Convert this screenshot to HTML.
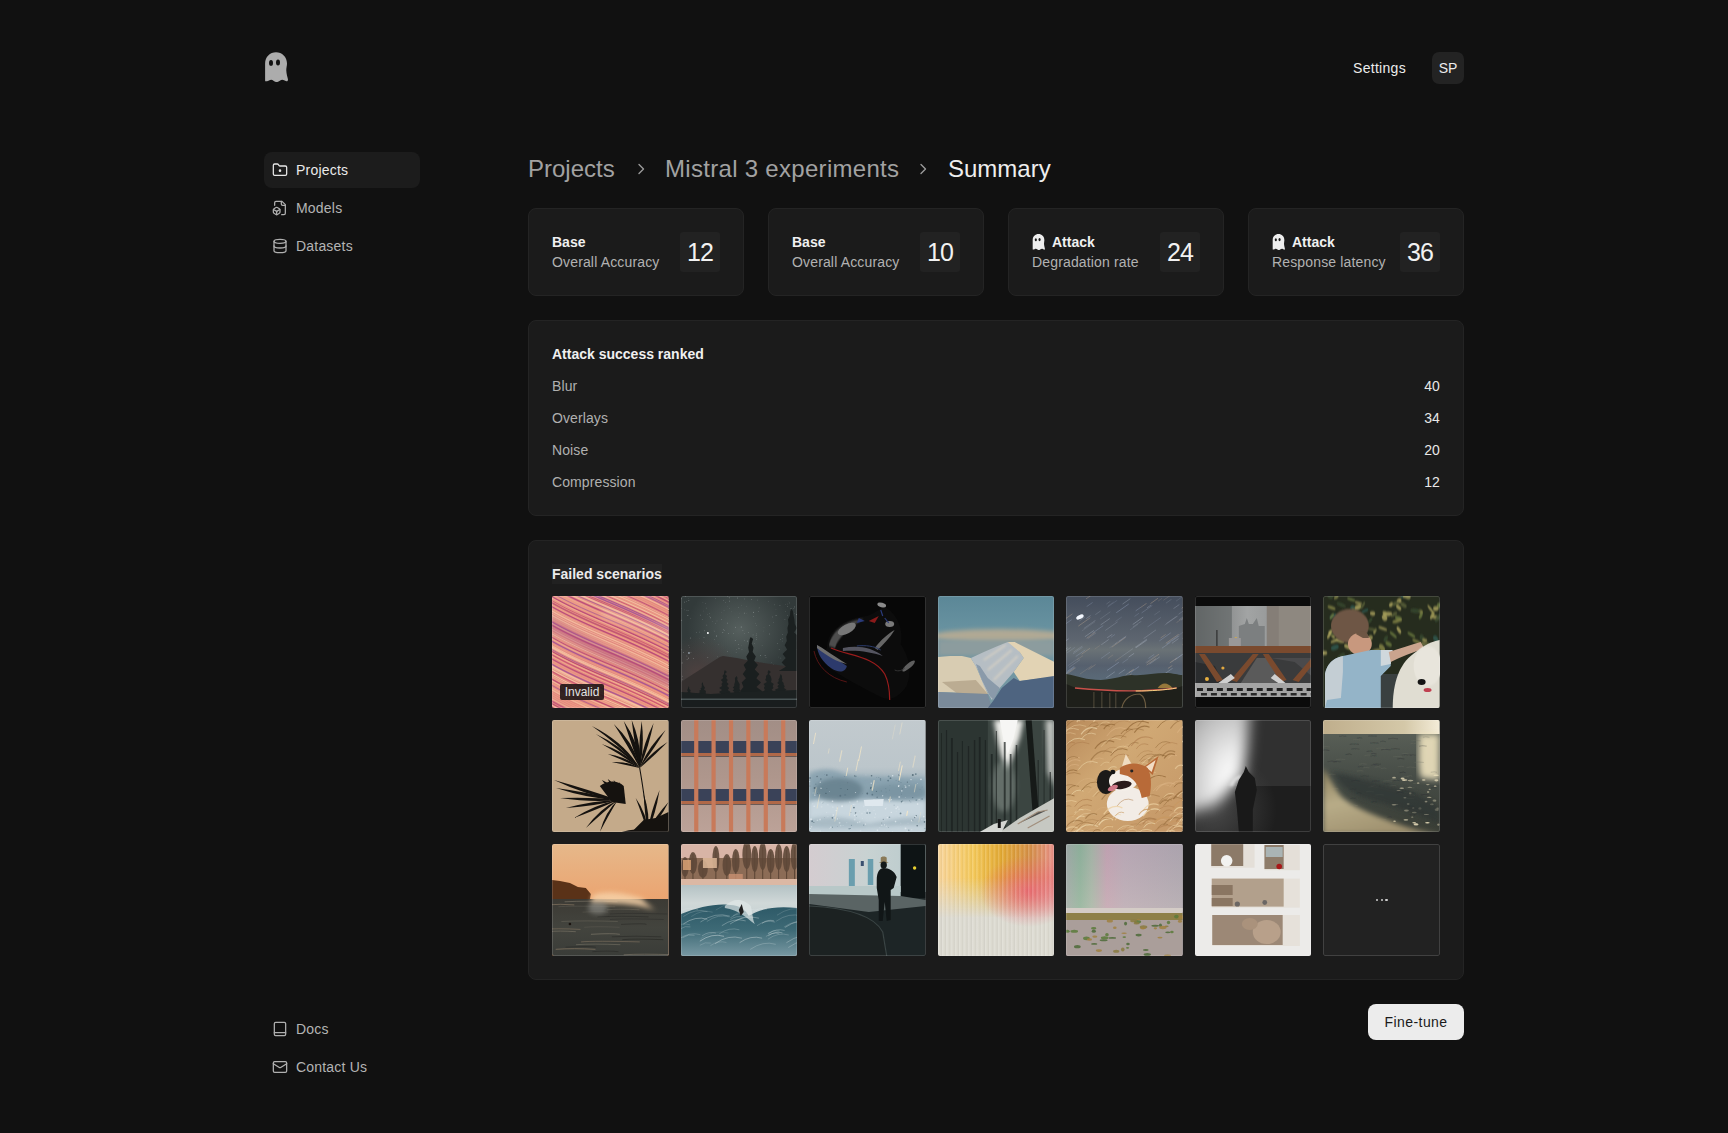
<!DOCTYPE html>
<html><head><meta charset="utf-8">
<style>
*{box-sizing:border-box;margin:0;padding:0}
html,body{width:1728px;height:1133px;background:#111111;overflow:hidden}
body{font-family:"Liberation Sans",sans-serif;font-size:14px;line-height:20px;color:#e6e6e6;position:relative}
.abs{position:absolute}
.logo{left:264px;top:52px;width:24px;height:30px}
.settings{left:1353px;top:58px;color:#ececec;letter-spacing:0.3px}
.avatar{left:1432px;top:52px;width:32px;height:32px;border-radius:7px;background:#232323;color:#ececec;text-align:center;line-height:32px;font-size:14px}
.nav{left:264px;width:156px;height:36px;border-radius:8px;padding:8px 0 0 32px;color:#b4b4b4;letter-spacing:0.2px}
.nav.active{background:#1c1c1c;color:#eaeaea}
.nav svg{position:absolute;left:8px;top:10px;width:16px;height:16px}
.crumb{top:153px;font-size:24px;line-height:32px;color:#a2a2a2}
.chev{top:163px;width:8px;height:12px}
.card{background:#1b1b1b;border:1px solid #242424;border-radius:8px}
.stat{top:208px;width:216px;height:88px}
.stat .t1{position:absolute;left:23px;top:23px;font-weight:bold;color:#f0f0f0}
.stat .t2{position:absolute;left:23px;top:43px;color:#b2b2b2;letter-spacing:0.15px}
.stat .num{position:absolute;left:151px;top:23px;width:40px;height:40px;background:#222222;border-radius:3px;color:#f2f2f2;font-size:25px;line-height:40px;text-align:center;letter-spacing:-1px}
.stat .gh{position:absolute;left:23px;top:25px;width:13px;height:16px}
.rank{left:528px;top:320px;width:936px;height:196px}
.rank .title{position:absolute;left:23px;top:23px;font-weight:bold;color:#f0f0f0}
.rank .row{position:absolute;left:23px;right:23px;height:20px;color:#b0b0b0;letter-spacing:0.1px}
.rank .row span{position:absolute;right:0;top:0;color:#e8e8e8}
.failed{left:528px;top:540px;width:936px;height:440px}
.failed .title{position:absolute;left:23px;top:23px;width:110px;height:20px;font-weight:bold;color:#ebebeb;background:#212121}
.grid{position:absolute;left:23px;top:55px;width:888px;display:grid;grid-template-columns:repeat(7,1fr);grid-template-rows:repeat(3,112px);column-gap:12px;row-gap:12px}
.tile{position:relative;overflow:hidden;border-radius:2px;height:112px}
.tile::after{content:"";position:absolute;inset:0;border:1px solid rgba(255,255,255,0.14);border-radius:2px}
.tile svg{position:absolute;left:0;top:0;width:100%;height:100%}
.btn{left:1368px;top:1004px;width:96px;height:36px;border-radius:8px;background:#ececec;color:#1a1a1a;text-align:center;line-height:36px;letter-spacing:0.45px}
</style></head><body>

<svg class="abs logo" viewBox="0 0 24 30"><path fill="#acacac" d="M1.1,29 L1.1,11.5 C1.1,5 6,0.2 12,0.2 C18,0.2 23,5 23,11.5 C23,14 22.2,16 22.3,18.5 C22.4,22 23.5,25 24,27.5 C24,29 23,29.5 22.5,29.3 C20.5,28.8 19.5,27.8 18.3,27.8 C16.5,27.8 14.5,30.1 12.7,30.1 C10.5,30.1 9,27.8 7.2,27.8 C5.5,27.8 4.5,29.2 2.9,29.2 C2,29.2 1.1,29.5 1.1,29 Z"/><ellipse cx="7" cy="10.9" rx="2" ry="2.9" fill="#111"/><ellipse cx="14" cy="10.5" rx="2" ry="2.9" fill="#111"/></svg>

<div class="abs settings">Settings</div>
<div class="abs avatar">SP</div>

<div class="abs nav active" style="top:152px">
<svg viewBox="0 0 24 24" fill="none" stroke="#e6e6e6" stroke-width="1.9" stroke-linecap="round" stroke-linejoin="round"><path d="M4 20h16a2 2 0 0 0 2-2V8a2 2 0 0 0-2-2h-7.9a2 2 0 0 1-1.69-.9L9.6 3.9A2 2 0 0 0 7.93 3H4a2 2 0 0 0-2 2v13c0 1.1.9 2 2 2Z"/><circle cx="12" cy="13" r="1" fill="#e6e6e6"/></svg>Projects</div>
<div class="abs nav" style="top:190px">
<svg viewBox="0 0 24 24" fill="none" stroke="#b0b0b0" stroke-width="1.9" stroke-linecap="round" stroke-linejoin="round"><path d="M14.5 22H18a2 2 0 0 0 2-2V7l-5-5H6a2 2 0 0 0-2 2v4"/><path d="M14 2v4a2 2 0 0 0 2 2h4"/><path d="M3 13.1a2 2 0 0 0-1 1.76v3.24a2 2 0 0 0 .97 1.78L6 21.7a2 2 0 0 0 2.03.01L11 19.9a2 2 0 0 0 1-1.76V14.9a2 2 0 0 0-.97-1.78L8 11.3a2 2 0 0 0-2.030-.01Z"/><path d="M7 17v5"/><path d="M11.700 14.2 7 17l-4.7-2.8"/></svg>Models</div>
<div class="abs nav" style="top:228px">
<svg viewBox="0 0 24 24" fill="none" stroke="#b0b0b0" stroke-width="1.9" stroke-linecap="round" stroke-linejoin="round"><ellipse cx="12" cy="5" rx="9" ry="3"/><path d="M3 5V19A9 3 0 0 0 21 19V5"/><path d="M3 12A9 3 0 0 0 21 12"/></svg>Datasets</div>

<div class="abs nav" style="top:1011px">
<svg viewBox="0 0 24 24" fill="none" stroke="#b0b0b0" stroke-width="1.9" stroke-linecap="round" stroke-linejoin="round"><rect x="3.5" y="2" width="17" height="20" rx="2"/><path d="M3.5 17.5h17"/></svg>Docs</div>
<div class="abs nav" style="top:1049px">
<svg viewBox="0 0 24 24" fill="none" stroke="#b0b0b0" stroke-width="1.9" stroke-linecap="round" stroke-linejoin="round"><rect width="20" height="16" x="2" y="4" rx="2"/><path d="m22 7-8.97 5.7a1.94 1.94 0 0 1-2.06 0L2 7"/></svg>Contact Us</div>

<div class="abs crumb" style="left:528px">Projects</div>
<svg class="abs chev" style="left:637px" viewBox="0 0 8 12" fill="none" stroke="#9a9a9a" stroke-width="1.4" stroke-linecap="round" stroke-linejoin="round"><path d="M2 1.5 6.5 6 2 10.5"/></svg>
<div class="abs crumb" style="left:665px;letter-spacing:0.3px">Mistral 3 experiments</div>
<svg class="abs chev" style="left:919px" viewBox="0 0 8 12" fill="none" stroke="#9a9a9a" stroke-width="1.4" stroke-linecap="round" stroke-linejoin="round"><path d="M2 1.5 6.5 6 2 10.5"/></svg>
<div class="abs crumb" style="left:948px;color:#eeeeee">Summary</div>

<div class="abs card stat" style="left:528px"><div class="t1">Base</div><div class="t2">Overall Accuracy</div><div class="num">12</div></div>
<div class="abs card stat" style="left:768px"><div class="t1">Base</div><div class="t2">Overall Accuracy</div><div class="num">10</div></div>
<div class="abs card stat" style="left:1008px"><svg class="gh" viewBox="0 0 24 30"><path fill="#eeeeee" d="M1.1,29 L1.1,11.5 C1.1,5 6,0.2 12,0.2 C18,0.2 23,5 23,11.5 C23,14 22.2,16 22.3,18.5 C22.4,22 23.5,25 24,27.5 C24,29 23,29.5 22.5,29.3 C20.5,28.8 19.5,27.8 18.3,27.8 C16.5,27.8 14.5,30.1 12.7,30.1 C10.5,30.1 9,27.8 7.2,27.8 C5.5,27.8 4.5,29.2 2.9,29.2 C2,29.2 1.1,29.5 1.1,29 Z"/><ellipse cx="7" cy="10.9" rx="2" ry="2.9" fill="#1b1b1b"/><ellipse cx="14" cy="10.5" rx="2" ry="2.9" fill="#1b1b1b"/></svg><div class="t1" style="left:43px">Attack</div><div class="t2">Degradation rate</div><div class="num">24</div></div>
<div class="abs card stat" style="left:1248px"><svg class="gh" viewBox="0 0 24 30"><path fill="#eeeeee" d="M1.1,29 L1.1,11.5 C1.1,5 6,0.2 12,0.2 C18,0.2 23,5 23,11.5 C23,14 22.2,16 22.3,18.5 C22.4,22 23.5,25 24,27.5 C24,29 23,29.5 22.5,29.3 C20.5,28.8 19.5,27.8 18.3,27.8 C16.5,27.8 14.5,30.1 12.7,30.1 C10.5,30.1 9,27.8 7.2,27.8 C5.5,27.8 4.5,29.2 2.9,29.2 C2,29.2 1.1,29.5 1.1,29 Z"/><ellipse cx="7" cy="10.9" rx="2" ry="2.9" fill="#1b1b1b"/><ellipse cx="14" cy="10.5" rx="2" ry="2.9" fill="#1b1b1b"/></svg><div class="t1" style="left:43px">Attack</div><div class="t2">Response latency</div><div class="num">36</div></div>

<div class="abs card rank">
<div class="title">Attack success ranked</div>
<div class="row" style="top:55px">Blur<span>40</span></div>
<div class="row" style="top:87px">Overlays<span>34</span></div>
<div class="row" style="top:119px">Noise<span>20</span></div>
<div class="row" style="top:151px">Compression<span>12</span></div>
</div>

<div class="abs card failed">
<div class="title">Failed scenarios</div>
<div class="grid">
<div class="tile"><svg viewBox="0 0 117 112" preserveAspectRatio="none"><defs><linearGradient id="g1a" x1="0" y1="0" x2="1" y2="1"><stop offset="0" stop-color="#e89a88"/><stop offset="0.5" stop-color="#e2887e"/><stop offset="1" stop-color="#ea927a"/></linearGradient><filter id="f1" x="-0.2" y="-0.5" width="1.4" height="2"><feGaussianBlur stdDeviation="3"/></filter></defs><rect width="117" height="112" fill="url(#g1a)"/><path d="M-5,-90.0 C30,-68.0 70,-58.0 122,-30.0" stroke="#9a4a9a" stroke-width="1.1" fill="none" opacity="0.56"/><path d="M-5,-87.6 C30,-65.6 70,-55.6 122,-27.6" stroke="#b03a78" stroke-width="1.4" fill="none" opacity="0.61"/><path d="M-5,-86.1 C30,-64.1 70,-54.1 122,-26.1" stroke="#f4b090" stroke-width="0.9" fill="none" opacity="0.63"/><path d="M-5,-83.7 C30,-61.7 70,-51.7 122,-23.7" stroke="#9a4a9a" stroke-width="1.2" fill="none" opacity="0.72"/><path d="M-5,-82.2 C30,-60.2 70,-50.2 122,-22.2" stroke="#f8c8a4" stroke-width="1.6" fill="none" opacity="0.51"/><path d="M-5,-79.8 C30,-57.8 70,-47.8 122,-19.8" stroke="#9a4a9a" stroke-width="1.2" fill="none" opacity="0.72"/><path d="M-5,-77.7 C30,-55.7 70,-45.7 122,-17.7" stroke="#f8c8a4" stroke-width="1.3" fill="none" opacity="0.69"/><path d="M-5,-75.9 C30,-53.9 70,-43.9 122,-15.9" stroke="#f8c8a4" stroke-width="1.3" fill="none" opacity="0.69"/><path d="M-5,-73.9 C30,-51.9 70,-41.9 122,-13.9" stroke="#fad2ac" stroke-width="1.2" fill="none" opacity="0.78"/><path d="M-5,-72.1 C30,-50.1 70,-40.1 122,-12.1" stroke="#9a4a9a" stroke-width="1.3" fill="none" opacity="0.62"/><path d="M-5,-70.0 C30,-48.0 70,-38.0 122,-10.0" stroke="#fad2ac" stroke-width="1.4" fill="none" opacity="0.59"/><path d="M-5,-67.4 C30,-45.4 70,-35.4 122,-7.4" stroke="#a8306a" stroke-width="0.9" fill="none" opacity="0.65"/><path d="M-5,-64.9 C30,-42.9 70,-32.9 122,-4.9" stroke="#f8c8a4" stroke-width="1.4" fill="none" opacity="0.67"/><path d="M-5,-62.4 C30,-40.4 70,-30.4 122,-2.4" stroke="#c24470" stroke-width="1.2" fill="none" opacity="0.72"/><path d="M-5,-60.5 C30,-38.5 70,-28.5 122,-0.5" stroke="#fad2ac" stroke-width="1.2" fill="none" opacity="0.70"/><path d="M-5,-59.0 C30,-37.0 70,-27.0 122,1.0" stroke="#f0a088" stroke-width="1.0" fill="none" opacity="0.62"/><path d="M-5,-56.8 C30,-34.8 70,-24.8 122,3.2" stroke="#a8306a" stroke-width="1.0" fill="none" opacity="0.73"/><path d="M-5,-54.8 C30,-32.8 70,-22.8 122,5.2" stroke="#c24470" stroke-width="0.9" fill="none" opacity="0.62"/><path d="M-5,-52.9 C30,-30.9 70,-20.9 122,7.1" stroke="#f8c8a4" stroke-width="0.9" fill="none" opacity="0.62"/><path d="M-5,-51.2 C30,-29.2 70,-19.2 122,8.8" stroke="#a8306a" stroke-width="1.4" fill="none" opacity="0.63"/><path d="M-5,-49.3 C30,-27.3 70,-17.3 122,10.7" stroke="#f0a088" stroke-width="1.6" fill="none" opacity="0.55"/><path d="M-5,-47.7 C30,-25.7 70,-15.7 122,12.3" stroke="#9a4a9a" stroke-width="0.8" fill="none" opacity="0.80"/><path d="M-5,-46.1 C30,-24.1 70,-14.1 122,13.9" stroke="#9a4a9a" stroke-width="1.1" fill="none" opacity="0.66"/><path d="M-5,-44.0 C30,-22.0 70,-12.0 122,16.0" stroke="#f8c8a4" stroke-width="1.2" fill="none" opacity="0.76"/><path d="M-5,-41.5 C30,-19.5 70,-9.5 122,18.5" stroke="#f0a088" stroke-width="1.1" fill="none" opacity="0.62"/><path d="M-5,-39.5 C30,-17.5 70,-7.5 122,20.5" stroke="#f4b090" stroke-width="0.9" fill="none" opacity="0.56"/><path d="M-5,-37.9 C30,-15.9 70,-5.9 122,22.1" stroke="#b03a78" stroke-width="0.9" fill="none" opacity="0.72"/><path d="M-5,-35.8 C30,-13.8 70,-3.8 122,24.2" stroke="#f8c8a4" stroke-width="0.9" fill="none" opacity="0.56"/><path d="M-5,-34.0 C30,-12.0 70,-2.0 122,26.0" stroke="#fad2ac" stroke-width="1.3" fill="none" opacity="0.64"/><path d="M-5,-32.5 C30,-10.5 70,-0.5 122,27.5" stroke="#f0a088" stroke-width="1.2" fill="none" opacity="0.59"/><path d="M-5,-30.9 C30,-8.9 70,1.1 122,29.1" stroke="#fad2ac" stroke-width="1.2" fill="none" opacity="0.71"/><path d="M-5,-28.9 C30,-6.9 70,3.1 122,31.1" stroke="#c24470" stroke-width="0.9" fill="none" opacity="0.71"/><path d="M-5,-27.4 C30,-5.4 70,4.6 122,32.6" stroke="#f8c8a4" stroke-width="1.4" fill="none" opacity="0.58"/><path d="M-5,-25.6 C30,-3.6 70,6.4 122,34.4" stroke="#9a4a9a" stroke-width="1.2" fill="none" opacity="0.78"/><path d="M-5,-23.8 C30,-1.8 70,8.2 122,36.2" stroke="#9a4a9a" stroke-width="1.4" fill="none" opacity="0.80"/><path d="M-5,-21.5 C30,0.5 70,10.5 122,38.5" stroke="#a8306a" stroke-width="1.0" fill="none" opacity="0.56"/><path d="M-5,-20.1 C30,1.9 70,11.9 122,39.9" stroke="#c24470" stroke-width="0.9" fill="none" opacity="0.73"/><path d="M-5,-18.3 C30,3.7 70,13.7 122,41.7" stroke="#fad2ac" stroke-width="1.6" fill="none" opacity="0.61"/><path d="M-5,-16.6 C30,5.4 70,15.4 122,43.4" stroke="#9a4a9a" stroke-width="1.0" fill="none" opacity="0.69"/><path d="M-5,-14.0 C30,8.0 70,18.0 122,46.0" stroke="#f8c8a4" stroke-width="1.2" fill="none" opacity="0.70"/><path d="M-5,-11.7 C30,10.3 70,20.3 122,48.3" stroke="#b03a78" stroke-width="1.4" fill="none" opacity="0.78"/><path d="M-5,-9.4 C30,12.6 70,22.6 122,50.6" stroke="#f4b090" stroke-width="1.1" fill="none" opacity="0.69"/><path d="M-5,-7.8 C30,14.2 70,24.2 122,52.2" stroke="#f0a088" stroke-width="1.2" fill="none" opacity="0.72"/><path d="M-5,-6.3 C30,15.7 70,25.7 122,53.7" stroke="#9a4a9a" stroke-width="0.8" fill="none" opacity="0.73"/><path d="M-5,-4.4 C30,17.6 70,27.6 122,55.6" stroke="#f0a088" stroke-width="1.3" fill="none" opacity="0.61"/><path d="M-5,-2.3 C30,19.7 70,29.7 122,57.7" stroke="#b03a78" stroke-width="1.4" fill="none" opacity="0.77"/><path d="M-5,-0.8 C30,21.2 70,31.2 122,59.2" stroke="#f4b090" stroke-width="1.1" fill="none" opacity="0.76"/><path d="M-5,1.6 C30,23.6 70,33.6 122,61.6" stroke="#c24470" stroke-width="0.9" fill="none" opacity="0.70"/><path d="M-5,3.9 C30,25.9 70,35.9 122,63.9" stroke="#a8306a" stroke-width="1.4" fill="none" opacity="0.57"/><path d="M-5,6.2 C30,28.2 70,38.2 122,66.2" stroke="#f0a088" stroke-width="1.5" fill="none" opacity="0.76"/><path d="M-5,7.7 C30,29.7 70,39.7 122,67.7" stroke="#b03a78" stroke-width="1.4" fill="none" opacity="0.78"/><path d="M-5,9.9 C30,31.9 70,41.9 122,69.9" stroke="#f4b090" stroke-width="0.9" fill="none" opacity="0.64"/><path d="M-5,12.1 C30,34.1 70,44.1 122,72.1" stroke="#fad2ac" stroke-width="1.3" fill="none" opacity="0.66"/><path d="M-5,14.1 C30,36.1 70,46.1 122,74.1" stroke="#f8c8a4" stroke-width="1.0" fill="none" opacity="0.58"/><path d="M-5,16.5 C30,38.5 70,48.5 122,76.5" stroke="#f8c8a4" stroke-width="1.4" fill="none" opacity="0.77"/><path d="M-5,18.4 C30,40.4 70,50.4 122,78.4" stroke="#f4b090" stroke-width="1.4" fill="none" opacity="0.64"/><path d="M-5,20.4 C30,42.4 70,52.4 122,80.4" stroke="#f4b090" stroke-width="1.4" fill="none" opacity="0.76"/><path d="M-5,23.0 C30,45.0 70,55.0 122,83.0" stroke="#9a4a9a" stroke-width="1.4" fill="none" opacity="0.59"/><path d="M-5,24.5 C30,46.5 70,56.5 122,84.5" stroke="#f8c8a4" stroke-width="1.3" fill="none" opacity="0.63"/><path d="M-5,26.2 C30,48.2 70,58.2 122,86.2" stroke="#b03a78" stroke-width="1.4" fill="none" opacity="0.60"/><path d="M-5,28.4 C30,50.4 70,60.4 122,88.4" stroke="#f4b090" stroke-width="1.0" fill="none" opacity="0.54"/><path d="M-5,30.4 C30,52.4 70,62.4 122,90.4" stroke="#f8c8a4" stroke-width="1.1" fill="none" opacity="0.65"/><path d="M-5,33.0 C30,55.0 70,65.0 122,93.0" stroke="#f4b090" stroke-width="1.4" fill="none" opacity="0.80"/><path d="M-5,34.8 C30,56.8 70,66.8 122,94.8" stroke="#fad2ac" stroke-width="1.1" fill="none" opacity="0.72"/><path d="M-5,36.3 C30,58.3 70,68.3 122,96.3" stroke="#f0a088" stroke-width="1.4" fill="none" opacity="0.62"/><path d="M-5,38.3 C30,60.3 70,70.3 122,98.3" stroke="#b03a78" stroke-width="0.9" fill="none" opacity="0.83"/><path d="M-5,40.0 C30,62.0 70,72.0 122,100.0" stroke="#f8c8a4" stroke-width="1.0" fill="none" opacity="0.51"/><path d="M-5,42.3 C30,64.3 70,74.3 122,102.3" stroke="#9a4a9a" stroke-width="1.4" fill="none" opacity="0.80"/><path d="M-5,44.5 C30,66.5 70,76.5 122,104.5" stroke="#f0a088" stroke-width="0.9" fill="none" opacity="0.78"/><path d="M-5,46.6 C30,68.6 70,78.6 122,106.6" stroke="#f8c8a4" stroke-width="1.0" fill="none" opacity="0.74"/><path d="M-5,48.2 C30,70.2 70,80.2 122,108.2" stroke="#fad2ac" stroke-width="1.6" fill="none" opacity="0.69"/><path d="M-5,50.6 C30,72.6 70,82.6 122,110.6" stroke="#9a4a9a" stroke-width="0.8" fill="none" opacity="0.81"/><path d="M-5,52.5 C30,74.5 70,84.5 122,112.5" stroke="#a8306a" stroke-width="1.4" fill="none" opacity="0.63"/><path d="M-5,54.1 C30,76.1 70,86.1 122,114.1" stroke="#f4b090" stroke-width="1.6" fill="none" opacity="0.79"/><path d="M-5,55.8 C30,77.8 70,87.8 122,115.8" stroke="#c24470" stroke-width="1.2" fill="none" opacity="0.71"/><path d="M-5,57.4 C30,79.4 70,89.4 122,117.4" stroke="#f4b090" stroke-width="1.0" fill="none" opacity="0.74"/><path d="M-5,60.0 C30,82.0 70,92.0 122,120.0" stroke="#b03a78" stroke-width="1.3" fill="none" opacity="0.72"/><path d="M-5,61.7 C30,83.7 70,93.7 122,121.7" stroke="#f0a088" stroke-width="0.9" fill="none" opacity="0.75"/><path d="M-5,63.6 C30,85.6 70,95.6 122,123.6" stroke="#f0a088" stroke-width="1.6" fill="none" opacity="0.59"/><path d="M-5,65.2 C30,87.2 70,97.2 122,125.2" stroke="#9a4a9a" stroke-width="1.4" fill="none" opacity="0.76"/><path d="M-5,67.4 C30,89.4 70,99.4 122,127.4" stroke="#fad2ac" stroke-width="1.6" fill="none" opacity="0.75"/><path d="M-5,68.8 C30,90.8 70,100.8 122,128.8" stroke="#fad2ac" stroke-width="1.1" fill="none" opacity="0.52"/><path d="M-5,71.0 C30,93.0 70,103.0 122,131.0" stroke="#fad2ac" stroke-width="1.3" fill="none" opacity="0.71"/><path d="M-5,72.5 C30,94.5 70,104.5 122,132.5" stroke="#c24470" stroke-width="1.1" fill="none" opacity="0.63"/><path d="M-5,75.0 C30,97.0 70,107.0 122,135.0" stroke="#fad2ac" stroke-width="1.0" fill="none" opacity="0.79"/><path d="M-5,76.8 C30,98.8 70,108.8 122,136.8" stroke="#f8c8a4" stroke-width="1.1" fill="none" opacity="0.53"/><path d="M-5,78.5 C30,100.5 70,110.5 122,138.5" stroke="#f4b090" stroke-width="1.2" fill="none" opacity="0.50"/><path d="M-5,80.2 C30,102.2 70,112.2 122,140.2" stroke="#a8306a" stroke-width="1.2" fill="none" opacity="0.67"/><path d="M-5,82.0 C30,104.0 70,114.0 122,142.0" stroke="#f8c8a4" stroke-width="1.3" fill="none" opacity="0.66"/><path d="M-5,84.3 C30,106.3 70,116.3 122,144.3" stroke="#f0a088" stroke-width="1.4" fill="none" opacity="0.72"/><path d="M-5,86.3 C30,108.3 70,118.3 122,146.3" stroke="#9a4a9a" stroke-width="0.8" fill="none" opacity="0.80"/><path d="M-5,88.8 C30,110.8 70,120.8 122,148.8" stroke="#f4b090" stroke-width="1.5" fill="none" opacity="0.73"/><path d="M-5,90.9 C30,112.9 70,122.9 122,150.9" stroke="#f8c8a4" stroke-width="1.5" fill="none" opacity="0.68"/><path d="M-5,93.3 C30,115.3 70,125.3 122,153.3" stroke="#f4b090" stroke-width="0.9" fill="none" opacity="0.51"/><path d="M-5,95.5 C30,117.5 70,127.5 122,155.5" stroke="#f0a088" stroke-width="1.5" fill="none" opacity="0.67"/><path d="M-5,97.6 C30,119.6 70,129.6 122,157.6" stroke="#f4b090" stroke-width="1.2" fill="none" opacity="0.50"/><path d="M-5,100.0 C30,122.0 70,132.0 122,160.0" stroke="#f8c8a4" stroke-width="1.3" fill="none" opacity="0.52"/><path d="M-5,102.3 C30,124.3 70,134.3 122,162.3" stroke="#b03a78" stroke-width="1.4" fill="none" opacity="0.62"/><path d="M-5,104.6 C30,126.6 70,136.6 122,164.6" stroke="#a8306a" stroke-width="1.1" fill="none" opacity="0.66"/><path d="M-5,106.6 C30,128.6 70,138.6 122,166.6" stroke="#f8c8a4" stroke-width="1.3" fill="none" opacity="0.69"/><path d="M-5,108.1 C30,130.1 70,140.1 122,168.1" stroke="#c24470" stroke-width="1.3" fill="none" opacity="0.76"/><path d="M-5,110.2 C30,132.2 70,142.2 122,170.2" stroke="#a8306a" stroke-width="0.8" fill="none" opacity="0.63"/><path d="M-5,112.4 C30,134.4 70,144.4 122,172.4" stroke="#f0a088" stroke-width="1.0" fill="none" opacity="0.65"/><path d="M-5,114.4 C30,136.4 70,146.4 122,174.4" stroke="#f8c8a4" stroke-width="1.6" fill="none" opacity="0.66"/><path d="M-5,116.1 C30,138.1 70,148.1 122,176.1" stroke="#a8306a" stroke-width="0.8" fill="none" opacity="0.69"/><path d="M-5,118.5 C30,140.5 70,150.5 122,178.5" stroke="#f0a088" stroke-width="1.6" fill="none" opacity="0.62"/><path d="M-5,121.0 C30,143.0 70,153.0 122,181.0" stroke="#f8c8a4" stroke-width="1.3" fill="none" opacity="0.54"/><path d="M-5,123.1 C30,145.1 70,155.1 122,183.1" stroke="#f4b090" stroke-width="1.3" fill="none" opacity="0.69"/><path d="M-5,124.8 C30,146.8 70,156.8 122,184.8" stroke="#c24470" stroke-width="1.0" fill="none" opacity="0.82"/><path d="M-5,126.8 C30,148.8 70,158.8 122,186.8" stroke="#b03a78" stroke-width="1.5" fill="none" opacity="0.75"/><path d="M-5,128.7 C30,150.7 70,160.7 122,188.7" stroke="#f0a088" stroke-width="1.1" fill="none" opacity="0.59"/><path d="M-5,131.1 C30,153.1 70,163.1 122,191.1" stroke="#c24470" stroke-width="1.4" fill="none" opacity="0.59"/><path d="M-5,133.6 C30,155.6 70,165.6 122,193.6" stroke="#fad2ac" stroke-width="1.0" fill="none" opacity="0.52"/><path d="M-5,135.4 C30,157.4 70,167.4 122,195.4" stroke="#f8c8a4" stroke-width="1.1" fill="none" opacity="0.63"/><path d="M-5,137.2 C30,159.2 70,169.2 122,197.2" stroke="#b03a78" stroke-width="0.8" fill="none" opacity="0.75"/><path d="M-5,139.3 C30,161.3 70,171.3 122,199.3" stroke="#c24470" stroke-width="1.1" fill="none" opacity="0.64"/><path d="M-5,141.7 C30,163.7 70,173.7 122,201.7" stroke="#f0a088" stroke-width="1.5" fill="none" opacity="0.74"/><path d="M-5,143.8 C30,165.8 70,175.8 122,203.8" stroke="#f4b090" stroke-width="1.4" fill="none" opacity="0.51"/><path d="M-5,146.1 C30,168.1 70,178.1 122,206.1" stroke="#f4b090" stroke-width="1.3" fill="none" opacity="0.59"/><path d="M-5,147.6 C30,169.6 70,179.6 122,207.6" stroke="#f4b090" stroke-width="0.9" fill="none" opacity="0.62"/><path d="M-5,149.3 C30,171.3 70,181.3 122,209.3" stroke="#c24470" stroke-width="1.1" fill="none" opacity="0.62"/><path d="M-5,18 C25,36 60,54 122,80 L122,94 C60,68 25,50 -5,34 Z" fill="#8a2a80" opacity="0.3" filter="url(#f1)"/><path d="M50,10 C70,18 90,24 122,30 L122,44 C90,36 70,28 50,22 Z" fill="#fff0d0" opacity="0.22" filter="url(#f1)"/></svg><div style="position:absolute;left:8px;top:88px;width:44px;height:16px;background:rgba(32,22,22,0.9);border-radius:2px;color:#e2e2e2;font-size:12px;line-height:16px;text-align:center;z-index:2">Invalid</div></div>
<div class="tile"><svg viewBox="0 0 117 112" preserveAspectRatio="none"><defs><radialGradient id="g2a" cx="0.5" cy="0.3" r="0.45"><stop offset="0" stop-color="#5e6866" stop-opacity="0.8"/><stop offset="1" stop-color="#5e6866" stop-opacity="0"/></radialGradient><radialGradient id="g2b" cx="0.15" cy="0.7" r="0.35"><stop offset="0" stop-color="#5a4442" stop-opacity="0.7"/><stop offset="1" stop-color="#5a4442" stop-opacity="0"/></radialGradient></defs><rect width="117" height="112" fill="#323a3a"/><rect width="117" height="112" fill="url(#g2a)"/><rect width="117" height="112" fill="url(#g2b)"/><circle cx="78.3" cy="12.0" r="0.36" fill="#d8e0e0" opacity="0.34"/><circle cx="58.6" cy="81.2" r="0.34" fill="#d8e0e0" opacity="0.53"/><circle cx="38.9" cy="75.9" r="0.31" fill="#d8e0e0" opacity="0.57"/><circle cx="28.6" cy="17.5" r="0.34" fill="#d8e0e0" opacity="0.46"/><circle cx="43.1" cy="80.9" r="0.25" fill="#d8e0e0" opacity="0.31"/><circle cx="101.9" cy="38.3" r="0.39" fill="#d8e0e0" opacity="0.41"/><circle cx="31.6" cy="75.2" r="0.32" fill="#d8e0e0" opacity="0.59"/><circle cx="42.1" cy="68.7" r="0.33" fill="#d8e0e0" opacity="0.70"/><circle cx="99.3" cy="9.3" r="0.42" fill="#d8e0e0" opacity="0.49"/><circle cx="75.6" cy="43.2" r="0.28" fill="#d8e0e0" opacity="0.71"/><circle cx="113.3" cy="12.7" r="0.31" fill="#d8e0e0" opacity="0.68"/><circle cx="94.1" cy="96.8" r="0.32" fill="#d8e0e0" opacity="0.34"/><circle cx="108.8" cy="92.8" r="0.33" fill="#d8e0e0" opacity="0.53"/><circle cx="52.5" cy="78.3" r="0.26" fill="#d8e0e0" opacity="0.38"/><circle cx="113.7" cy="10.9" r="0.41" fill="#d8e0e0" opacity="0.65"/><circle cx="99.0" cy="89.5" r="0.22" fill="#d8e0e0" opacity="0.69"/><circle cx="0.2" cy="12.6" r="0.34" fill="#d8e0e0" opacity="0.32"/><circle cx="83.7" cy="96.2" r="0.36" fill="#d8e0e0" opacity="0.56"/><circle cx="51.2" cy="76.4" r="0.22" fill="#d8e0e0" opacity="0.45"/><circle cx="110.4" cy="19.2" r="0.27" fill="#d8e0e0" opacity="0.70"/><circle cx="0.1" cy="53.7" r="0.45" fill="#d8e0e0" opacity="0.44"/><circle cx="37.0" cy="83.9" r="0.26" fill="#d8e0e0" opacity="0.56"/><circle cx="64.0" cy="2.9" r="0.30" fill="#d8e0e0" opacity="0.62"/><circle cx="6.5" cy="19.4" r="0.42" fill="#d8e0e0" opacity="0.62"/><circle cx="9.5" cy="22.8" r="0.31" fill="#d8e0e0" opacity="0.49"/><circle cx="57.7" cy="69.6" r="0.38" fill="#d8e0e0" opacity="0.48"/><circle cx="46.4" cy="0.7" r="0.27" fill="#d8e0e0" opacity="0.72"/><circle cx="7.9" cy="49.6" r="0.25" fill="#d8e0e0" opacity="0.68"/><circle cx="22.7" cy="46.5" r="0.27" fill="#d8e0e0" opacity="0.74"/><circle cx="12.8" cy="62.4" r="0.35" fill="#d8e0e0" opacity="0.75"/><circle cx="56.8" cy="91.0" r="0.21" fill="#d8e0e0" opacity="0.60"/><circle cx="107.9" cy="5.4" r="0.21" fill="#d8e0e0" opacity="0.60"/><circle cx="48.6" cy="71.0" r="0.25" fill="#d8e0e0" opacity="0.52"/><circle cx="83.3" cy="31.4" r="0.23" fill="#d8e0e0" opacity="0.34"/><circle cx="19.4" cy="19.1" r="0.36" fill="#d8e0e0" opacity="0.56"/><circle cx="54.7" cy="31.2" r="0.38" fill="#d8e0e0" opacity="0.72"/><circle cx="115.2" cy="44.2" r="0.23" fill="#d8e0e0" opacity="0.34"/><circle cx="9.4" cy="42.0" r="0.42" fill="#d8e0e0" opacity="0.58"/><circle cx="88.8" cy="38.0" r="0.39" fill="#d8e0e0" opacity="0.45"/><circle cx="94.1" cy="8.8" r="0.38" fill="#d8e0e0" opacity="0.40"/><circle cx="63.4" cy="44.6" r="0.28" fill="#d8e0e0" opacity="0.67"/><circle cx="55.5" cy="63.2" r="0.26" fill="#d8e0e0" opacity="0.61"/><circle cx="47.4" cy="37.6" r="0.32" fill="#d8e0e0" opacity="0.70"/><circle cx="7.3" cy="19.5" r="0.22" fill="#d8e0e0" opacity="0.60"/><circle cx="42.5" cy="33.5" r="0.44" fill="#d8e0e0" opacity="0.32"/><circle cx="87.3" cy="69.0" r="0.43" fill="#d8e0e0" opacity="0.45"/><circle cx="84.4" cy="59.6" r="0.40" fill="#d8e0e0" opacity="0.77"/><circle cx="7.6" cy="82.6" r="0.23" fill="#d8e0e0" opacity="0.66"/><circle cx="54.5" cy="77.6" r="0.40" fill="#d8e0e0" opacity="0.76"/><circle cx="95.3" cy="13.3" r="0.32" fill="#d8e0e0" opacity="0.30"/><circle cx="108.9" cy="30.3" r="0.37" fill="#d8e0e0" opacity="0.38"/><circle cx="27.6" cy="86.1" r="0.32" fill="#d8e0e0" opacity="0.69"/><circle cx="69.7" cy="51.2" r="0.30" fill="#d8e0e0" opacity="0.38"/><circle cx="47.7" cy="65.0" r="0.32" fill="#d8e0e0" opacity="0.57"/><circle cx="18.8" cy="42.7" r="0.23" fill="#d8e0e0" opacity="0.34"/><circle cx="73.1" cy="20.8" r="0.31" fill="#d8e0e0" opacity="0.79"/><circle cx="113.7" cy="17.3" r="0.23" fill="#d8e0e0" opacity="0.53"/><circle cx="104.3" cy="23.5" r="0.33" fill="#d8e0e0" opacity="0.69"/><circle cx="88.9" cy="78.0" r="0.27" fill="#d8e0e0" opacity="0.44"/><circle cx="31.3" cy="25.4" r="0.27" fill="#d8e0e0" opacity="0.52"/><circle cx="21.7" cy="23.6" r="0.27" fill="#d8e0e0" opacity="0.75"/><circle cx="22.0" cy="6.5" r="0.26" fill="#d8e0e0" opacity="0.42"/><circle cx="61.6" cy="65.0" r="0.23" fill="#d8e0e0" opacity="0.53"/><circle cx="4.3" cy="0.4" r="0.42" fill="#d8e0e0" opacity="0.42"/><circle cx="52.5" cy="37.4" r="0.42" fill="#d8e0e0" opacity="0.42"/><circle cx="5.9" cy="60.0" r="0.41" fill="#d8e0e0" opacity="0.40"/><circle cx="8.8" cy="51.3" r="0.24" fill="#d8e0e0" opacity="0.60"/><circle cx="90.7" cy="66.5" r="0.20" fill="#d8e0e0" opacity="0.62"/><circle cx="83.0" cy="35.0" r="0.21" fill="#d8e0e0" opacity="0.47"/><circle cx="5.2" cy="100.0" r="0.21" fill="#d8e0e0" opacity="0.67"/><circle cx="106.9" cy="81.5" r="0.40" fill="#d8e0e0" opacity="0.50"/><circle cx="43.5" cy="62.1" r="0.22" fill="#d8e0e0" opacity="0.32"/><circle cx="58.0" cy="48.4" r="0.30" fill="#d8e0e0" opacity="0.70"/><circle cx="77.7" cy="15.5" r="0.33" fill="#d8e0e0" opacity="0.63"/><circle cx="46.5" cy="27.1" r="0.45" fill="#d8e0e0" opacity="0.63"/><circle cx="48.9" cy="5.1" r="0.39" fill="#d8e0e0" opacity="0.74"/><circle cx="48.4" cy="1.8" r="0.39" fill="#d8e0e0" opacity="0.70"/><circle cx="75.4" cy="39.1" r="0.30" fill="#d8e0e0" opacity="0.77"/><circle cx="50.8" cy="15.7" r="0.23" fill="#d8e0e0" opacity="0.35"/><circle cx="67.6" cy="36.5" r="0.39" fill="#d8e0e0" opacity="0.36"/><circle cx="6.0" cy="14.2" r="0.40" fill="#d8e0e0" opacity="0.50"/><circle cx="67.0" cy="92.7" r="0.38" fill="#d8e0e0" opacity="0.39"/><circle cx="40.7" cy="16.2" r="0.24" fill="#d8e0e0" opacity="0.33"/><circle cx="44.9" cy="75.4" r="0.40" fill="#d8e0e0" opacity="0.70"/><circle cx="35.3" cy="83.7" r="0.21" fill="#d8e0e0" opacity="0.76"/><circle cx="36.8" cy="60.8" r="0.36" fill="#d8e0e0" opacity="0.34"/><circle cx="83.3" cy="68.8" r="0.42" fill="#d8e0e0" opacity="0.62"/><circle cx="100.2" cy="62.1" r="0.35" fill="#d8e0e0" opacity="0.40"/><circle cx="55.3" cy="56.5" r="0.21" fill="#d8e0e0" opacity="0.77"/><circle cx="18.3" cy="35.9" r="0.24" fill="#d8e0e0" opacity="0.79"/><circle cx="95.4" cy="19.3" r="0.42" fill="#d8e0e0" opacity="0.72"/><circle cx="78.7" cy="66.8" r="0.28" fill="#d8e0e0" opacity="0.49"/><circle cx="53.3" cy="84.9" r="0.39" fill="#d8e0e0" opacity="0.62"/><circle cx="36.1" cy="24.9" r="0.30" fill="#d8e0e0" opacity="0.48"/><circle cx="58.9" cy="17.9" r="0.20" fill="#d8e0e0" opacity="0.79"/><circle cx="54.4" cy="44.7" r="0.35" fill="#d8e0e0" opacity="0.71"/><circle cx="97.9" cy="81.1" r="0.30" fill="#d8e0e0" opacity="0.33"/><circle cx="42.0" cy="36.5" r="0.40" fill="#d8e0e0" opacity="0.55"/><circle cx="76.9" cy="4.1" r="0.23" fill="#d8e0e0" opacity="0.76"/><circle cx="36.7" cy="72.0" r="0.22" fill="#d8e0e0" opacity="0.68"/><circle cx="104.7" cy="65.3" r="0.40" fill="#d8e0e0" opacity="0.31"/><circle cx="7.8" cy="61.4" r="0.37" fill="#d8e0e0" opacity="0.35"/><circle cx="15.4" cy="88.6" r="0.27" fill="#d8e0e0" opacity="0.71"/><circle cx="93.0" cy="68.6" r="0.38" fill="#d8e0e0" opacity="0.41"/><circle cx="97.5" cy="61.0" r="0.26" fill="#d8e0e0" opacity="0.46"/><circle cx="71.8" cy="90.5" r="0.31" fill="#d8e0e0" opacity="0.43"/><circle cx="112.8" cy="48.0" r="0.35" fill="#d8e0e0" opacity="0.61"/><circle cx="27.8" cy="37.2" r="0.25" fill="#d8e0e0" opacity="0.50"/><circle cx="74.5" cy="27.8" r="0.28" fill="#d8e0e0" opacity="0.49"/><circle cx="92.7" cy="26.4" r="0.39" fill="#d8e0e0" opacity="0.32"/><circle cx="100.4" cy="96.6" r="0.31" fill="#d8e0e0" opacity="0.56"/><circle cx="80.6" cy="89.6" r="0.26" fill="#d8e0e0" opacity="0.57"/><circle cx="100.2" cy="73.8" r="0.29" fill="#d8e0e0" opacity="0.49"/><circle cx="43.2" cy="14.6" r="0.28" fill="#d8e0e0" opacity="0.34"/><circle cx="26.9" cy="61.5" r="0.44" fill="#d8e0e0" opacity="0.45"/><circle cx="60.4" cy="31.0" r="0.44" fill="#d8e0e0" opacity="0.74"/><circle cx="108.6" cy="89.6" r="0.38" fill="#d8e0e0" opacity="0.67"/><circle cx="25.9" cy="29.1" r="0.36" fill="#d8e0e0" opacity="0.51"/><circle cx="42.6" cy="4.8" r="0.32" fill="#d8e0e0" opacity="0.61"/><circle cx="5.3" cy="5.4" r="0.34" fill="#d8e0e0" opacity="0.45"/><circle cx="61.2" cy="53.4" r="0.30" fill="#d8e0e0" opacity="0.45"/><circle cx="15.6" cy="36.6" r="0.41" fill="#d8e0e0" opacity="0.38"/><circle cx="1.7" cy="80.2" r="0.38" fill="#d8e0e0" opacity="0.53"/><circle cx="7.4" cy="14.5" r="0.37" fill="#d8e0e0" opacity="0.43"/><circle cx="95.0" cy="96.7" r="0.21" fill="#d8e0e0" opacity="0.71"/><circle cx="104.4" cy="59.5" r="0.34" fill="#d8e0e0" opacity="0.60"/><circle cx="60.6" cy="49.3" r="0.24" fill="#d8e0e0" opacity="0.30"/><circle cx="7.2" cy="2.5" r="0.25" fill="#d8e0e0" opacity="0.38"/><circle cx="106.7" cy="10.5" r="0.35" fill="#d8e0e0" opacity="0.63"/><circle cx="23.1" cy="41.3" r="0.33" fill="#d8e0e0" opacity="0.62"/><circle cx="75.8" cy="41.5" r="0.35" fill="#d8e0e0" opacity="0.55"/><circle cx="7.5" cy="62.6" r="0.45" fill="#d8e0e0" opacity="0.66"/><circle cx="55.9" cy="53.8" r="0.29" fill="#d8e0e0" opacity="0.52"/><circle cx="106.7" cy="8.0" r="0.36" fill="#d8e0e0" opacity="0.39"/><circle cx="116.6" cy="26.1" r="0.36" fill="#d8e0e0" opacity="0.36"/><circle cx="104.3" cy="92.5" r="0.44" fill="#d8e0e0" opacity="0.43"/><circle cx="6.1" cy="63.6" r="0.37" fill="#d8e0e0" opacity="0.64"/><circle cx="107.3" cy="97.2" r="0.27" fill="#d8e0e0" opacity="0.76"/><circle cx="104.6" cy="8.5" r="0.33" fill="#d8e0e0" opacity="0.38"/><circle cx="105.9" cy="84.2" r="0.25" fill="#d8e0e0" opacity="0.38"/><circle cx="107.1" cy="19.2" r="0.30" fill="#d8e0e0" opacity="0.60"/><circle cx="44.4" cy="85.2" r="0.43" fill="#d8e0e0" opacity="0.79"/><circle cx="98.5" cy="53.6" r="0.32" fill="#d8e0e0" opacity="0.57"/><circle cx="0.7" cy="2.7" r="0.44" fill="#d8e0e0" opacity="0.42"/><circle cx="103.5" cy="78.9" r="0.30" fill="#d8e0e0" opacity="0.59"/><circle cx="66.1" cy="17.2" r="0.21" fill="#d8e0e0" opacity="0.36"/><circle cx="72.8" cy="16.2" r="0.44" fill="#d8e0e0" opacity="0.65"/><circle cx="3.6" cy="13.8" r="0.36" fill="#d8e0e0" opacity="0.32"/><circle cx="7.9" cy="4.7" r="0.41" fill="#d8e0e0" opacity="0.68"/><circle cx="23.3" cy="95.5" r="0.33" fill="#d8e0e0" opacity="0.63"/><circle cx="102.9" cy="75.6" r="0.38" fill="#d8e0e0" opacity="0.49"/><circle cx="28.8" cy="20.3" r="0.21" fill="#d8e0e0" opacity="0.77"/><circle cx="106.6" cy="75.4" r="0.22" fill="#d8e0e0" opacity="0.68"/><circle cx="74.0" cy="47.7" r="0.23" fill="#d8e0e0" opacity="0.70"/><circle cx="75.6" cy="29.4" r="0.28" fill="#d8e0e0" opacity="0.43"/><circle cx="41.1" cy="93.0" r="0.21" fill="#d8e0e0" opacity="0.68"/><circle cx="106.5" cy="76.9" r="0.35" fill="#d8e0e0" opacity="0.54"/><circle cx="33.7" cy="74.6" r="0.40" fill="#d8e0e0" opacity="0.32"/><circle cx="60.7" cy="9.8" r="0.32" fill="#d8e0e0" opacity="0.32"/><circle cx="66.2" cy="71.4" r="0.41" fill="#d8e0e0" opacity="0.59"/><circle cx="33.6" cy="43.6" r="0.33" fill="#d8e0e0" opacity="0.44"/><circle cx="87.8" cy="5.4" r="0.29" fill="#d8e0e0" opacity="0.35"/><circle cx="81.3" cy="82.5" r="0.44" fill="#d8e0e0" opacity="0.60"/><circle cx="112.0" cy="51.5" r="0.34" fill="#d8e0e0" opacity="0.38"/><circle cx="95.4" cy="93.8" r="0.26" fill="#d8e0e0" opacity="0.38"/><circle cx="109.8" cy="76.7" r="0.32" fill="#d8e0e0" opacity="0.80"/><circle cx="65.7" cy="10.5" r="0.28" fill="#d8e0e0" opacity="0.35"/><circle cx="108.6" cy="89.2" r="0.39" fill="#d8e0e0" opacity="0.51"/><circle cx="75.6" cy="37.2" r="0.28" fill="#d8e0e0" opacity="0.51"/><circle cx="63.8" cy="17.1" r="0.45" fill="#d8e0e0" opacity="0.62"/><circle cx="110.4" cy="12.7" r="0.35" fill="#d8e0e0" opacity="0.64"/><circle cx="70.8" cy="3.4" r="0.35" fill="#d8e0e0" opacity="0.56"/><circle cx="101.6" cy="45.0" r="0.34" fill="#d8e0e0" opacity="0.46"/><circle cx="54.2" cy="68.9" r="0.26" fill="#d8e0e0" opacity="0.42"/><circle cx="39.1" cy="64.3" r="0.37" fill="#d8e0e0" opacity="0.55"/><circle cx="31.3" cy="75.5" r="0.41" fill="#d8e0e0" opacity="0.61"/><circle cx="84.6" cy="97.5" r="0.38" fill="#d8e0e0" opacity="0.60"/><circle cx="40.8" cy="23.6" r="0.44" fill="#d8e0e0" opacity="0.43"/><circle cx="111.7" cy="99.5" r="0.24" fill="#d8e0e0" opacity="0.63"/><circle cx="22.9" cy="15.1" r="0.24" fill="#d8e0e0" opacity="0.45"/><circle cx="34.8" cy="27.4" r="0.23" fill="#d8e0e0" opacity="0.76"/><circle cx="32.9" cy="88.5" r="0.32" fill="#d8e0e0" opacity="0.31"/><circle cx="100.0" cy="43.7" r="0.26" fill="#d8e0e0" opacity="0.79"/><circle cx="34.7" cy="2.2" r="0.26" fill="#d8e0e0" opacity="0.67"/><circle cx="0.6" cy="24.2" r="0.41" fill="#d8e0e0" opacity="0.65"/><circle cx="68.7" cy="64.7" r="0.41" fill="#d8e0e0" opacity="0.63"/><circle cx="76.3" cy="87.8" r="0.36" fill="#d8e0e0" opacity="0.59"/><circle cx="26.7" cy="18.2" r="0.23" fill="#d8e0e0" opacity="0.52"/><circle cx="30.4" cy="70.1" r="0.42" fill="#d8e0e0" opacity="0.42"/><circle cx="46.8" cy="71.3" r="0.24" fill="#d8e0e0" opacity="0.72"/><circle cx="56.5" cy="2.0" r="0.41" fill="#d8e0e0" opacity="0.56"/><circle cx="77.3" cy="87.3" r="0.42" fill="#d8e0e0" opacity="0.46"/><circle cx="1.2" cy="83.2" r="0.43" fill="#d8e0e0" opacity="0.35"/><circle cx="29.4" cy="21.8" r="0.38" fill="#d8e0e0" opacity="0.78"/><circle cx="23.4" cy="34.8" r="0.41" fill="#d8e0e0" opacity="0.53"/><circle cx="24.0" cy="47.6" r="0.20" fill="#d8e0e0" opacity="0.70"/><circle cx="43.3" cy="34.3" r="0.39" fill="#d8e0e0" opacity="0.53"/><circle cx="115.9" cy="18.4" r="0.33" fill="#d8e0e0" opacity="0.77"/><circle cx="85.3" cy="61.4" r="0.36" fill="#d8e0e0" opacity="0.43"/><circle cx="44.7" cy="6.2" r="0.22" fill="#d8e0e0" opacity="0.76"/><circle cx="73.5" cy="67.5" r="0.35" fill="#d8e0e0" opacity="0.35"/><circle cx="35.5" cy="40.0" r="0.44" fill="#d8e0e0" opacity="0.79"/><circle cx="116.3" cy="96.1" r="0.32" fill="#d8e0e0" opacity="0.38"/><circle cx="108.7" cy="6.9" r="0.40" fill="#d8e0e0" opacity="0.40"/><circle cx="75.1" cy="72.1" r="0.40" fill="#d8e0e0" opacity="0.37"/><circle cx="77.9" cy="83.1" r="0.40" fill="#d8e0e0" opacity="0.51"/><circle cx="116.5" cy="76.0" r="0.36" fill="#d8e0e0" opacity="0.69"/><circle cx="54.9" cy="78.4" r="0.26" fill="#d8e0e0" opacity="0.65"/><circle cx="80.4" cy="98.3" r="0.37" fill="#d8e0e0" opacity="0.54"/><circle cx="94.2" cy="79.9" r="0.29" fill="#d8e0e0" opacity="0.63"/><circle cx="37.5" cy="48.5" r="0.36" fill="#d8e0e0" opacity="0.34"/><circle cx="105.0" cy="15.3" r="0.28" fill="#d8e0e0" opacity="0.49"/><circle cx="10.0" cy="56.5" r="0.28" fill="#d8e0e0" opacity="0.77"/><circle cx="62.1" cy="34.5" r="0.35" fill="#d8e0e0" opacity="0.63"/><circle cx="24.5" cy="7.2" r="0.27" fill="#d8e0e0" opacity="0.60"/><circle cx="67.7" cy="85.4" r="0.25" fill="#d8e0e0" opacity="0.53"/><circle cx="91.8" cy="20.9" r="0.30" fill="#d8e0e0" opacity="0.57"/><circle cx="71.3" cy="68.8" r="0.44" fill="#d8e0e0" opacity="0.35"/><circle cx="105.5" cy="54.9" r="0.36" fill="#d8e0e0" opacity="0.45"/><circle cx="57.9" cy="21.3" r="0.22" fill="#d8e0e0" opacity="0.72"/><circle cx="78.5" cy="11.7" r="0.23" fill="#d8e0e0" opacity="0.51"/><circle cx="96.8" cy="47.3" r="0.34" fill="#d8e0e0" opacity="0.54"/><circle cx="105.9" cy="70.0" r="0.26" fill="#d8e0e0" opacity="0.38"/><circle cx="70.2" cy="73.5" r="0.24" fill="#d8e0e0" opacity="0.46"/><circle cx="81.4" cy="49.8" r="0.27" fill="#d8e0e0" opacity="0.53"/><circle cx="49.8" cy="100.0" r="0.37" fill="#d8e0e0" opacity="0.39"/><circle cx="42.2" cy="64.7" r="0.21" fill="#d8e0e0" opacity="0.32"/><circle cx="86.2" cy="99.9" r="0.40" fill="#d8e0e0" opacity="0.35"/><circle cx="56.6" cy="75.7" r="0.24" fill="#d8e0e0" opacity="0.41"/><circle cx="48.6" cy="12.7" r="0.22" fill="#d8e0e0" opacity="0.63"/><circle cx="39.9" cy="77.9" r="0.34" fill="#d8e0e0" opacity="0.76"/><circle cx="33.2" cy="34.2" r="0.26" fill="#d8e0e0" opacity="0.33"/><circle cx="33.8" cy="35.5" r="0.32" fill="#d8e0e0" opacity="0.47"/><circle cx="115.2" cy="87.3" r="0.29" fill="#d8e0e0" opacity="0.40"/><circle cx="57.6" cy="11.8" r="0.25" fill="#d8e0e0" opacity="0.66"/><circle cx="14.9" cy="97.3" r="0.22" fill="#d8e0e0" opacity="0.80"/><circle cx="46.7" cy="55.4" r="0.30" fill="#d8e0e0" opacity="0.59"/><circle cx="46.6" cy="10.9" r="0.21" fill="#d8e0e0" opacity="0.71"/><circle cx="55.6" cy="76.6" r="0.22" fill="#d8e0e0" opacity="0.55"/><circle cx="63.6" cy="37.6" r="0.24" fill="#d8e0e0" opacity="0.64"/><circle cx="80.6" cy="87.6" r="0.22" fill="#d8e0e0" opacity="0.32"/><circle cx="74.1" cy="62.5" r="0.24" fill="#d8e0e0" opacity="0.63"/><circle cx="101.7" cy="42.2" r="0.23" fill="#d8e0e0" opacity="0.77"/><circle cx="1.6" cy="87.2" r="0.23" fill="#d8e0e0" opacity="0.45"/><circle cx="83.1" cy="86.2" r="0.25" fill="#d8e0e0" opacity="0.32"/><circle cx="2.4" cy="56.6" r="0.34" fill="#d8e0e0" opacity="0.76"/><circle cx="58.2" cy="52.2" r="0.41" fill="#d8e0e0" opacity="0.69"/><circle cx="49.3" cy="69.6" r="0.30" fill="#d8e0e0" opacity="0.33"/><circle cx="79.6" cy="59.4" r="0.45" fill="#d8e0e0" opacity="0.63"/><circle cx="18.2" cy="77.0" r="0.34" fill="#d8e0e0" opacity="0.34"/><circle cx="55.2" cy="89.6" r="0.36" fill="#d8e0e0" opacity="0.51"/><circle cx="1.1" cy="66.9" r="0.45" fill="#d8e0e0" opacity="0.73"/><circle cx="25.5" cy="12.1" r="0.32" fill="#d8e0e0" opacity="0.44"/><circle cx="66.6" cy="45.1" r="0.39" fill="#d8e0e0" opacity="0.76"/><circle cx="42.8" cy="74.7" r="0.37" fill="#d8e0e0" opacity="0.37"/><circle cx="88.8" cy="29.3" r="0.34" fill="#d8e0e0" opacity="0.55"/><circle cx="78.3" cy="89.0" r="0.43" fill="#d8e0e0" opacity="0.33"/><circle cx="3.7" cy="6.1" r="0.42" fill="#d8e0e0" opacity="0.64"/><circle cx="72.3" cy="38.9" r="0.28" fill="#d8e0e0" opacity="0.60"/><circle cx="112.1" cy="83.5" r="0.35" fill="#d8e0e0" opacity="0.46"/><circle cx="27" cy="37" r="1" fill="#fff"/><circle cx="8" cy="57" r="0.8" fill="#cde"/><path d="M0,86 C12,78 28,68 39,61 L42,60 L56,62 C75,66 95,69 117,71 L117,112 L0,112 Z" fill="#35302f"/><path d="M70.0,41.0 L72.4,43.0 L71.0,47.4 L72.8,51.7 L71.9,56.1 L75.1,60.4 L73.4,64.8 L77.2,69.1 L74.0,73.5 L78.6,77.9 L75.6,82.2 L80.3,86.6 L75.7,90.9 L81.6,95.3 L76.8,99.6 L82.8,104.0 L56.8,104.0 L63.6,99.6 L59.2,95.3 L62.7,90.9 L60.9,86.6 L65.2,82.2 L62.0,77.9 L65.2,73.5 L62.9,69.1 L67.0,64.8 L65.5,60.4 L68.3,56.1 L67.4,51.7 L68.3,47.4 L68.9,43.0 Z" fill="#1a1f1f"/><path d="M111.0,13.0 L112.3,15.0 L112.9,19.3 L113.8,23.6 L114.2,27.9 L116.3,32.1 L113.5,36.4 L118.2,40.7 L116.1,45.0 L118.7,49.3 L116.0,53.6 L120.2,57.9 L116.7,62.1 L122.0,66.4 L117.4,70.7 L122.8,75.0 L98.1,75.0 L105.2,70.7 L101.0,66.4 L105.1,62.1 L102.0,57.9 L106.5,53.6 L104.0,49.3 L106.2,45.0 L105.6,40.7 L107.3,36.4 L106.8,32.1 L107.9,27.9 L107.4,23.6 L109.4,19.3 L109.7,15.0 Z" fill="#1b2020"/><path d="M44.0,74.0 L46.1,76.0 L44.0,78.0 L46.3,80.0 L45.3,82.0 L46.9,84.0 L45.7,86.0 L47.8,88.0 L46.2,90.0 L48.3,92.0 L46.9,94.0 L49.8,96.0 L48.6,98.0 L51.9,100.0 L49.2,102.0 L51.9,104.0 L35.7,104.0 L39.5,102.0 L36.5,100.0 L40.6,98.0 L38.1,96.0 L41.3,94.0 L38.3,92.0 L41.3,90.0 L40.6,88.0 L41.9,86.0 L40.0,84.0 L42.5,82.0 L41.6,80.0 L43.2,78.0 L43.2,76.0 Z" fill="#1c2121"/><path d="M56.0,80.0 L56.7,82.0 L56.4,83.6 L57.1,85.1 L58.1,86.7 L58.9,88.3 L58.8,89.9 L58.8,91.4 L58.6,93.0 L59.7,94.6 L58.6,96.1 L61.1,97.7 L58.5,99.3 L62.6,100.9 L60.6,102.4 L63.7,104.0 L49.8,104.0 L52.0,102.4 L49.6,100.9 L51.6,99.3 L51.7,97.7 L53.8,96.1 L51.8,94.6 L53.5,93.0 L52.0,91.4 L53.5,89.9 L53.4,88.3 L54.0,86.7 L54.3,85.1 L54.2,83.6 L54.1,82.0 Z" fill="#1c2121"/><path d="M88.0,74.0 L90.2,76.0 L88.3,78.0 L89.9,80.0 L90.6,82.0 L90.9,84.0 L90.2,86.0 L93.1,88.0 L92.0,90.0 L92.8,92.0 L90.8,94.0 L94.3,96.0 L92.9,98.0 L95.9,100.0 L92.7,102.0 L96.4,104.0 L78.0,104.0 L82.1,102.0 L80.6,100.0 L83.6,98.0 L82.0,96.0 L84.3,94.0 L83.2,92.0 L84.2,90.0 L82.8,88.0 L86.3,86.0 L84.5,84.0 L85.4,82.0 L85.2,80.0 L87.3,78.0 L86.9,76.0 Z" fill="#1c2121"/><path d="M100.0,78.0 L101.4,80.0 L101.3,81.7 L101.9,83.4 L101.3,85.1 L103.0,86.9 L103.0,88.6 L104.1,90.3 L103.4,92.0 L105.8,93.7 L103.6,95.4 L106.6,97.1 L104.8,98.9 L106.8,100.6 L103.7,102.3 L107.6,104.0 L92.9,104.0 L94.5,102.3 L93.8,100.6 L96.6,98.9 L93.7,97.1 L95.8,95.4 L94.2,93.7 L98.1,92.0 L96.7,90.3 L98.4,88.6 L96.6,86.9 L98.2,85.1 L97.8,83.4 L98.9,81.7 L99.3,80.0 Z" fill="#1c2121"/><path d="M22.0,86.0 L22.1,88.0 L22.4,89.1 L23.0,90.3 L24.0,91.4 L23.7,92.6 L23.1,93.7 L25.2,94.9 L24.7,96.0 L25.0,97.1 L24.5,98.3 L26.6,99.4 L25.5,100.6 L27.4,101.7 L24.6,102.9 L28.9,104.0 L16.5,104.0 L19.3,102.9 L17.6,101.7 L19.3,100.6 L16.8,99.4 L19.4,98.3 L17.7,97.1 L19.5,96.0 L18.0,94.9 L20.2,93.7 L19.5,92.6 L20.7,91.4 L20.8,90.3 L21.0,89.1 L20.6,88.0 Z" fill="#1c2121"/><path d="M8.0,90.0 L8.3,92.0 L8.1,92.9 L9.2,93.7 L9.7,94.6 L9.3,95.4 L9.2,96.3 L10.6,97.1 L10.3,98.0 L10.8,98.9 L9.2,99.7 L11.3,100.6 L11.1,101.4 L11.9,102.3 L11.0,103.1 L13.8,104.0 L3.7,104.0 L4.5,103.1 L3.7,102.3 L4.9,101.4 L4.0,100.6 L5.6,99.7 L5.7,98.9 L6.2,98.0 L5.4,97.1 L6.9,96.3 L7.0,95.4 L6.3,94.6 L6.4,93.7 L6.8,92.9 L7.1,92.0 Z" fill="#1c2121"/><path d="M0,112 L0,96 L30,98 L60,96 L117,94 L117,112 Z" fill="#1c2121"/><rect x="0" y="102.5" width="117" height="1.5" fill="#8fa2a4" opacity="0.4"/><rect x="0" y="104" width="117" height="8" fill="#191d1e"/></svg></div>
<div class="tile"><svg viewBox="0 0 117 112" preserveAspectRatio="none"><defs><filter id="f3"><feGaussianBlur stdDeviation="0.8"/></filter></defs><rect width="117" height="112" fill="#070707"/><path d="M18,52 C18,35 35,22 58,20 C66,18 72,10 78,12 C90,20 95,35 92,48 C100,60 104,75 98,90 C90,102 80,106 70,100 C55,92 40,85 25,75 C15,68 10,58 18,52 Z" fill="#0c0c0c"/><path d="M20,50 C22,36 36,25 55,23 C42,30 30,40 26,52 Z" fill="#4e4e4e" filter="url(#f3)"/><ellipse cx="38" cy="33" rx="10" ry="4.5" transform="rotate(-28 38 33)" fill="#777"/><ellipse cx="73" cy="9" rx="4.5" ry="2.2" transform="rotate(15 73 9)" fill="#8a8a8a"/><ellipse cx="81" cy="28" rx="4.5" ry="3" fill="#7a7a7a"/><path d="M66,52 C72,44 80,37 86,34 C81,42 75,48 69,54 Z" fill="#666"/><path d="M34,52 C50,49 64,52 74,60 C62,56 50,54 34,55 Z" fill="#555560"/><path d="M8,49 C14,55 26,62 38,70 C36,78 28,76 22,72 C14,66 8,58 8,49 Z" fill="#2c3a6c"/><path d="M8,49 C14,52 22,58 38,68 C28,66 18,60 8,52 Z" fill="#6e6e6e"/><path d="M22,52 C40,60 65,60 76,78 C81,88 81,98 81,104" stroke="#9a1c1c" stroke-width="1.2" fill="none"/><path d="M5,55 C8,70 20,82 38,86" stroke="#6a1616" stroke-width="0.8" fill="none"/><path d="M60,25 L70,20 L66,27 Z" fill="#8a1a1a"/><path d="M72,14 L74,20 M76,22 L80,27" stroke="#2a3a7a" stroke-width="1.2"/><path d="M50,22 L56,25 L48,27 Z" fill="#2a3a7a"/><path d="M48,50 C56,49 66,50 72,54" stroke="#2a3a6a" stroke-width="1" fill="none"/><ellipse cx="100" cy="70" rx="8" ry="2.4" transform="rotate(-40 100 70)" fill="#5e5e5e"/><path d="M86,74 C90,76 94,74 96,72" stroke="#333" stroke-width="1" fill="none"/></svg></div>
<div class="tile"><svg viewBox="0 0 117 112" preserveAspectRatio="none"><defs><linearGradient id="g4a" x1="0" y1="0" x2="0" y2="1"><stop offset="0" stop-color="#5b8797"/><stop offset="0.3" stop-color="#6892a0"/><stop offset="1" stop-color="#7a9aa4"/></linearGradient><filter id="f4" x="-0.2" y="-1" width="1.4" height="3"><feGaussianBlur stdDeviation="2"/></filter><filter id="f4b" x="-0.5" y="-0.5" width="2" height="2"><feGaussianBlur stdDeviation="1.2"/></filter></defs><rect width="117" height="112" fill="url(#g4a)"/><ellipse cx="62" cy="40" rx="68" ry="7" fill="#b0a994" filter="url(#f4)"/><rect x="0" y="44" width="117" height="16" fill="#8c9c9e" filter="url(#f4)"/><path d="M0,61 L12,60 L24,60 L33,62 L38,70 L44,84 L50,98 L0,96 Z" fill="#d8ccb2"/><path d="M4,86 L38,84 L50,98 L20,98 Z" fill="#b4a48a" opacity="0.8"/><path d="M0,96 L50,98 L54,112 L0,112 Z" fill="#7a8a9a"/><path d="M33,62 L46,56 L60,50 L70,46 L76,48 L82,56 L86,62 L76,76 L62,92 L54,104 L46,90 L40,74 Z" fill="#b6bec4"/><path d="M46,64 L68,49 M50,74 L74,54 M56,84 L80,60" stroke="#dcd4c4" stroke-width="2" opacity="0.7" filter="url(#f4b)"/><path d="M70,46 L77,46 L117,66 L117,81 L82,85 L76,76 L86,62 L82,56 Z" fill="#e2d3b4"/><path d="M38,68 L44,84 L52,100 L56,104 L62,92 L50,82 L42,70 Z" fill="#8a9aaa"/><path d="M50,112 L56,104 L64,92 L76,82 L82,85 L117,80 L117,112 Z" fill="#4e6480"/></svg></div>
<div class="tile"><svg viewBox="0 0 117 112" preserveAspectRatio="none"><defs><linearGradient id="g5a" x1="0" y1="0" x2="0" y2="1"><stop offset="0" stop-color="#444d5c"/><stop offset="0.4" stop-color="#5e6670"/><stop offset="0.48" stop-color="#6a7276"/><stop offset="0.62" stop-color="#56606e"/><stop offset="0.75" stop-color="#5a6a78"/></linearGradient></defs><rect width="117" height="112" fill="url(#g5a)"/><line x1="82.8" y1="62.4" x2="88.6" y2="58.4" stroke="#b0c0e0" stroke-width="0.4" opacity="0.61"/><line x1="79.9" y1="66.5" x2="89.7" y2="59.7" stroke="#b0c0e0" stroke-width="0.4" opacity="0.31"/><line x1="77.9" y1="42.6" x2="90.3" y2="33.9" stroke="#c8d0e0" stroke-width="0.4" opacity="0.56"/><line x1="34.2" y1="23.1" x2="44.5" y2="15.8" stroke="#d0d8e8" stroke-width="0.4" opacity="0.35"/><line x1="42.0" y1="62.6" x2="47.3" y2="58.8" stroke="#e0c0a0" stroke-width="0.4" opacity="0.42"/><line x1="61.5" y1="80.8" x2="65.9" y2="77.8" stroke="#e0c0a0" stroke-width="0.4" opacity="0.59"/><line x1="99.0" y1="29.2" x2="112.3" y2="19.9" stroke="#c8d0e0" stroke-width="0.4" opacity="0.36"/><line x1="80.8" y1="67.0" x2="93.4" y2="58.1" stroke="#e0c0a0" stroke-width="0.4" opacity="0.69"/><line x1="100.2" y1="47.3" x2="113.2" y2="38.2" stroke="#e0c0a0" stroke-width="0.4" opacity="0.74"/><line x1="111.2" y1="40.6" x2="120.3" y2="34.2" stroke="#b0c0e0" stroke-width="0.4" opacity="0.31"/><line x1="112.9" y1="18.3" x2="118.7" y2="14.3" stroke="#c8d0e0" stroke-width="0.4" opacity="0.46"/><line x1="60.5" y1="78.3" x2="64.7" y2="75.4" stroke="#b0c0e0" stroke-width="0.4" opacity="0.43"/><line x1="96.3" y1="52.2" x2="105.0" y2="46.2" stroke="#b0c0e0" stroke-width="0.4" opacity="0.65"/><line x1="3.1" y1="71.3" x2="14.2" y2="63.5" stroke="#c8d0e0" stroke-width="0.4" opacity="0.44"/><line x1="49.0" y1="48.0" x2="60.7" y2="39.9" stroke="#c8d0e0" stroke-width="0.4" opacity="0.36"/><line x1="41.5" y1="11.2" x2="51.4" y2="4.3" stroke="#b0c0e0" stroke-width="0.4" opacity="0.37"/><line x1="62.8" y1="61.2" x2="68.4" y2="57.3" stroke="#c8d0e0" stroke-width="0.4" opacity="0.77"/><line x1="39.4" y1="34.5" x2="51.8" y2="25.8" stroke="#c8d0e0" stroke-width="0.4" opacity="0.50"/><line x1="109.5" y1="63.7" x2="116.9" y2="58.5" stroke="#b0c0e0" stroke-width="0.4" opacity="0.72"/><line x1="80.9" y1="69.1" x2="90.5" y2="62.4" stroke="#e0c0a0" stroke-width="0.4" opacity="0.71"/><line x1="97.6" y1="4.4" x2="106.8" y2="-2.0" stroke="#e0c0a0" stroke-width="0.4" opacity="0.42"/><line x1="43.6" y1="51.9" x2="51.3" y2="46.5" stroke="#b0c0e0" stroke-width="0.4" opacity="0.33"/><line x1="45.0" y1="41.4" x2="49.2" y2="38.4" stroke="#b0c0e0" stroke-width="0.4" opacity="0.51"/><line x1="40.4" y1="81.8" x2="49.0" y2="75.8" stroke="#c8d0e0" stroke-width="0.4" opacity="0.70"/><line x1="102.3" y1="72.5" x2="106.7" y2="69.5" stroke="#e0c0a0" stroke-width="0.4" opacity="0.76"/><line x1="69.2" y1="51.5" x2="81.2" y2="43.1" stroke="#c8d0e0" stroke-width="0.4" opacity="0.61"/><line x1="21.8" y1="42.7" x2="30.2" y2="36.8" stroke="#c8d0e0" stroke-width="0.4" opacity="0.44"/><line x1="28.8" y1="53.1" x2="34.0" y2="49.5" stroke="#e0c0a0" stroke-width="0.4" opacity="0.34"/><line x1="65.0" y1="76.4" x2="73.4" y2="70.5" stroke="#b0c0e0" stroke-width="0.4" opacity="0.74"/><line x1="106.3" y1="47.3" x2="113.0" y2="42.6" stroke="#c8d0e0" stroke-width="0.4" opacity="0.67"/><line x1="26.5" y1="37.2" x2="37.4" y2="29.6" stroke="#b0c0e0" stroke-width="0.4" opacity="0.63"/><line x1="15.6" y1="58.2" x2="24.2" y2="52.2" stroke="#e0c0a0" stroke-width="0.4" opacity="0.61"/><line x1="49.6" y1="25.5" x2="56.0" y2="21.0" stroke="#b0c0e0" stroke-width="0.4" opacity="0.39"/><line x1="59.3" y1="79.5" x2="67.3" y2="73.9" stroke="#e0c0a0" stroke-width="0.4" opacity="0.38"/><line x1="110.9" y1="26.6" x2="118.2" y2="21.5" stroke="#e0c0a0" stroke-width="0.4" opacity="0.44"/><line x1="115.4" y1="24.2" x2="127.1" y2="16.0" stroke="#b0c0e0" stroke-width="0.4" opacity="0.58"/><line x1="67.0" y1="28.5" x2="77.5" y2="21.1" stroke="#d0d8e8" stroke-width="0.4" opacity="0.72"/><line x1="35.0" y1="62.6" x2="44.2" y2="56.1" stroke="#b0c0e0" stroke-width="0.4" opacity="0.51"/><line x1="74.9" y1="11.5" x2="80.9" y2="7.3" stroke="#e0c0a0" stroke-width="0.4" opacity="0.71"/><line x1="55.8" y1="60.6" x2="67.2" y2="52.6" stroke="#d0d8e8" stroke-width="0.4" opacity="0.43"/><line x1="70.1" y1="51.8" x2="81.1" y2="44.1" stroke="#d0d8e8" stroke-width="0.4" opacity="0.74"/><line x1="-9.5" y1="62.8" x2="0.4" y2="55.9" stroke="#d0d8e8" stroke-width="0.4" opacity="0.50"/><line x1="116.1" y1="12.3" x2="128.6" y2="3.5" stroke="#e0c0a0" stroke-width="0.4" opacity="0.74"/><line x1="67.1" y1="31.1" x2="75.7" y2="25.2" stroke="#d0d8e8" stroke-width="0.4" opacity="0.44"/><line x1="34.8" y1="28.9" x2="44.0" y2="22.5" stroke="#d0d8e8" stroke-width="0.4" opacity="0.62"/><line x1="-9.1" y1="61.2" x2="4.8" y2="51.4" stroke="#d0d8e8" stroke-width="0.4" opacity="0.52"/><line x1="13.4" y1="24.9" x2="18.8" y2="21.1" stroke="#d0d8e8" stroke-width="0.4" opacity="0.59"/><line x1="1.2" y1="75.5" x2="8.4" y2="70.4" stroke="#b0c0e0" stroke-width="0.4" opacity="0.78"/><line x1="15.9" y1="35.0" x2="29.1" y2="25.8" stroke="#c8d0e0" stroke-width="0.4" opacity="0.31"/><line x1="22.6" y1="73.5" x2="29.6" y2="68.6" stroke="#e0c0a0" stroke-width="0.4" opacity="0.57"/><line x1="116.8" y1="42.4" x2="126.0" y2="36.0" stroke="#d0d8e8" stroke-width="0.4" opacity="0.49"/><line x1="35.4" y1="48.8" x2="42.9" y2="43.5" stroke="#c8d0e0" stroke-width="0.4" opacity="0.64"/><line x1="56.7" y1="8.1" x2="64.5" y2="2.7" stroke="#d0d8e8" stroke-width="0.4" opacity="0.62"/><line x1="107.9" y1="12.6" x2="113.8" y2="8.5" stroke="#d0d8e8" stroke-width="0.4" opacity="0.54"/><line x1="45.9" y1="51.2" x2="59.9" y2="41.4" stroke="#e0c0a0" stroke-width="0.4" opacity="0.65"/><line x1="84.8" y1="7.6" x2="92.4" y2="2.2" stroke="#e0c0a0" stroke-width="0.4" opacity="0.79"/><line x1="94.9" y1="42.0" x2="100.0" y2="38.5" stroke="#e0c0a0" stroke-width="0.4" opacity="0.64"/><line x1="94.2" y1="81.2" x2="107.1" y2="72.2" stroke="#d0d8e8" stroke-width="0.4" opacity="0.62"/><line x1="56.6" y1="66.9" x2="62.6" y2="62.7" stroke="#b0c0e0" stroke-width="0.4" opacity="0.51"/><line x1="-2.4" y1="46.3" x2="2.7" y2="42.8" stroke="#c8d0e0" stroke-width="0.4" opacity="0.65"/><line x1="-8.6" y1="0.2" x2="2.5" y2="-7.5" stroke="#c8d0e0" stroke-width="0.4" opacity="0.76"/><line x1="40.5" y1="8.1" x2="44.6" y2="5.2" stroke="#c8d0e0" stroke-width="0.4" opacity="0.40"/><line x1="53.2" y1="45.4" x2="59.9" y2="40.7" stroke="#b0c0e0" stroke-width="0.4" opacity="0.59"/><line x1="42.2" y1="10.0" x2="47.8" y2="6.1" stroke="#c8d0e0" stroke-width="0.4" opacity="0.31"/><line x1="-0.3" y1="77.7" x2="8.6" y2="71.5" stroke="#d0d8e8" stroke-width="0.4" opacity="0.61"/><line x1="92.4" y1="5.1" x2="96.6" y2="2.2" stroke="#e0c0a0" stroke-width="0.4" opacity="0.37"/><line x1="20.3" y1="22.6" x2="24.6" y2="19.6" stroke="#c8d0e0" stroke-width="0.4" opacity="0.73"/><line x1="110.4" y1="5.2" x2="116.3" y2="1.0" stroke="#d0d8e8" stroke-width="0.4" opacity="0.31"/><line x1="17.9" y1="32.5" x2="29.6" y2="24.3" stroke="#c8d0e0" stroke-width="0.4" opacity="0.52"/><line x1="68.8" y1="20.4" x2="73.2" y2="17.3" stroke="#b0c0e0" stroke-width="0.4" opacity="0.46"/><line x1="104.2" y1="66.9" x2="111.2" y2="62.0" stroke="#e0c0a0" stroke-width="0.4" opacity="0.78"/><line x1="52.9" y1="77.9" x2="59.4" y2="73.4" stroke="#d0d8e8" stroke-width="0.4" opacity="0.64"/><line x1="64.3" y1="33.9" x2="72.3" y2="28.3" stroke="#d0d8e8" stroke-width="0.4" opacity="0.31"/><line x1="100.3" y1="7.2" x2="106.0" y2="3.2" stroke="#d0d8e8" stroke-width="0.4" opacity="0.39"/><line x1="113.4" y1="23.8" x2="123.0" y2="17.1" stroke="#c8d0e0" stroke-width="0.4" opacity="0.47"/><line x1="100.7" y1="27.5" x2="111.2" y2="20.2" stroke="#c8d0e0" stroke-width="0.4" opacity="0.51"/><line x1="106.0" y1="45.4" x2="113.8" y2="39.9" stroke="#d0d8e8" stroke-width="0.4" opacity="0.44"/><line x1="20.1" y1="2.9" x2="30.8" y2="-4.6" stroke="#e0c0a0" stroke-width="0.4" opacity="0.70"/><line x1="20.7" y1="10.6" x2="26.7" y2="6.5" stroke="#b0c0e0" stroke-width="0.4" opacity="0.58"/><line x1="49.3" y1="65.2" x2="55.7" y2="60.7" stroke="#e0c0a0" stroke-width="0.4" opacity="0.48"/><line x1="81.8" y1="30.9" x2="95.3" y2="21.4" stroke="#b0c0e0" stroke-width="0.4" opacity="0.45"/><line x1="50.4" y1="16.8" x2="63.0" y2="8.0" stroke="#b0c0e0" stroke-width="0.4" opacity="0.77"/><line x1="116.7" y1="48.9" x2="125.1" y2="43.0" stroke="#e0c0a0" stroke-width="0.4" opacity="0.57"/><line x1="41.3" y1="41.8" x2="46.6" y2="38.2" stroke="#c8d0e0" stroke-width="0.4" opacity="0.64"/><line x1="1.6" y1="69.9" x2="13.0" y2="61.9" stroke="#d0d8e8" stroke-width="0.4" opacity="0.31"/><line x1="81.2" y1="11.9" x2="85.4" y2="9.0" stroke="#c8d0e0" stroke-width="0.4" opacity="0.65"/><line x1="88.6" y1="19.0" x2="94.5" y2="14.9" stroke="#c8d0e0" stroke-width="0.4" opacity="0.33"/><line x1="106.1" y1="66.0" x2="117.6" y2="57.9" stroke="#b0c0e0" stroke-width="0.4" opacity="0.33"/><line x1="29.5" y1="18.6" x2="34.8" y2="14.9" stroke="#d0d8e8" stroke-width="0.4" opacity="0.44"/><line x1="41.2" y1="74.5" x2="53.0" y2="66.3" stroke="#b0c0e0" stroke-width="0.4" opacity="0.77"/><line x1="12.4" y1="30.1" x2="24.4" y2="21.7" stroke="#e0c0a0" stroke-width="0.4" opacity="0.75"/><line x1="-6.8" y1="57.7" x2="1.8" y2="51.7" stroke="#d0d8e8" stroke-width="0.4" opacity="0.48"/><line x1="69.9" y1="14.9" x2="75.0" y2="11.3" stroke="#b0c0e0" stroke-width="0.4" opacity="0.66"/><line x1="-4.9" y1="3.3" x2="0.8" y2="-0.7" stroke="#b0c0e0" stroke-width="0.4" opacity="0.68"/><line x1="9.8" y1="60.5" x2="19.4" y2="53.9" stroke="#b0c0e0" stroke-width="0.4" opacity="0.58"/><line x1="18.9" y1="40.8" x2="28.1" y2="34.4" stroke="#d0d8e8" stroke-width="0.4" opacity="0.64"/><line x1="63.1" y1="76.7" x2="68.2" y2="73.1" stroke="#e0c0a0" stroke-width="0.4" opacity="0.75"/><line x1="101.1" y1="48.0" x2="112.1" y2="40.3" stroke="#b0c0e0" stroke-width="0.4" opacity="0.64"/><line x1="-5.3" y1="26.1" x2="6.5" y2="17.9" stroke="#e0c0a0" stroke-width="0.4" opacity="0.67"/><line x1="0.9" y1="57.0" x2="8.9" y2="51.4" stroke="#b0c0e0" stroke-width="0.4" opacity="0.44"/><line x1="1.4" y1="77.6" x2="9.7" y2="71.8" stroke="#e0c0a0" stroke-width="0.4" opacity="0.65"/><line x1="83.8" y1="68.1" x2="94.1" y2="60.9" stroke="#d0d8e8" stroke-width="0.4" opacity="0.55"/><line x1="75.9" y1="16.9" x2="86.7" y2="9.4" stroke="#b0c0e0" stroke-width="0.4" opacity="0.54"/><line x1="14.0" y1="78.1" x2="26.3" y2="69.5" stroke="#e0c0a0" stroke-width="0.4" opacity="0.39"/><line x1="10.8" y1="64.0" x2="17.1" y2="59.6" stroke="#e0c0a0" stroke-width="0.4" opacity="0.42"/><line x1="-2.5" y1="29.3" x2="5.7" y2="23.7" stroke="#b0c0e0" stroke-width="0.4" opacity="0.62"/><line x1="7.4" y1="56.3" x2="16.3" y2="50.1" stroke="#d0d8e8" stroke-width="0.4" opacity="0.42"/><line x1="20.7" y1="42.3" x2="29.1" y2="36.3" stroke="#e0c0a0" stroke-width="0.4" opacity="0.65"/><line x1="6.9" y1="58.0" x2="16.8" y2="51.1" stroke="#b0c0e0" stroke-width="0.4" opacity="0.47"/><line x1="93.6" y1="45.0" x2="105.2" y2="36.8" stroke="#b0c0e0" stroke-width="0.4" opacity="0.64"/><ellipse cx="14" cy="21" rx="4" ry="2" transform="rotate(-25 14 21)" fill="#f4f8ff"/><path d="M0,78 C12,80 20,84 35,84 C50,83 58,79 66,79 C78,80 88,77 100,77 C108,77 112,79 117,79 L117,112 L0,112 Z" fill="#2d3228"/><path d="M92,92 C96,86 102,86 107,92 Z" fill="#b08a40" opacity="0.8"/><path d="M0,88 C5,90 8,91 10,92 C40,96 80,96 111,92 L117,90 L117,112 L0,112 Z" fill="#1e1f1a"/><path d="M9,92 C40,95 80,96 111,92" stroke="#c8504a" stroke-width="1.3" fill="none"/><path d="M70,95 C85,95 100,94 111,92" stroke="#f0d080" stroke-width="1" fill="none"/><path d="M56,112 C58,102 66,98 74,98 C78,100 80,106 80,112" stroke="#6a5a40" stroke-width="1.2" fill="none"/><path d="M28,96 L28,112 M36,96 L36,112 M44,97 L44,112 M50,97 L50,112" stroke="#5a5040" stroke-width="0.9"/></svg></div>
<div class="tile"><svg viewBox="0 0 117 112" preserveAspectRatio="none"><defs><linearGradient id="g6a" x1="0" y1="0" x2="1" y2="0"><stop offset="0" stop-color="#6a6d6e"/><stop offset="0.45" stop-color="#a2a4a4"/><stop offset="0.6" stop-color="#9a9c9c"/><stop offset="1" stop-color="#7e7a76"/></linearGradient></defs><rect width="117" height="112" fill="#0b0b0b"/><rect x="0" y="10" width="117" height="41" fill="url(#g6a)"/><rect x="0" y="10" width="37" height="40" fill="#5c6061" opacity="0.6"/><path d="M44,50 L44,30 L50,28 L52,22 L54,28 L58,28 L62,22 L64,30 L70,30 L70,50 Z" fill="#7c7f80"/><rect x="72" y="10" width="45" height="40" fill="#857e77"/><rect x="84" y="10" width="33" height="40" fill="#8e8880"/><line x1="22" y1="34" x2="22" y2="75" stroke="#222" stroke-width="1"/><circle cx="41" cy="43" r="1.8" fill="#e8b030"/><rect x="34" y="42" width="12" height="8" fill="#9a9898"/><rect x="0" y="57" width="117" height="30" fill="#3a3b3c"/><path d="M46,87 L62,62 L74,62 L86,87 Z" fill="#5a5a5a"/><path d="M0,66 L20,70 L28,87 L0,87 Z" fill="#2a2c2e"/><path d="M76,62 L100,66 L117,80 L117,62 Z" fill="#4a4a4c"/><rect x="0" y="50" width="117" height="7" fill="#7a4a2e"/><path d="M4,58 L10,58 L28,84 L22,86 Z M58,58 L64,58 L42,86 L36,84 Z M68,58 L74,58 L92,84 L86,86 Z M117,62 L117,70 L104,86 L98,84 Z" fill="#7a4a2e"/><path d="M22,88 L36,78 L40,82 L28,90 Z M92,88 L80,78 L76,82 L88,90 Z" fill="#cfcfcf"/><circle cx="12" cy="83" r="2" fill="#e8b040"/><circle cx="28" cy="72" r="1.6" fill="#e0a840"/><rect x="0" y="87" width="117" height="14" fill="#a4a4a4"/><rect x="2.0" y="92" width="6" height="3" fill="#202020"/><rect x="6.0" y="97" width="6" height="2.5" fill="#282828"/><rect x="12.0" y="92" width="6" height="3" fill="#202020"/><rect x="16.0" y="97" width="6" height="2.5" fill="#282828"/><rect x="22.0" y="92" width="6" height="3" fill="#202020"/><rect x="26.0" y="97" width="6" height="2.5" fill="#282828"/><rect x="32.0" y="92" width="6" height="3" fill="#202020"/><rect x="36.0" y="97" width="6" height="2.5" fill="#282828"/><rect x="42.0" y="92" width="6" height="3" fill="#202020"/><rect x="46.0" y="97" width="6" height="2.5" fill="#282828"/><rect x="52.0" y="92" width="6" height="3" fill="#202020"/><rect x="56.0" y="97" width="6" height="2.5" fill="#282828"/><rect x="62.0" y="92" width="6" height="3" fill="#202020"/><rect x="66.0" y="97" width="6" height="2.5" fill="#282828"/><rect x="72.0" y="92" width="6" height="3" fill="#202020"/><rect x="76.0" y="97" width="6" height="2.5" fill="#282828"/><rect x="82.0" y="92" width="6" height="3" fill="#202020"/><rect x="86.0" y="97" width="6" height="2.5" fill="#282828"/><rect x="92.0" y="92" width="6" height="3" fill="#202020"/><rect x="96.0" y="97" width="6" height="2.5" fill="#282828"/><rect x="102.0" y="92" width="6" height="3" fill="#202020"/><rect x="106.0" y="97" width="6" height="2.5" fill="#282828"/><rect x="112.0" y="92" width="6" height="3" fill="#202020"/><rect x="116.0" y="97" width="6" height="2.5" fill="#282828"/><rect x="0" y="101" width="117" height="11" fill="#0b0b0b"/></svg></div>
<div class="tile"><svg viewBox="0 0 117 112" preserveAspectRatio="none"><defs><filter id="f7"><feGaussianBlur stdDeviation="0.8"/></filter></defs><rect width="117" height="112" fill="#262c1e"/><g filter="url(#f7)"><ellipse cx="18.1" cy="60.7" rx="4.8" ry="2.3" transform="rotate(-41 18.1 60.7)" fill="#3a4a30" opacity="0.8"/><ellipse cx="80.7" cy="0.8" rx="3.1" ry="1.3" transform="rotate(1 80.7 0.8)" fill="#2e5a52" opacity="0.8"/><ellipse cx="35.6" cy="6.9" rx="3.8" ry="1.3" transform="rotate(13 35.6 6.9)" fill="#a09a58" opacity="0.8"/><ellipse cx="52.1" cy="35.3" rx="3.0" ry="1.3" transform="rotate(-68 52.1 35.3)" fill="#a09a58" opacity="0.8"/><ellipse cx="54.8" cy="60.7" rx="2.8" ry="2.1" transform="rotate(-3 54.8 60.7)" fill="#2e5a52" opacity="0.8"/><ellipse cx="12.7" cy="30.3" rx="4.0" ry="2.2" transform="rotate(12 12.7 30.3)" fill="#2e5a52" opacity="0.8"/><ellipse cx="1.0" cy="57.0" rx="3.4" ry="2.0" transform="rotate(-6 1.0 57.0)" fill="#b0a860" opacity="0.8"/><ellipse cx="76.4" cy="4.8" rx="2.6" ry="2.2" transform="rotate(-33 76.4 4.8)" fill="#b0a860" opacity="0.8"/><ellipse cx="34.7" cy="11.5" rx="4.1" ry="2.4" transform="rotate(-27 34.7 11.5)" fill="#b0a860" opacity="0.8"/><ellipse cx="12.0" cy="44.6" rx="4.7" ry="1.6" transform="rotate(-23 12.0 44.6)" fill="#a09a58" opacity="0.8"/><ellipse cx="75.7" cy="22.1" rx="3.6" ry="1.9" transform="rotate(24 75.7 22.1)" fill="#6a7a40" opacity="0.8"/><ellipse cx="98.0" cy="15.7" rx="2.6" ry="1.9" transform="rotate(33 98.0 15.7)" fill="#8a8a48" opacity="0.8"/><ellipse cx="105.9" cy="58.6" rx="3.8" ry="2.1" transform="rotate(6 105.9 58.6)" fill="#2e5a52" opacity="0.8"/><ellipse cx="70.5" cy="38.8" rx="4.6" ry="1.4" transform="rotate(43 70.5 38.8)" fill="#6a7a40" opacity="0.8"/><ellipse cx="74.5" cy="24.9" rx="5.1" ry="1.8" transform="rotate(-15 74.5 24.9)" fill="#8a8a48" opacity="0.8"/><ellipse cx="84.6" cy="0.2" rx="4.3" ry="2.3" transform="rotate(60 84.6 0.2)" fill="#3a4a30" opacity="0.8"/><ellipse cx="49.8" cy="17.6" rx="2.7" ry="2.1" transform="rotate(16 49.8 17.6)" fill="#b0a860" opacity="0.8"/><ellipse cx="7.3" cy="0.5" rx="3.0" ry="2.1" transform="rotate(26 7.3 0.5)" fill="#3a4a30" opacity="0.8"/><ellipse cx="34.6" cy="27.5" rx="4.5" ry="1.9" transform="rotate(50 34.6 27.5)" fill="#5a6038" opacity="0.8"/><ellipse cx="9.9" cy="20.1" rx="3.8" ry="1.9" transform="rotate(-31 9.9 20.1)" fill="#2e5a52" opacity="0.8"/><ellipse cx="114.0" cy="59.6" rx="2.7" ry="2.3" transform="rotate(14 114.0 59.6)" fill="#5a6038" opacity="0.8"/><ellipse cx="71.3" cy="18.4" rx="3.8" ry="1.7" transform="rotate(-35 71.3 18.4)" fill="#5a6038" opacity="0.8"/><ellipse cx="35.0" cy="21.3" rx="2.6" ry="1.4" transform="rotate(44 35.0 21.3)" fill="#b0a860" opacity="0.8"/><ellipse cx="80.9" cy="9.1" rx="3.6" ry="2.0" transform="rotate(36 80.9 9.1)" fill="#5a6038" opacity="0.8"/><ellipse cx="42.1" cy="14.9" rx="3.7" ry="1.3" transform="rotate(-24 42.1 14.9)" fill="#2e5a52" opacity="0.8"/><ellipse cx="113.3" cy="12.6" rx="2.8" ry="2.3" transform="rotate(-6 113.3 12.6)" fill="#b0a860" opacity="0.8"/><ellipse cx="76.0" cy="11.6" rx="3.3" ry="1.8" transform="rotate(47 76.0 11.6)" fill="#b0a860" opacity="0.8"/><ellipse cx="26.5" cy="35.5" rx="4.7" ry="2.4" transform="rotate(-50 26.5 35.5)" fill="#8a8a48" opacity="0.8"/><ellipse cx="99.6" cy="42.1" rx="3.8" ry="2.3" transform="rotate(70 99.6 42.1)" fill="#3a4a30" opacity="0.8"/><ellipse cx="59.3" cy="52.0" rx="4.4" ry="2.4" transform="rotate(61 59.3 52.0)" fill="#8a8a48" opacity="0.8"/><ellipse cx="11.9" cy="51.5" rx="4.1" ry="2.5" transform="rotate(-21 11.9 51.5)" fill="#2e5a52" opacity="0.8"/><ellipse cx="65.9" cy="48.0" rx="3.6" ry="2.0" transform="rotate(33 65.9 48.0)" fill="#6a7a40" opacity="0.8"/><ellipse cx="27.7" cy="23.1" rx="4.6" ry="2.4" transform="rotate(47 27.7 23.1)" fill="#8a8a48" opacity="0.8"/><ellipse cx="35.1" cy="43.9" rx="5.2" ry="1.3" transform="rotate(-19 35.1 43.9)" fill="#2e5a52" opacity="0.8"/><ellipse cx="65.9" cy="56.9" rx="3.6" ry="1.7" transform="rotate(17 65.9 56.9)" fill="#3a4a30" opacity="0.8"/><ellipse cx="94.1" cy="45.6" rx="5.0" ry="1.4" transform="rotate(25 94.1 45.6)" fill="#8a8a48" opacity="0.8"/><ellipse cx="60.0" cy="32.5" rx="4.7" ry="1.3" transform="rotate(20 60.0 32.5)" fill="#a09a58" opacity="0.8"/><ellipse cx="11.7" cy="34.0" rx="4.3" ry="1.2" transform="rotate(-8 11.7 34.0)" fill="#3a4a30" opacity="0.8"/><ellipse cx="29.8" cy="12.0" rx="2.6" ry="2.5" transform="rotate(42 29.8 12.0)" fill="#2e5a52" opacity="0.8"/><ellipse cx="13.3" cy="1.3" rx="2.7" ry="1.5" transform="rotate(-32 13.3 1.3)" fill="#8a8a48" opacity="0.8"/><ellipse cx="64.8" cy="18.0" rx="4.5" ry="2.3" transform="rotate(-6 64.8 18.0)" fill="#b0a860" opacity="0.8"/><ellipse cx="63.0" cy="42.8" rx="3.3" ry="1.8" transform="rotate(-64 63.0 42.8)" fill="#3a4a30" opacity="0.8"/><ellipse cx="40.1" cy="9.4" rx="4.0" ry="1.2" transform="rotate(-61 40.1 9.4)" fill="#5a6038" opacity="0.8"/><ellipse cx="8.7" cy="38.5" rx="4.5" ry="1.7" transform="rotate(51 8.7 38.5)" fill="#b0a860" opacity="0.8"/><ellipse cx="113.2" cy="43.0" rx="3.7" ry="2.3" transform="rotate(62 113.2 43.0)" fill="#2e5a52" opacity="0.8"/><ellipse cx="8.9" cy="20.4" rx="3.4" ry="1.4" transform="rotate(-59 8.9 20.4)" fill="#6a7a40" opacity="0.8"/><ellipse cx="24.7" cy="50.8" rx="3.9" ry="2.0" transform="rotate(29 24.7 50.8)" fill="#b0a860" opacity="0.8"/><ellipse cx="109.7" cy="19.5" rx="4.2" ry="1.6" transform="rotate(-65 109.7 19.5)" fill="#a09a58" opacity="0.8"/><ellipse cx="29.1" cy="54.3" rx="2.6" ry="1.4" transform="rotate(-34 29.1 54.3)" fill="#5a6038" opacity="0.8"/><ellipse cx="31.9" cy="16.9" rx="5.5" ry="1.7" transform="rotate(65 31.9 16.9)" fill="#5a6038" opacity="0.8"/><ellipse cx="68.4" cy="8.6" rx="2.6" ry="1.9" transform="rotate(-46 68.4 8.6)" fill="#b0a860" opacity="0.8"/><ellipse cx="102.1" cy="48.0" rx="4.2" ry="1.3" transform="rotate(2 102.1 48.0)" fill="#b0a860" opacity="0.8"/><ellipse cx="92.8" cy="14.8" rx="5.3" ry="2.1" transform="rotate(7 92.8 14.8)" fill="#3a4a30" opacity="0.8"/><ellipse cx="112.7" cy="21.2" rx="4.0" ry="2.0" transform="rotate(19 112.7 21.2)" fill="#a09a58" opacity="0.8"/><ellipse cx="102.1" cy="44.4" rx="2.7" ry="1.6" transform="rotate(12 102.1 44.4)" fill="#a09a58" opacity="0.8"/><ellipse cx="103.4" cy="48.5" rx="3.6" ry="1.5" transform="rotate(-10 103.4 48.5)" fill="#5a6038" opacity="0.8"/><ellipse cx="116.6" cy="9.4" rx="2.5" ry="2.3" transform="rotate(46 116.6 9.4)" fill="#6a7a40" opacity="0.8"/><ellipse cx="47.4" cy="24.6" rx="3.4" ry="1.4" transform="rotate(-54 47.4 24.6)" fill="#3a4a30" opacity="0.8"/><ellipse cx="16.8" cy="44.6" rx="4.7" ry="1.9" transform="rotate(17 16.8 44.6)" fill="#a09a58" opacity="0.8"/><ellipse cx="8.6" cy="11.8" rx="4.3" ry="1.6" transform="rotate(20 8.6 11.8)" fill="#8a8a48" opacity="0.8"/><ellipse cx="115.5" cy="22.1" rx="4.6" ry="2.1" transform="rotate(-53 115.5 22.1)" fill="#3a4a30" opacity="0.8"/><ellipse cx="98.1" cy="19.8" rx="3.3" ry="1.5" transform="rotate(-65 98.1 19.8)" fill="#6a7a40" opacity="0.8"/><ellipse cx="88.7" cy="38.8" rx="4.6" ry="1.5" transform="rotate(32 88.7 38.8)" fill="#6a7a40" opacity="0.8"/><ellipse cx="52.4" cy="55.4" rx="5.1" ry="2.0" transform="rotate(-20 52.4 55.4)" fill="#a09a58" opacity="0.8"/><ellipse cx="28.3" cy="3.5" rx="4.3" ry="1.3" transform="rotate(17 28.3 3.5)" fill="#6a7a40" opacity="0.8"/><ellipse cx="84.1" cy="0.3" rx="4.1" ry="2.3" transform="rotate(12 84.1 0.3)" fill="#a09a58" opacity="0.8"/><ellipse cx="108.0" cy="13.2" rx="5.1" ry="1.2" transform="rotate(54 108.0 13.2)" fill="#a09a58" opacity="0.8"/><ellipse cx="47.4" cy="42.1" rx="3.0" ry="2.3" transform="rotate(-59 47.4 42.1)" fill="#a09a58" opacity="0.8"/><ellipse cx="10.2" cy="38.0" rx="4.0" ry="2.0" transform="rotate(-5 10.2 38.0)" fill="#3a4a30" opacity="0.8"/><ellipse cx="110.0" cy="54.1" rx="5.3" ry="1.9" transform="rotate(10 110.0 54.1)" fill="#8a8a48" opacity="0.8"/><ellipse cx="6.6" cy="38.1" rx="5.0" ry="1.4" transform="rotate(-66 6.6 38.1)" fill="#b0a860" opacity="0.8"/><ellipse cx="18.3" cy="8.8" rx="5.0" ry="1.7" transform="rotate(22 18.3 8.8)" fill="#3a4a30" opacity="0.8"/><ellipse cx="49.5" cy="33.4" rx="5.1" ry="1.4" transform="rotate(14 49.5 33.4)" fill="#5a6038" opacity="0.8"/><ellipse cx="26.9" cy="38.4" rx="4.6" ry="2.2" transform="rotate(9 26.9 38.4)" fill="#3a4a30" opacity="0.8"/><ellipse cx="76.2" cy="34.1" rx="3.9" ry="1.6" transform="rotate(63 76.2 34.1)" fill="#b0a860" opacity="0.8"/><ellipse cx="62.0" cy="17.0" rx="2.5" ry="1.8" transform="rotate(22 62.0 17.0)" fill="#a09a58" opacity="0.8"/><ellipse cx="17.6" cy="39.0" rx="4.8" ry="1.3" transform="rotate(-63 17.6 39.0)" fill="#2e5a52" opacity="0.8"/><ellipse cx="73.1" cy="7.6" rx="4.0" ry="1.9" transform="rotate(-24 73.1 7.6)" fill="#5a6038" opacity="0.8"/><ellipse cx="30.3" cy="37.6" rx="2.9" ry="1.4" transform="rotate(-29 30.3 37.6)" fill="#b0a860" opacity="0.8"/><ellipse cx="61.8" cy="21.8" rx="3.2" ry="2.5" transform="rotate(57 61.8 21.8)" fill="#b0a860" opacity="0.8"/></g><path d="M54,78 L76,78 L76,112 L54,112 Z" fill="#3a4040"/><ellipse cx="27" cy="30" rx="19" ry="17" fill="#6e5644" filter="url(#f7)"/><ellipse cx="37" cy="48" rx="12" ry="11" fill="#c8987e"/><path d="M33,38 C38,32 46,36 46,42 L40,42 Z" fill="#6e5644"/><path d="M2,112 L2,78 C4,68 10,62 20,60 L48,54 L60,54 L68,56 L68,70 L58,80 L58,112 Z" fill="#94b4c8"/><path d="M2,112 L2,78 C4,68 10,62 20,60 L20,76 L18,102 L4,104 Z" fill="#c4ced4"/><path d="M58,54 L70,54 L68,68 L58,70 Z" fill="#d0d8dc"/><path d="M66,56 C78,52 88,49 98,46 L102,53 C90,56 78,61 68,66 Z" fill="#caa48e"/><path d="M70,112 C70,92 74,72 88,60 C98,52 106,46 117,44 L117,112 Z" fill="#e0ddd2"/><ellipse cx="105" cy="70" rx="14" ry="20" fill="#e8e5dc" filter="url(#f7)"/><ellipse cx="99" cy="86" rx="4" ry="3" fill="#141414"/><ellipse cx="105" cy="94" rx="4" ry="2" fill="#c04050"/></svg></div>
<div class="tile"><svg viewBox="0 0 117 112" preserveAspectRatio="none"><rect width="117" height="112" fill="#c4aa8a"/><path d="M88.0,48.0 Q72.5,22.1 40.0,6.0 Q69.1,26.0 88.0,48.0 Z" fill="#15120f"/><path d="M88.0,48.0 Q72.6,27.0 44.0,14.0 Q69.7,30.8 88.0,48.0 Z" fill="#15120f"/><path d="M88.0,48.0 Q74.2,32.0 50.0,24.0 Q71.6,36.1 88.0,48.0 Z" fill="#15120f"/><path d="M88.0,48.0 Q75.6,37.1 56.0,34.0 Q73.8,41.2 88.0,48.0 Z" fill="#15120f"/><path d="M88.0,48.0 Q76.3,41.2 60.0,42.0 Q75.4,45.2 88.0,48.0 Z" fill="#15120f"/><path d="M88.0,48.0 Q83.4,24.0 62.0,4.0 Q77.4,27.6 88.0,48.0 Z" fill="#15120f"/><path d="M88.0,48.0 Q88.1,24.4 72.0,1.0 Q80.8,26.8 88.0,48.0 Z" fill="#15120f"/><path d="M88.0,48.0 Q90.6,25.4 80.0,0.0 Q83.0,26.6 88.0,48.0 Z" fill="#15120f"/><path d="M88.0,48.0 Q93.2,27.0 90.0,1.0 Q86.2,26.7 88.0,48.0 Z" fill="#15120f"/><path d="M88.0,48.0 Q96.6,28.5 102.0,3.0 Q90.5,26.6 88.0,48.0 Z" fill="#15120f"/><path d="M88.0,48.0 Q100.5,31.5 114.0,10.0 Q95.8,28.2 88.0,48.0 Z" fill="#15120f"/><path d="M88.0,48.0 Q101.4,37.1 116.0,22.0 Q97.9,33.4 88.0,48.0 Z" fill="#15120f"/><path d="M88,48 C92,70 94,90 98,112" stroke="#15120f" stroke-width="1.1" fill="none"/><path d="M66.0,80.0 Q37.6,69.9 2.0,60.0 Q35.6,76.0 66.0,80.0 Z" fill="#15120f"/><path d="M66.0,80.0 Q38.5,72.6 4.0,68.0 Q37.3,78.9 66.0,80.0 Z" fill="#15120f"/><path d="M66.0,80.0 Q40.0,76.7 8.0,78.0 Q39.8,82.5 66.0,80.0 Z" fill="#15120f"/><path d="M66.0,80.0 Q42.1,80.5 14.0,88.0 Q43.0,86.2 66.0,80.0 Z" fill="#15120f"/><path d="M66.0,80.0 Q44.6,84.2 22.0,98.0 Q46.6,89.0 66.0,80.0 Z" fill="#15120f"/><path d="M66.0,80.0 Q48.0,88.5 34.0,108.0 Q51.4,92.4 66.0,80.0 Z" fill="#15120f"/><path d="M66.0,80.0 Q53.4,91.9 48.0,112.0 Q57.4,94.1 66.0,80.0 Z" fill="#15120f"/><path d="M66.0,80.0 Q64.9,66.1 50.0,60.0 Q58.6,71.1 66.0,80.0 Z" fill="#15120f"/><path d="M66.0,80.0 Q68.0,67.5 56.0,59.0 Q60.8,70.9 66.0,80.0 Z" fill="#15120f"/><path d="M66.0,80.0 Q69.8,69.9 62.0,60.0 Q62.9,71.3 66.0,80.0 Z" fill="#15120f"/><path d="M66.0,80.0 Q71.5,72.4 68.0,62.0 Q65.2,71.7 66.0,80.0 Z" fill="#15120f"/><path d="M48,66 C56,60 66,60 72,66 L74,84 L60,82 Z" fill="#15120f"/><path d="M96.0,112.0 Q95.9,94.8 84.0,78.0 Q91.1,96.5 96.0,112.0 Z" fill="#15120f"/><path d="M96.0,112.0 Q98.9,94.4 92.0,74.0 Q93.1,95.0 96.0,112.0 Z" fill="#15120f"/><path d="M96.0,112.0 Q104.2,93.9 108.0,70.0 Q98.7,92.3 96.0,112.0 Z" fill="#15120f"/><path d="M96.0,112.0 Q107.8,100.1 117.0,82.0 Q103.1,96.8 96.0,112.0 Z" fill="#15120f"/><path d="M96.0,112.0 Q84.3,106.8 70.0,112.0 Q84.3,111.9 96.0,112.0 Z" fill="#15120f"/><path d="M80,112 L92,100 L104,98 L117,92 L117,112 Z" fill="#15120f"/></svg></div>
<div class="tile"><svg viewBox="0 0 117 112" preserveAspectRatio="none"><defs><linearGradient id="g9a" x1="0" y1="0" x2="0" y2="1"><stop offset="0" stop-color="#a28e86"/><stop offset="0.5" stop-color="#ae968c"/><stop offset="1" stop-color="#bca298"/></linearGradient></defs><rect width="117" height="112" fill="url(#g9a)"/><rect x="0" y="21" width="117" height="12" fill="#3a4258"/><rect x="0" y="69" width="117" height="12" fill="#3a4258"/><rect x="0" y="33" width="117" height="3" fill="#b06848"/><rect x="0" y="81" width="117" height="3" fill="#b06848"/><rect x="0" y="36" width="117" height="1" fill="#3a3030" opacity="0.6"/><rect x="0" y="84" width="117" height="1" fill="#3a3030" opacity="0.6"/><rect x="13.2" y="0" width="4.2" height="112" fill="#c87a5a"/><rect x="30.6" y="0" width="4.2" height="112" fill="#c87a5a"/><rect x="48.1" y="0" width="4.2" height="112" fill="#c87a5a"/><rect x="65.5" y="0" width="4.2" height="112" fill="#c87a5a"/><rect x="83.0" y="0" width="4.2" height="112" fill="#c87a5a"/><rect x="100.5" y="0" width="4.2" height="112" fill="#c87a5a"/></svg></div>
<div class="tile"><svg viewBox="0 0 117 112" preserveAspectRatio="none"><defs><linearGradient id="g10a" x1="0" y1="0" x2="0" y2="1"><stop offset="0" stop-color="#c2cace"/><stop offset="0.42" stop-color="#bcc6cb"/><stop offset="0.55" stop-color="#a2b4be"/><stop offset="1" stop-color="#b8c8d0"/></linearGradient><filter id="f10"><feGaussianBlur stdDeviation="0.7"/></filter><filter id="f10b" x="-0.2" y="-0.5" width="1.4" height="2"><feGaussianBlur stdDeviation="2"/></filter></defs><rect width="117" height="112" fill="url(#g10a)"/><path d="M0,54 C10,48 25,48 35,54 C50,58 80,56 117,58 L117,82 L0,82 Z" fill="#86a0ae" opacity="0.85" filter="url(#f10b)"/><path d="M0,82 C20,76 40,82 55,80 C70,78 90,82 117,80 L117,112 L0,112 Z" fill="#c8d6de" filter="url(#f10b)"/><ellipse cx="30" cy="70" rx="24" ry="12" fill="#58727f" opacity="0.6" filter="url(#f10b)"/><ellipse cx="90" cy="72" rx="30" ry="8" fill="#6a8694" opacity="0.45" filter="url(#f10b)"/><path d="M0,100 C20,94 40,98 60,104 C80,100 100,96 117,98 L117,106 C90,104 60,110 0,108 Z" fill="#8aa0ac" opacity="0.5" filter="url(#f10b)"/><g filter="url(#f10)"><circle cx="113.7" cy="67.0" r="0.4" fill="#6a8492" opacity="0.7"/><circle cx="8.1" cy="56.5" r="0.7" fill="#3e5662" opacity="0.7"/><circle cx="111.4" cy="69.5" r="0.5" fill="#6a8492" opacity="0.7"/><circle cx="63.6" cy="85.8" r="0.8" fill="#d4e0e6" opacity="0.7"/><circle cx="46.7" cy="72.5" r="0.6" fill="#d4e0e6" opacity="0.7"/><circle cx="103.2" cy="100.6" r="0.9" fill="#e8f0f4" opacity="0.7"/><circle cx="71.1" cy="107.7" r="0.5" fill="#d4e0e6" opacity="0.7"/><circle cx="115.9" cy="101.9" r="0.8" fill="#3e5662" opacity="0.7"/><circle cx="91.7" cy="106.7" r="0.3" fill="#d4e0e6" opacity="0.7"/><circle cx="80.1" cy="79.7" r="0.8" fill="#e8f0f4" opacity="0.7"/><circle cx="55.4" cy="91.5" r="0.6" fill="#d4e0e6" opacity="0.7"/><circle cx="27.4" cy="90.5" r="0.8" fill="#e8f0f4" opacity="0.7"/><circle cx="46.0" cy="84.5" r="0.7" fill="#d4e0e6" opacity="0.7"/><circle cx="8.4" cy="100.2" r="0.8" fill="#d4e0e6" opacity="0.7"/><circle cx="30.7" cy="102.8" r="0.9" fill="#d4e0e6" opacity="0.7"/><circle cx="66.8" cy="112.0" r="0.3" fill="#d4e0e6" opacity="0.7"/><circle cx="61.3" cy="84.6" r="0.9" fill="#4e6876" opacity="0.7"/><circle cx="17.8" cy="92.4" r="0.4" fill="#e8f0f4" opacity="0.7"/><circle cx="37.7" cy="75.0" r="0.9" fill="#6a8492" opacity="0.7"/><circle cx="18.0" cy="68.6" r="0.4" fill="#3e5662" opacity="0.7"/><circle cx="61.0" cy="80.3" r="0.4" fill="#d4e0e6" opacity="0.7"/><circle cx="81.3" cy="80.1" r="0.6" fill="#e8f0f4" opacity="0.7"/><circle cx="0.7" cy="61.6" r="0.6" fill="#d4e0e6" opacity="0.7"/><circle cx="93.8" cy="68.7" r="0.7" fill="#6a8492" opacity="0.7"/><circle cx="6.8" cy="64.3" r="0.8" fill="#6a8492" opacity="0.7"/><circle cx="29.9" cy="69.4" r="0.6" fill="#6a8492" opacity="0.7"/><circle cx="100.5" cy="65.7" r="0.6" fill="#d4e0e6" opacity="0.7"/><circle cx="107.7" cy="95.6" r="0.6" fill="#6a8492" opacity="0.7"/><circle cx="113.5" cy="79.0" r="0.7" fill="#4e6876" opacity="0.7"/><circle cx="45.1" cy="87.6" r="0.9" fill="#3e5662" opacity="0.7"/><circle cx="67.9" cy="57.7" r="0.4" fill="#6a8492" opacity="0.7"/><circle cx="44.4" cy="84.5" r="0.6" fill="#e8f0f4" opacity="0.7"/><circle cx="12.6" cy="86.7" r="1.0" fill="#d4e0e6" opacity="0.7"/><circle cx="48.5" cy="81.5" r="0.9" fill="#d4e0e6" opacity="0.7"/><circle cx="15.8" cy="97.7" r="0.3" fill="#4e6876" opacity="0.7"/><circle cx="47.0" cy="56.4" r="0.8" fill="#6a8492" opacity="0.7"/><circle cx="90.1" cy="60.9" r="0.5" fill="#4e6876" opacity="0.7"/><circle cx="11.9" cy="59.1" r="0.8" fill="#4e6876" opacity="0.7"/><circle cx="96.4" cy="65.6" r="0.5" fill="#d4e0e6" opacity="0.7"/><circle cx="98.7" cy="62.1" r="0.6" fill="#3e5662" opacity="0.7"/><circle cx="17.0" cy="73.4" r="0.7" fill="#3e5662" opacity="0.7"/><circle cx="32.1" cy="69.2" r="0.5" fill="#6a8492" opacity="0.7"/><circle cx="65.0" cy="83.6" r="0.6" fill="#6a8492" opacity="0.7"/><circle cx="29.1" cy="76.1" r="0.6" fill="#6a8492" opacity="0.7"/><circle cx="23.6" cy="57.0" r="0.7" fill="#6a8492" opacity="0.7"/><circle cx="76.8" cy="95.2" r="0.4" fill="#d4e0e6" opacity="0.7"/><circle cx="23.4" cy="107.3" r="0.7" fill="#6a8492" opacity="0.7"/><circle cx="1.0" cy="57.9" r="1.0" fill="#4e6876" opacity="0.7"/><circle cx="93.1" cy="70.9" r="0.8" fill="#d4e0e6" opacity="0.7"/><circle cx="47.5" cy="96.2" r="0.4" fill="#4e6876" opacity="0.7"/><circle cx="50.7" cy="91.1" r="0.3" fill="#e8f0f4" opacity="0.7"/><circle cx="95.3" cy="82.8" r="0.3" fill="#e8f0f4" opacity="0.7"/><circle cx="58.3" cy="93.1" r="0.8" fill="#4e6876" opacity="0.7"/><circle cx="62.5" cy="63.2" r="0.8" fill="#d4e0e6" opacity="0.7"/><circle cx="11.1" cy="99.5" r="1.0" fill="#d4e0e6" opacity="0.7"/><circle cx="82.6" cy="79.7" r="0.6" fill="#e8f0f4" opacity="0.7"/><circle cx="4.9" cy="102.5" r="0.5" fill="#3e5662" opacity="0.7"/><circle cx="93.3" cy="95.0" r="0.8" fill="#d4e0e6" opacity="0.7"/><circle cx="38.0" cy="102.8" r="0.4" fill="#e8f0f4" opacity="0.7"/><circle cx="45.8" cy="55.9" r="0.6" fill="#3e5662" opacity="0.7"/><circle cx="81.2" cy="65.5" r="0.4" fill="#6a8492" opacity="0.7"/><circle cx="79.4" cy="60.6" r="0.9" fill="#4e6876" opacity="0.7"/><circle cx="116.5" cy="108.5" r="0.7" fill="#6a8492" opacity="0.7"/><circle cx="2.1" cy="99.3" r="0.9" fill="#e8f0f4" opacity="0.7"/><circle cx="56.7" cy="104.1" r="0.7" fill="#e8f0f4" opacity="0.7"/><circle cx="23.6" cy="81.3" r="0.8" fill="#e8f0f4" opacity="0.7"/><circle cx="67.7" cy="71.4" r="0.7" fill="#4e6876" opacity="0.7"/><circle cx="40.3" cy="108.8" r="0.8" fill="#6a8492" opacity="0.7"/><circle cx="41.0" cy="81.9" r="0.5" fill="#e8f0f4" opacity="0.7"/><circle cx="92.2" cy="71.3" r="0.3" fill="#4e6876" opacity="0.7"/><circle cx="87.4" cy="60.6" r="0.4" fill="#4e6876" opacity="0.7"/><circle cx="3.9" cy="83.8" r="0.4" fill="#e8f0f4" opacity="0.7"/><circle cx="48.6" cy="102.6" r="0.4" fill="#e8f0f4" opacity="0.7"/><circle cx="42.1" cy="92.4" r="0.4" fill="#3e5662" opacity="0.7"/><circle cx="102.2" cy="81.9" r="0.4" fill="#4e6876" opacity="0.7"/><circle cx="13.7" cy="82.8" r="0.7" fill="#6a8492" opacity="0.7"/><circle cx="28.8" cy="87.0" r="0.3" fill="#4e6876" opacity="0.7"/><circle cx="33.2" cy="86.2" r="1.0" fill="#e8f0f4" opacity="0.7"/><circle cx="104.2" cy="54.9" r="1.0" fill="#3e5662" opacity="0.7"/><circle cx="66.7" cy="94.0" r="0.5" fill="#e8f0f4" opacity="0.7"/><circle cx="98.4" cy="111.9" r="0.6" fill="#e8f0f4" opacity="0.7"/><circle cx="34.2" cy="105.6" r="0.4" fill="#e8f0f4" opacity="0.7"/><circle cx="28.5" cy="98.9" r="0.7" fill="#e8f0f4" opacity="0.7"/><circle cx="8.5" cy="73.6" r="0.4" fill="#3e5662" opacity="0.7"/><circle cx="20.4" cy="71.6" r="0.4" fill="#e8f0f4" opacity="0.7"/><circle cx="1.3" cy="108.5" r="0.6" fill="#e8f0f4" opacity="0.7"/><circle cx="92.3" cy="62.6" r="0.7" fill="#6a8492" opacity="0.7"/><circle cx="90.1" cy="65.8" r="0.9" fill="#e8f0f4" opacity="0.7"/><circle cx="116.7" cy="99.9" r="0.6" fill="#d4e0e6" opacity="0.7"/><circle cx="106.2" cy="97.6" r="0.7" fill="#3e5662" opacity="0.7"/><circle cx="5.9" cy="75.2" r="0.6" fill="#e8f0f4" opacity="0.7"/><circle cx="94.0" cy="82.6" r="0.8" fill="#d4e0e6" opacity="0.7"/><circle cx="96.9" cy="108.4" r="0.9" fill="#e8f0f4" opacity="0.7"/><circle cx="50.9" cy="101.9" r="0.8" fill="#d4e0e6" opacity="0.7"/><circle cx="87.5" cy="88.4" r="0.8" fill="#e8f0f4" opacity="0.7"/><circle cx="113.3" cy="99.7" r="0.5" fill="#e8f0f4" opacity="0.7"/><circle cx="28.1" cy="88.1" r="0.7" fill="#e8f0f4" opacity="0.7"/><circle cx="45.9" cy="99.5" r="0.9" fill="#d4e0e6" opacity="0.7"/><circle cx="96.6" cy="77.6" r="0.4" fill="#d4e0e6" opacity="0.7"/><circle cx="77.6" cy="106.4" r="0.6" fill="#d4e0e6" opacity="0.7"/><circle cx="57.2" cy="54.9" r="0.4" fill="#d4e0e6" opacity="0.7"/><circle cx="53.5" cy="73.5" r="0.4" fill="#6a8492" opacity="0.7"/><circle cx="72.5" cy="70.9" r="0.4" fill="#3e5662" opacity="0.7"/><circle cx="104.1" cy="77.6" r="0.7" fill="#4e6876" opacity="0.7"/><circle cx="79.9" cy="56.4" r="0.9" fill="#6a8492" opacity="0.7"/><circle cx="38.9" cy="62.8" r="0.4" fill="#3e5662" opacity="0.7"/><circle cx="103.2" cy="109.7" r="0.5" fill="#e8f0f4" opacity="0.7"/><circle cx="100.2" cy="110.2" r="0.6" fill="#4e6876" opacity="0.7"/><circle cx="12.1" cy="68.3" r="0.7" fill="#e8f0f4" opacity="0.7"/><circle cx="115.2" cy="96.6" r="0.8" fill="#e8f0f4" opacity="0.7"/><circle cx="108.6" cy="105.8" r="0.8" fill="#3e5662" opacity="0.7"/><circle cx="38.7" cy="69.4" r="0.5" fill="#3e5662" opacity="0.7"/><circle cx="73.9" cy="75.8" r="0.7" fill="#d4e0e6" opacity="0.7"/><circle cx="57.7" cy="94.1" r="0.3" fill="#e8f0f4" opacity="0.7"/><circle cx="65.2" cy="80.0" r="0.8" fill="#d4e0e6" opacity="0.7"/><circle cx="4.1" cy="72.9" r="0.4" fill="#e8f0f4" opacity="0.7"/><circle cx="22.0" cy="107.2" r="0.7" fill="#e8f0f4" opacity="0.7"/><circle cx="87.4" cy="91.2" r="0.5" fill="#d4e0e6" opacity="0.7"/><circle cx="90.4" cy="55.5" r="0.7" fill="#4e6876" opacity="0.7"/><circle cx="94.2" cy="93.2" r="0.6" fill="#d4e0e6" opacity="0.7"/><circle cx="80.8" cy="70.1" r="0.4" fill="#4e6876" opacity="0.7"/><circle cx="92.9" cy="74.1" r="0.4" fill="#4e6876" opacity="0.7"/><circle cx="19.0" cy="96.8" r="0.4" fill="#e8f0f4" opacity="0.7"/><circle cx="68.7" cy="110.3" r="0.8" fill="#e8f0f4" opacity="0.7"/><circle cx="31.9" cy="105.7" r="0.6" fill="#d4e0e6" opacity="0.7"/><circle cx="47.2" cy="93.5" r="0.6" fill="#d4e0e6" opacity="0.7"/><circle cx="31.2" cy="65.8" r="0.9" fill="#6a8492" opacity="0.7"/><circle cx="74.5" cy="99.2" r="0.5" fill="#3e5662" opacity="0.7"/><circle cx="55.0" cy="86.4" r="0.8" fill="#d4e0e6" opacity="0.7"/><circle cx="45.8" cy="95.6" r="0.6" fill="#e8f0f4" opacity="0.7"/><circle cx="30.4" cy="98.7" r="0.3" fill="#d4e0e6" opacity="0.7"/><circle cx="41.4" cy="108.5" r="0.5" fill="#4e6876" opacity="0.7"/><circle cx="102.4" cy="59.6" r="0.7" fill="#e8f0f4" opacity="0.7"/><circle cx="108.8" cy="63.6" r="0.4" fill="#e8f0f4" opacity="0.7"/><circle cx="90.6" cy="76.9" r="1.0" fill="#d4e0e6" opacity="0.7"/><circle cx="58.5" cy="73.5" r="0.9" fill="#3e5662" opacity="0.7"/><circle cx="61.0" cy="92.8" r="0.9" fill="#6a8492" opacity="0.7"/><circle cx="79.8" cy="107.6" r="0.3" fill="#3e5662" opacity="0.7"/><circle cx="78.1" cy="87.5" r="0.6" fill="#d4e0e6" opacity="0.7"/><circle cx="91.9" cy="93.4" r="0.9" fill="#4e6876" opacity="0.7"/><circle cx="78.6" cy="97.7" r="0.7" fill="#e8f0f4" opacity="0.7"/><circle cx="86.9" cy="101.6" r="0.8" fill="#e8f0f4" opacity="0.7"/><circle cx="75.8" cy="104.8" r="0.6" fill="#e8f0f4" opacity="0.7"/><circle cx="90.3" cy="89.1" r="0.7" fill="#e8f0f4" opacity="0.7"/><circle cx="36.2" cy="74.9" r="0.7" fill="#4e6876" opacity="0.7"/><circle cx="81.8" cy="58.2" r="0.9" fill="#4e6876" opacity="0.7"/><circle cx="53.6" cy="98.3" r="0.6" fill="#d4e0e6" opacity="0.7"/><circle cx="69.1" cy="88.5" r="0.3" fill="#d4e0e6" opacity="0.7"/><circle cx="12.9" cy="67.0" r="0.7" fill="#6a8492" opacity="0.7"/><circle cx="62.1" cy="67.4" r="0.7" fill="#3e5662" opacity="0.7"/><circle cx="62.8" cy="55.8" r="0.8" fill="#3e5662" opacity="0.7"/><circle cx="31.4" cy="75.7" r="1.0" fill="#4e6876" opacity="0.7"/><circle cx="68.4" cy="77.2" r="0.7" fill="#4e6876" opacity="0.7"/><circle cx="78.0" cy="105.1" r="0.3" fill="#d4e0e6" opacity="0.7"/><circle cx="77.0" cy="68.6" r="0.7" fill="#6a8492" opacity="0.7"/><circle cx="53.1" cy="93.6" r="0.8" fill="#d4e0e6" opacity="0.7"/><circle cx="72.0" cy="60.5" r="0.4" fill="#3e5662" opacity="0.7"/><circle cx="1.9" cy="99.1" r="0.9" fill="#d4e0e6" opacity="0.7"/><circle cx="23.5" cy="97.8" r="0.9" fill="#4e6876" opacity="0.7"/><circle cx="107.6" cy="95.9" r="0.8" fill="#4e6876" opacity="0.7"/><circle cx="48.9" cy="102.5" r="0.7" fill="#d4e0e6" opacity="0.7"/><circle cx="65.3" cy="90.4" r="0.7" fill="#d4e0e6" opacity="0.7"/><circle cx="35.8" cy="56.6" r="0.4" fill="#4e6876" opacity="0.7"/><circle cx="94.1" cy="80.4" r="0.4" fill="#4e6876" opacity="0.7"/><circle cx="42.6" cy="105.3" r="0.6" fill="#6a8492" opacity="0.7"/><circle cx="93.0" cy="81.6" r="0.9" fill="#4e6876" opacity="0.7"/><circle cx="61.8" cy="68.6" r="0.6" fill="#3e5662" opacity="0.7"/><circle cx="2.5" cy="106.7" r="0.8" fill="#d4e0e6" opacity="0.7"/><circle cx="90.6" cy="96.1" r="0.4" fill="#d4e0e6" opacity="0.7"/><circle cx="15.7" cy="54.7" r="0.4" fill="#6a8492" opacity="0.7"/><circle cx="3.2" cy="101.2" r="1.0" fill="#4e6876" opacity="0.7"/><circle cx="23.9" cy="87.2" r="0.9" fill="#d4e0e6" opacity="0.7"/><circle cx="73.1" cy="105.3" r="0.6" fill="#e8f0f4" opacity="0.7"/><circle cx="0.9" cy="65.9" r="0.5" fill="#4e6876" opacity="0.7"/><circle cx="110.5" cy="79.5" r="0.7" fill="#d4e0e6" opacity="0.7"/><circle cx="89.1" cy="87.1" r="0.8" fill="#e8f0f4" opacity="0.7"/><circle cx="46.8" cy="93.0" r="0.8" fill="#3e5662" opacity="0.7"/><circle cx="54.9" cy="105.1" r="0.7" fill="#6a8492" opacity="0.7"/><circle cx="70.1" cy="57.6" r="0.5" fill="#6a8492" opacity="0.7"/><circle cx="66.2" cy="97.2" r="0.5" fill="#e8f0f4" opacity="0.7"/><circle cx="28.4" cy="106.7" r="0.4" fill="#6a8492" opacity="0.7"/><circle cx="5.7" cy="67.9" r="1.0" fill="#3e5662" opacity="0.7"/><circle cx="5.2" cy="86.3" r="0.7" fill="#e8f0f4" opacity="0.7"/><circle cx="17.9" cy="55.1" r="0.8" fill="#3e5662" opacity="0.7"/><circle cx="11.3" cy="62.3" r="0.7" fill="#d4e0e6" opacity="0.7"/><circle cx="107.2" cy="54.1" r="0.9" fill="#4e6876" opacity="0.7"/><circle cx="58.8" cy="90.0" r="0.7" fill="#e8f0f4" opacity="0.7"/><circle cx="82.6" cy="92.4" r="0.7" fill="#e8f0f4" opacity="0.7"/><circle cx="65.5" cy="66.1" r="0.4" fill="#6a8492" opacity="0.7"/><circle cx="24.4" cy="95.1" r="0.8" fill="#e8f0f4" opacity="0.7"/><circle cx="71.7" cy="59.0" r="0.7" fill="#4e6876" opacity="0.7"/><circle cx="99.4" cy="103.2" r="0.4" fill="#d4e0e6" opacity="0.7"/><circle cx="36.2" cy="71.2" r="0.6" fill="#6a8492" opacity="0.7"/><circle cx="89.9" cy="54.4" r="0.4" fill="#3e5662" opacity="0.7"/><circle cx="89.8" cy="66.4" r="0.6" fill="#e8f0f4" opacity="0.7"/><circle cx="107.2" cy="96.5" r="0.9" fill="#e8f0f4" opacity="0.7"/><circle cx="83.9" cy="55.8" r="0.8" fill="#e8f0f4" opacity="0.7"/><circle cx="21.0" cy="108.7" r="0.6" fill="#d4e0e6" opacity="0.7"/><circle cx="92.2" cy="103.1" r="0.3" fill="#e8f0f4" opacity="0.7"/><circle cx="51.8" cy="110.9" r="0.8" fill="#d4e0e6" opacity="0.7"/><circle cx="32.1" cy="68.5" r="0.6" fill="#4e6876" opacity="0.7"/><circle cx="63.6" cy="74.7" r="0.9" fill="#4e6876" opacity="0.7"/><circle cx="104.1" cy="100.1" r="0.7" fill="#6a8492" opacity="0.7"/><circle cx="49.7" cy="73.5" r="0.3" fill="#6a8492" opacity="0.7"/><circle cx="18.9" cy="84.8" r="0.8" fill="#d4e0e6" opacity="0.7"/><circle cx="109.0" cy="84.1" r="0.8" fill="#e8f0f4" opacity="0.7"/><circle cx="25.5" cy="97.8" r="0.9" fill="#d4e0e6" opacity="0.7"/><circle cx="83.7" cy="111.4" r="0.4" fill="#e8f0f4" opacity="0.7"/><circle cx="80.8" cy="97.3" r="0.8" fill="#6a8492" opacity="0.7"/><circle cx="112.4" cy="59.3" r="0.9" fill="#e8f0f4" opacity="0.7"/><circle cx="76.8" cy="88.7" r="0.8" fill="#e8f0f4" opacity="0.7"/><circle cx="85.4" cy="85.1" r="0.4" fill="#3e5662" opacity="0.7"/><circle cx="13.2" cy="82.6" r="1.0" fill="#d4e0e6" opacity="0.7"/><circle cx="107.7" cy="80.1" r="0.9" fill="#6a8492" opacity="0.7"/><circle cx="47.8" cy="94.0" r="0.6" fill="#e8f0f4" opacity="0.7"/><circle cx="100.8" cy="80.7" r="0.5" fill="#6a8492" opacity="0.7"/><circle cx="97.0" cy="67.1" r="0.9" fill="#d4e0e6" opacity="0.7"/><circle cx="73.1" cy="103.0" r="0.4" fill="#3e5662" opacity="0.7"/><circle cx="77.4" cy="72.1" r="0.5" fill="#6a8492" opacity="0.7"/><circle cx="11.4" cy="111.0" r="0.6" fill="#e8f0f4" opacity="0.7"/></g><path d="M55,80 L75,79 L74,86 L56,86 Z" fill="#dfe8ee" filter="url(#f10)"/><line x1="28.9" y1="86.7" x2="25.9" y2="101.5" stroke="#f6e8c8" stroke-width="0.8" opacity="0.60"/><line x1="93.5" y1="2.5" x2="91.1" y2="14.4" stroke="#f6e8c8" stroke-width="0.5" opacity="0.86"/><line x1="107.3" y1="64.1" x2="105.7" y2="72.3" stroke="#f6e8c8" stroke-width="0.7" opacity="0.67"/><line x1="106.6" y1="35.7" x2="104.2" y2="47.6" stroke="#f6e8c8" stroke-width="1.1" opacity="0.51"/><line x1="7.3" y1="67.4" x2="5.9" y2="74.3" stroke="#f6e8c8" stroke-width="0.7" opacity="0.65"/><line x1="52.7" y1="26.5" x2="49.8" y2="41.0" stroke="#f6e8c8" stroke-width="0.8" opacity="0.94"/><line x1="93.6" y1="45.4" x2="90.5" y2="60.6" stroke="#f6e8c8" stroke-width="1.0" opacity="0.93"/><line x1="20.3" y1="28.5" x2="19.3" y2="33.6" stroke="#f6e8c8" stroke-width="0.5" opacity="0.89"/><line x1="33.0" y1="30.4" x2="30.7" y2="41.7" stroke="#f6e8c8" stroke-width="1.2" opacity="0.60"/><line x1="10.8" y1="74.3" x2="8.0" y2="88.5" stroke="#f6e8c8" stroke-width="1.0" opacity="0.52"/><line x1="91.7" y1="41.7" x2="89.8" y2="50.9" stroke="#f6e8c8" stroke-width="0.6" opacity="0.92"/><line x1="81.7" y1="76.5" x2="80.6" y2="82.3" stroke="#f6e8c8" stroke-width="1.1" opacity="0.56"/><line x1="38.9" y1="47.7" x2="37.3" y2="56.0" stroke="#f6e8c8" stroke-width="1.0" opacity="0.71"/><line x1="49.5" y1="39.3" x2="47.1" y2="51.1" stroke="#f6e8c8" stroke-width="1.0" opacity="0.68"/><line x1="42.6" y1="85.0" x2="40.4" y2="96.0" stroke="#f6e8c8" stroke-width="0.6" opacity="0.78"/><line x1="6.7" y1="12.8" x2="4.5" y2="24.0" stroke="#f6e8c8" stroke-width="0.9" opacity="0.81"/><line x1="86.6" y1="4.6" x2="83.6" y2="19.3" stroke="#f6e8c8" stroke-width="0.5" opacity="0.55"/><line x1="112.2" y1="92.2" x2="110.1" y2="102.5" stroke="#f6e8c8" stroke-width="0.5" opacity="0.60"/><line x1="65.5" y1="60.2" x2="63.4" y2="70.7" stroke="#f6e8c8" stroke-width="1.2" opacity="0.74"/><line x1="99.0" y1="90.9" x2="98.0" y2="95.9" stroke="#f6e8c8" stroke-width="1.2" opacity="0.88"/></svg></div>
<div class="tile"><svg viewBox="0 0 117 112" preserveAspectRatio="none"><defs><filter id="f11" x="-0.5" y="-0.5" width="2" height="2"><feGaussianBlur stdDeviation="2.5"/></filter></defs><rect width="117" height="112" fill="#3b4541"/><rect x="0" y="0" width="50" height="112" fill="#2c3532"/><path d="M56,0 L86,0 L82,18 L76,34 L70,50 L64,38 L60,22 Z" fill="#eeeeea" filter="url(#f11)"/><path d="M62,0 L80,0 L76,18 L70,34 L66,22 Z" fill="#f6f6f4"/><path d="M108,0 L117,0 L117,68 L110,52 Z" fill="#dadcd8" opacity="0.85" filter="url(#f11)"/><ellipse cx="66" cy="66" rx="12" ry="26" fill="#8e9892" opacity="0.5" filter="url(#f11)"/><rect x="3" y="13" width="0.9" height="112" fill="#1a201e" opacity="0.7"/><rect x="8" y="10" width="1.1" height="112" fill="#1a201e" opacity="0.7"/><rect x="13" y="18" width="1.9" height="112" fill="#1a201e" opacity="0.7"/><rect x="19" y="32" width="1.2" height="112" fill="#1a201e" opacity="0.7"/><rect x="24" y="21" width="1.0" height="112" fill="#1a201e" opacity="0.7"/><rect x="30" y="26" width="1.2" height="112" fill="#1a201e" opacity="0.7"/><rect x="36" y="20" width="1.4" height="112" fill="#1a201e" opacity="0.7"/><rect x="41" y="17" width="1.8" height="112" fill="#1a201e" opacity="0.7"/><rect x="47" y="20" width="1.1" height="112" fill="#1a201e" opacity="0.7"/><rect x="53" y="34" width="1.9" height="112" fill="#1a201e" opacity="0.7"/><rect x="58" y="11" width="1.1" height="112" fill="#1a201e" opacity="0.7"/><rect x="66" y="22" width="1.9" height="112" fill="#1a201e" opacity="0.7"/><rect x="72" y="34" width="1.8" height="112" fill="#1a201e" opacity="0.7"/><rect x="78" y="25" width="1.6" height="112" fill="#1a201e" opacity="0.7"/><rect x="100" y="40" width="1.1" height="112" fill="#1a201e" opacity="0.7"/><rect x="106" y="10" width="0.9" height="112" fill="#1a201e" opacity="0.7"/><rect x="112" y="52" width="1.3" height="112" fill="#1a201e" opacity="0.7"/><path d="M88,0 L94,0 L101,92 L95,94 Z" fill="#161a18"/><path d="M62,112 L82,98 L117,78 L117,112 Z" fill="#c6c8c2"/><path d="M80,104 L100,92 L110,90 M90,108 L112,96" stroke="#8a6a50" stroke-width="1.2" opacity="0.6"/><path d="M42,112 L56,104 L70,100 L64,112 Z" fill="#d4d6d2"/><rect x="60" y="99" width="3" height="9" fill="#141414"/></svg></div>
<div class="tile"><svg viewBox="0 0 117 112" preserveAspectRatio="none"><defs><linearGradient id="g12a" x1="0" y1="0" x2="1" y2="1"><stop offset="0" stop-color="#b88a5a"/><stop offset="0.4" stop-color="#d0a874"/><stop offset="1" stop-color="#c49666"/></linearGradient><filter id="f12"><feGaussianBlur stdDeviation="0.6"/></filter></defs><rect width="117" height="112" fill="url(#g12a)"/><g filter="url(#f12)"><path d="M36.9,33.8 q6.2,-9.3 15.6,-5.4" stroke="#b08050" stroke-width="0.6" fill="none" opacity="0.65"/><path d="M48.4,85.4 q3.8,-5.7 9.5,-3.3" stroke="#ecd0a0" stroke-width="0.8" fill="none" opacity="0.65"/><path d="M107.2,109.2 q5.9,-8.9 14.8,-5.2" stroke="#ecd0a0" stroke-width="0.6" fill="none" opacity="0.65"/><path d="M-1.4,43.3 q6.2,-9.3 15.5,-5.4" stroke="#dcb484" stroke-width="0.9" fill="none" opacity="0.65"/><path d="M-0.9,26.7 q8.0,-11.9 19.9,-7.0" stroke="#f0dcb0" stroke-width="0.9" fill="none" opacity="0.65"/><path d="M117.0,111.4 q5.6,-8.4 14.0,-4.9" stroke="#ecd0a0" stroke-width="1.2" fill="none" opacity="0.65"/><path d="M56.7,28.8 q4.3,-6.4 10.7,-3.8" stroke="#dcb484" stroke-width="0.6" fill="none" opacity="0.65"/><path d="M0.6,31.8 q9.1,-13.7 22.8,-8.0" stroke="#b08050" stroke-width="1.0" fill="none" opacity="0.65"/><path d="M6.7,96.8 q7.2,-10.9 18.1,-6.3" stroke="#ecd0a0" stroke-width="0.6" fill="none" opacity="0.65"/><path d="M74.2,43.3 q4.0,-5.9 9.9,-3.5" stroke="#b08050" stroke-width="0.8" fill="none" opacity="0.65"/><path d="M12.9,1.3 q7.4,-11.1 18.4,-6.5" stroke="#f0dcb0" stroke-width="1.1" fill="none" opacity="0.65"/><path d="M71.7,82.4 q3.4,-5.1 8.5,-3.0" stroke="#8a6030" stroke-width="0.7" fill="none" opacity="0.65"/><path d="M53.4,72.6 q7.4,-11.1 18.4,-6.4" stroke="#9a7040" stroke-width="0.8" fill="none" opacity="0.65"/><path d="M102.6,38.6 q3.5,-5.2 8.7,-3.0" stroke="#dcb484" stroke-width="1.0" fill="none" opacity="0.65"/><path d="M72.7,84.0 q3.3,-5.0 8.3,-2.9" stroke="#b08050" stroke-width="1.1" fill="none" opacity="0.65"/><path d="M0.4,26.0 q3.4,-5.1 8.6,-3.0" stroke="#b08050" stroke-width="1.2" fill="none" opacity="0.65"/><path d="M96.6,36.5 q5.2,-7.8 13.0,-4.6" stroke="#9a7040" stroke-width="1.2" fill="none" opacity="0.65"/><path d="M41.1,81.5 q3.3,-4.9 8.2,-2.9" stroke="#b08050" stroke-width="0.7" fill="none" opacity="0.65"/><path d="M50.6,61.4 q9.3,-13.9 23.2,-8.1" stroke="#b08050" stroke-width="1.0" fill="none" opacity="0.65"/><path d="M17.0,108.7 q4.4,-6.6 11.1,-3.9" stroke="#b08050" stroke-width="0.6" fill="none" opacity="0.65"/><path d="M116.9,54.8 q4.6,-7.0 11.6,-4.1" stroke="#dcb484" stroke-width="0.5" fill="none" opacity="0.65"/><path d="M12.5,49.6 q7.7,-11.6 19.3,-6.8" stroke="#f0dcb0" stroke-width="0.8" fill="none" opacity="0.65"/><path d="M10.6,99.4 q3.2,-4.8 8.0,-2.8" stroke="#f0dcb0" stroke-width="1.1" fill="none" opacity="0.65"/><path d="M67.0,57.0 q6.7,-10.1 16.8,-5.9" stroke="#b08050" stroke-width="0.6" fill="none" opacity="0.65"/><path d="M20.5,14.5 q9.3,-14.0 23.4,-8.2" stroke="#9a7040" stroke-width="1.1" fill="none" opacity="0.65"/><path d="M116.8,16.2 q5.3,-7.9 13.1,-4.6" stroke="#ecd0a0" stroke-width="0.6" fill="none" opacity="0.65"/><path d="M43.7,9.6 q8.4,-12.7 21.1,-7.4" stroke="#b08050" stroke-width="0.7" fill="none" opacity="0.65"/><path d="M62.4,26.8 q4.2,-6.2 10.4,-3.6" stroke="#8a6030" stroke-width="0.7" fill="none" opacity="0.65"/><path d="M109.6,48.9 q3.5,-5.3 8.8,-3.1" stroke="#ecd0a0" stroke-width="1.2" fill="none" opacity="0.65"/><path d="M104.8,8.5 q8.0,-12.0 20.1,-7.0" stroke="#9a7040" stroke-width="1.1" fill="none" opacity="0.65"/><path d="M43.4,63.5 q8.6,-12.9 21.6,-7.6" stroke="#8a6030" stroke-width="1.0" fill="none" opacity="0.65"/><path d="M55.1,14.0 q4.8,-7.1 11.9,-4.2" stroke="#8a6030" stroke-width="0.9" fill="none" opacity="0.65"/><path d="M76.3,44.3 q6.5,-9.8 16.4,-5.7" stroke="#f0dcb0" stroke-width="0.6" fill="none" opacity="0.65"/><path d="M-0.3,107.7 q6.9,-10.3 17.1,-6.0" stroke="#9a7040" stroke-width="1.1" fill="none" opacity="0.65"/><path d="M111.5,77.2 q5.8,-8.8 14.6,-5.1" stroke="#f0dcb0" stroke-width="0.7" fill="none" opacity="0.65"/><path d="M94.4,84.1 q3.6,-5.3 8.9,-3.1" stroke="#8a6030" stroke-width="0.8" fill="none" opacity="0.65"/><path d="M75.4,96.0 q3.3,-4.9 8.2,-2.9" stroke="#b08050" stroke-width="0.7" fill="none" opacity="0.65"/><path d="M86.6,114.7 q8.9,-13.3 22.2,-7.8" stroke="#b08050" stroke-width="1.2" fill="none" opacity="0.65"/><path d="M89.8,27.9 q6.0,-8.9 14.9,-5.2" stroke="#9a7040" stroke-width="0.9" fill="none" opacity="0.65"/><path d="M40.9,16.1 q8.0,-12.0 20.0,-7.0" stroke="#dcb484" stroke-width="1.0" fill="none" opacity="0.65"/><path d="M35.7,79.6 q8.1,-12.2 20.3,-7.1" stroke="#9a7040" stroke-width="1.2" fill="none" opacity="0.65"/><path d="M71.3,105.5 q3.9,-5.9 9.8,-3.4" stroke="#f0dcb0" stroke-width="0.6" fill="none" opacity="0.65"/><path d="M41.6,50.5 q3.7,-5.5 9.2,-3.2" stroke="#f0dcb0" stroke-width="0.8" fill="none" opacity="0.65"/><path d="M32.2,65.2 q5.4,-8.1 13.5,-4.7" stroke="#b08050" stroke-width="0.7" fill="none" opacity="0.65"/><path d="M93.0,83.2 q7.5,-11.3 18.8,-6.6" stroke="#9a7040" stroke-width="0.8" fill="none" opacity="0.65"/><path d="M4.9,75.5 q5.1,-7.6 12.7,-4.4" stroke="#f0dcb0" stroke-width="0.9" fill="none" opacity="0.65"/><path d="M70.6,84.6 q9.4,-14.1 23.5,-8.2" stroke="#9a7040" stroke-width="0.8" fill="none" opacity="0.65"/><path d="M98.0,77.8 q4.2,-6.4 10.6,-3.7" stroke="#ecd0a0" stroke-width="0.9" fill="none" opacity="0.65"/><path d="M97.9,105.0 q7.0,-10.5 17.4,-6.1" stroke="#9a7040" stroke-width="1.1" fill="none" opacity="0.65"/><path d="M65.6,49.5 q6.8,-10.2 17.0,-5.9" stroke="#ecd0a0" stroke-width="0.5" fill="none" opacity="0.65"/><path d="M-9.4,20.8 q7.7,-11.5 19.1,-6.7" stroke="#ecd0a0" stroke-width="0.6" fill="none" opacity="0.65"/><path d="M12.2,108.1 q8.2,-12.3 20.6,-7.2" stroke="#9a7040" stroke-width="0.5" fill="none" opacity="0.65"/><path d="M4.5,112.2 q9.4,-14.1 23.5,-8.2" stroke="#9a7040" stroke-width="0.8" fill="none" opacity="0.65"/><path d="M-0.7,41.9 q5.1,-7.6 12.7,-4.4" stroke="#8a6030" stroke-width="0.8" fill="none" opacity="0.65"/><path d="M22.8,6.6 q3.7,-5.6 9.3,-3.3" stroke="#9a7040" stroke-width="0.7" fill="none" opacity="0.65"/><path d="M-1.9,6.3 q9.4,-14.1 23.6,-8.3" stroke="#9a7040" stroke-width="1.1" fill="none" opacity="0.65"/><path d="M82.6,41.0 q6.3,-9.5 15.9,-5.6" stroke="#9a7040" stroke-width="0.9" fill="none" opacity="0.65"/><path d="M115.7,96.6 q8.0,-12.0 20.0,-7.0" stroke="#8a6030" stroke-width="0.8" fill="none" opacity="0.65"/><path d="M27.5,2.0 q5.2,-7.8 13.0,-4.5" stroke="#ecd0a0" stroke-width="1.1" fill="none" opacity="0.65"/><path d="M2.0,70.3 q4.4,-6.6 11.1,-3.9" stroke="#8a6030" stroke-width="0.8" fill="none" opacity="0.65"/><path d="M49.5,97.8 q7.2,-10.8 18.0,-6.3" stroke="#8a6030" stroke-width="0.8" fill="none" opacity="0.65"/><path d="M45.3,1.6 q9.2,-13.8 22.9,-8.0" stroke="#9a7040" stroke-width="0.6" fill="none" opacity="0.65"/><path d="M70.5,28.9 q4.9,-7.3 12.1,-4.2" stroke="#b08050" stroke-width="0.9" fill="none" opacity="0.65"/><path d="M32.1,6.8 q4.7,-7.0 11.7,-4.1" stroke="#ecd0a0" stroke-width="0.7" fill="none" opacity="0.65"/><path d="M26.9,76.8 q7.6,-11.4 19.1,-6.7" stroke="#f0dcb0" stroke-width="0.6" fill="none" opacity="0.65"/><path d="M13.4,118.3 q9.6,-14.4 23.9,-8.4" stroke="#dcb484" stroke-width="0.6" fill="none" opacity="0.65"/><path d="M-2.1,55.6 q5.4,-8.1 13.4,-4.7" stroke="#8a6030" stroke-width="1.0" fill="none" opacity="0.65"/><path d="M111.8,95.3 q5.2,-7.8 13.0,-4.5" stroke="#dcb484" stroke-width="0.9" fill="none" opacity="0.65"/><path d="M28.9,93.0 q5.2,-7.8 13.0,-4.6" stroke="#dcb484" stroke-width="0.5" fill="none" opacity="0.65"/><path d="M55.2,18.2 q9.2,-13.7 22.9,-8.0" stroke="#9a7040" stroke-width="0.8" fill="none" opacity="0.65"/><path d="M15.1,14.4 q6.4,-9.7 16.1,-5.6" stroke="#f0dcb0" stroke-width="1.1" fill="none" opacity="0.65"/><path d="M77.1,57.2 q5.2,-7.8 13.0,-4.5" stroke="#ecd0a0" stroke-width="0.6" fill="none" opacity="0.65"/><path d="M-1.1,46.4 q6.3,-9.4 15.7,-5.5" stroke="#dcb484" stroke-width="1.1" fill="none" opacity="0.65"/><path d="M55.2,54.0 q8.7,-13.0 21.6,-7.6" stroke="#8a6030" stroke-width="0.8" fill="none" opacity="0.65"/><path d="M79.6,64.2 q8.2,-12.3 20.5,-7.2" stroke="#8a6030" stroke-width="1.2" fill="none" opacity="0.65"/><path d="M68.6,12.6 q6.1,-9.2 15.3,-5.4" stroke="#8a6030" stroke-width="1.1" fill="none" opacity="0.65"/><path d="M6.9,103.0 q9.2,-13.9 23.1,-8.1" stroke="#f0dcb0" stroke-width="0.6" fill="none" opacity="0.65"/><path d="M49.2,74.3 q5.1,-7.7 12.8,-4.5" stroke="#ecd0a0" stroke-width="1.1" fill="none" opacity="0.65"/><path d="M73.9,40.9 q6.5,-9.8 16.3,-5.7" stroke="#9a7040" stroke-width="0.8" fill="none" opacity="0.65"/><path d="M1.9,115.6 q3.5,-5.3 8.8,-3.1" stroke="#dcb484" stroke-width="1.1" fill="none" opacity="0.65"/><path d="M75.1,63.6 q7.7,-11.5 19.2,-6.7" stroke="#dcb484" stroke-width="0.6" fill="none" opacity="0.65"/><path d="M57.5,100.0 q4.3,-6.4 10.7,-3.7" stroke="#9a7040" stroke-width="0.8" fill="none" opacity="0.65"/><path d="M92.5,84.9 q5.5,-8.3 13.8,-4.8" stroke="#9a7040" stroke-width="0.8" fill="none" opacity="0.65"/><path d="M60.1,11.0 q9.2,-13.9 23.1,-8.1" stroke="#8a6030" stroke-width="1.1" fill="none" opacity="0.65"/><path d="M50.0,114.8 q7.1,-10.6 17.7,-6.2" stroke="#dcb484" stroke-width="1.0" fill="none" opacity="0.65"/><path d="M39.9,24.2 q8.2,-12.4 20.6,-7.2" stroke="#8a6030" stroke-width="0.6" fill="none" opacity="0.65"/><path d="M111.7,12.8 q8.4,-12.6 21.0,-7.4" stroke="#dcb484" stroke-width="1.1" fill="none" opacity="0.65"/><path d="M-6.5,61.5 q8.4,-12.6 21.0,-7.4" stroke="#8a6030" stroke-width="0.6" fill="none" opacity="0.65"/><path d="M98.5,38.5 q4.3,-6.5 10.8,-3.8" stroke="#8a6030" stroke-width="1.1" fill="none" opacity="0.65"/><path d="M76.7,79.2 q3.6,-5.3 8.9,-3.1" stroke="#ecd0a0" stroke-width="1.1" fill="none" opacity="0.65"/><path d="M63.0,1.2 q8.1,-12.1 20.2,-7.1" stroke="#f0dcb0" stroke-width="0.5" fill="none" opacity="0.65"/><path d="M-5.2,119.7 q4.7,-7.0 11.6,-4.1" stroke="#dcb484" stroke-width="1.1" fill="none" opacity="0.65"/><path d="M23.8,43.9 q5.6,-8.4 14.0,-4.9" stroke="#dcb484" stroke-width="0.8" fill="none" opacity="0.65"/><path d="M26.1,113.1 q3.3,-4.9 8.2,-2.9" stroke="#8a6030" stroke-width="0.8" fill="none" opacity="0.65"/><path d="M70.7,106.5 q8.0,-12.1 20.1,-7.0" stroke="#9a7040" stroke-width="1.1" fill="none" opacity="0.65"/><path d="M71.8,6.3 q8.9,-13.3 22.2,-7.8" stroke="#9a7040" stroke-width="1.0" fill="none" opacity="0.65"/><path d="M93.3,30.4 q7.4,-11.1 18.5,-6.5" stroke="#b08050" stroke-width="0.8" fill="none" opacity="0.65"/><path d="M29.0,28.8 q7.8,-11.6 19.4,-6.8" stroke="#8a6030" stroke-width="1.1" fill="none" opacity="0.65"/><path d="M33.9,101.3 q8.6,-12.9 21.6,-7.5" stroke="#9a7040" stroke-width="1.1" fill="none" opacity="0.65"/><path d="M111.2,104.8 q6.7,-10.0 16.7,-5.8" stroke="#ecd0a0" stroke-width="1.1" fill="none" opacity="0.65"/><path d="M97.0,117.5 q9.3,-13.9 23.1,-8.1" stroke="#b08050" stroke-width="1.0" fill="none" opacity="0.65"/><path d="M89.3,104.4 q4.6,-6.9 11.4,-4.0" stroke="#dcb484" stroke-width="0.8" fill="none" opacity="0.65"/><path d="M-1.9,14.2 q8.9,-13.3 22.2,-7.8" stroke="#ecd0a0" stroke-width="0.7" fill="none" opacity="0.65"/><path d="M-1.0,8.1 q7.9,-11.9 19.9,-7.0" stroke="#9a7040" stroke-width="1.1" fill="none" opacity="0.65"/><path d="M71.3,37.3 q6.3,-9.4 15.6,-5.5" stroke="#b08050" stroke-width="0.7" fill="none" opacity="0.65"/><path d="M70.3,107.4 q6.2,-9.3 15.5,-5.4" stroke="#dcb484" stroke-width="1.0" fill="none" opacity="0.65"/><path d="M29.6,104.9 q6.9,-10.3 17.2,-6.0" stroke="#ecd0a0" stroke-width="0.9" fill="none" opacity="0.65"/><path d="M116.7,107.5 q3.6,-5.5 9.1,-3.2" stroke="#b08050" stroke-width="0.8" fill="none" opacity="0.65"/><path d="M101.8,79.9 q4.5,-6.8 11.3,-4.0" stroke="#dcb484" stroke-width="0.9" fill="none" opacity="0.65"/><path d="M107.8,79.1 q8.7,-13.1 21.8,-7.6" stroke="#8a6030" stroke-width="1.1" fill="none" opacity="0.65"/><path d="M-5.6,70.9 q6.0,-9.0 14.9,-5.2" stroke="#8a6030" stroke-width="0.6" fill="none" opacity="0.65"/><path d="M116.8,22.1 q5.1,-7.6 12.7,-4.4" stroke="#f0dcb0" stroke-width="1.1" fill="none" opacity="0.65"/><path d="M35.3,26.7 q8.0,-12.0 19.9,-7.0" stroke="#ecd0a0" stroke-width="0.7" fill="none" opacity="0.65"/><path d="M102.2,119.1 q6.0,-9.0 14.9,-5.2" stroke="#b08050" stroke-width="0.9" fill="none" opacity="0.65"/><path d="M-0.2,50.0 q5.3,-7.9 13.2,-4.6" stroke="#dcb484" stroke-width="0.9" fill="none" opacity="0.65"/><path d="M113.5,59.0 q8.0,-12.0 20.0,-7.0" stroke="#ecd0a0" stroke-width="1.0" fill="none" opacity="0.65"/><path d="M8.2,114.8 q9.6,-14.4 24.0,-8.4" stroke="#f0dcb0" stroke-width="1.1" fill="none" opacity="0.65"/><path d="M10.8,2.1 q7.4,-11.0 18.4,-6.4" stroke="#ecd0a0" stroke-width="1.1" fill="none" opacity="0.65"/><path d="M35.9,110.9 q4.5,-6.8 11.3,-4.0" stroke="#ecd0a0" stroke-width="1.1" fill="none" opacity="0.65"/><path d="M98.1,85.7 q7.8,-11.6 19.4,-6.8" stroke="#9a7040" stroke-width="0.9" fill="none" opacity="0.65"/><path d="M108.4,67.2 q4.1,-6.2 10.3,-3.6" stroke="#8a6030" stroke-width="0.8" fill="none" opacity="0.65"/><path d="M-6.1,16.4 q7.6,-11.4 19.0,-6.7" stroke="#f0dcb0" stroke-width="0.7" fill="none" opacity="0.65"/><path d="M43.4,61.6 q6.2,-9.3 15.5,-5.4" stroke="#ecd0a0" stroke-width="1.0" fill="none" opacity="0.65"/><path d="M91.9,108.4 q4.3,-6.4 10.6,-3.7" stroke="#9a7040" stroke-width="0.9" fill="none" opacity="0.65"/><path d="M19.5,98.6 q4.7,-7.0 11.7,-4.1" stroke="#9a7040" stroke-width="1.1" fill="none" opacity="0.65"/><path d="M15.7,70.3 q7.8,-11.7 19.5,-6.8" stroke="#8a6030" stroke-width="0.8" fill="none" opacity="0.65"/><path d="M65.5,25.9 q8.6,-12.8 21.4,-7.5" stroke="#b08050" stroke-width="1.1" fill="none" opacity="0.65"/><path d="M-3.3,113.3 q6.0,-9.0 15.1,-5.3" stroke="#ecd0a0" stroke-width="1.1" fill="none" opacity="0.65"/><path d="M104.0,67.1 q5.9,-8.8 14.6,-5.1" stroke="#dcb484" stroke-width="0.8" fill="none" opacity="0.65"/><path d="M71.1,119.7 q5.4,-8.0 13.4,-4.7" stroke="#8a6030" stroke-width="0.7" fill="none" opacity="0.65"/><path d="M15.3,19.3 q5.8,-8.7 14.6,-5.1" stroke="#f0dcb0" stroke-width="0.8" fill="none" opacity="0.65"/><path d="M29.4,76.2 q6.1,-9.1 15.1,-5.3" stroke="#9a7040" stroke-width="0.6" fill="none" opacity="0.65"/><path d="M30.1,60.5 q4.4,-6.6 10.9,-3.8" stroke="#b08050" stroke-width="1.1" fill="none" opacity="0.65"/><path d="M87.6,71.0 q6.2,-9.3 15.6,-5.4" stroke="#dcb484" stroke-width="0.8" fill="none" opacity="0.65"/><path d="M15.1,71.0 q4.1,-6.2 10.3,-3.6" stroke="#9a7040" stroke-width="0.7" fill="none" opacity="0.65"/><path d="M34.7,46.0 q3.6,-5.5 9.1,-3.2" stroke="#ecd0a0" stroke-width="0.7" fill="none" opacity="0.65"/><path d="M44.0,42.2 q7.6,-11.4 19.1,-6.7" stroke="#b08050" stroke-width="1.0" fill="none" opacity="0.65"/><path d="M49.1,100.2 q6.7,-10.1 16.8,-5.9" stroke="#ecd0a0" stroke-width="1.1" fill="none" opacity="0.65"/><path d="M82.5,42.5 q7.2,-10.8 18.1,-6.3" stroke="#8a6030" stroke-width="0.8" fill="none" opacity="0.65"/><path d="M44.9,35.8 q6.7,-10.1 16.9,-5.9" stroke="#8a6030" stroke-width="1.0" fill="none" opacity="0.65"/><path d="M-9.5,82.4 q7.2,-10.8 18.0,-6.3" stroke="#8a6030" stroke-width="1.1" fill="none" opacity="0.65"/><path d="M90.5,70.8 q7.5,-11.3 18.8,-6.6" stroke="#dcb484" stroke-width="1.1" fill="none" opacity="0.65"/><path d="M9.9,66.2 q7.4,-11.0 18.4,-6.4" stroke="#dcb484" stroke-width="0.6" fill="none" opacity="0.65"/><path d="M104.0,96.1 q3.4,-5.1 8.4,-2.9" stroke="#dcb484" stroke-width="1.1" fill="none" opacity="0.65"/><path d="M46.0,33.0 q6.5,-9.8 16.3,-5.7" stroke="#ecd0a0" stroke-width="0.7" fill="none" opacity="0.65"/><path d="M57.6,111.5 q7.3,-10.9 18.2,-6.4" stroke="#b08050" stroke-width="0.6" fill="none" opacity="0.65"/><path d="M22.3,73.2 q6.8,-10.2 17.0,-6.0" stroke="#dcb484" stroke-width="0.5" fill="none" opacity="0.65"/><path d="M91.6,8.1 q8.4,-12.6 21.0,-7.3" stroke="#8a6030" stroke-width="0.9" fill="none" opacity="0.65"/><path d="M25.0,39.9 q8.5,-12.7 21.1,-7.4" stroke="#9a7040" stroke-width="1.2" fill="none" opacity="0.65"/><path d="M37.9,9.1 q4.5,-6.8 11.4,-4.0" stroke="#8a6030" stroke-width="1.1" fill="none" opacity="0.65"/></g><ellipse cx="40" cy="62" rx="9" ry="12" fill="#1c1a18"/><ellipse cx="62" cy="84" rx="21" ry="17" fill="#f2ece6"/><path d="M56,47 L60,34 L67,46 Z" fill="#f0dcc0"/><path d="M78,47 L93,36 L87,55 Z" fill="#b86a38"/><path d="M80,47 L90,40 L86,52 Z" fill="#f2dcc4"/><ellipse cx="58" cy="60" rx="15" ry="11" transform="rotate(-12 58 60)" fill="#f4eee8"/><path d="M54,48 C62,42 74,42 82,48 C86,56 86,66 84,76 L76,78 C74,68 70,60 62,56 L54,54 Z" fill="#b86a38"/><ellipse cx="66" cy="51" rx="1.6" ry="1.4" fill="#222"/><ellipse cx="47" cy="52" rx="2.6" ry="2.2" fill="#141414"/><ellipse cx="56" cy="65" rx="10" ry="4" transform="rotate(-8 56 65)" fill="#2a1a1a"/><ellipse cx="47" cy="68" rx="5.5" ry="2.6" transform="rotate(-25 47 68)" fill="#d07888"/><g filter="url(#f12)"><path d="M8.7,93.0 q3.5,-5.2 8.7,-3.0" stroke="#f0dcb0" stroke-width="0.7" fill="none" opacity="0.75"/><path d="M113.3,116.7 q3.7,-5.6 9.3,-3.2" stroke="#b08050" stroke-width="1.0" fill="none" opacity="0.75"/><path d="M107.1,88.1 q7.6,-11.5 19.1,-6.7" stroke="#c89860" stroke-width="1.2" fill="none" opacity="0.75"/><path d="M-4.9,102.4 q6.7,-10.1 16.8,-5.9" stroke="#c89860" stroke-width="0.7" fill="none" opacity="0.75"/><path d="M100.9,111.4 q6.1,-9.1 15.2,-5.3" stroke="#f0dcb0" stroke-width="0.6" fill="none" opacity="0.75"/><path d="M-2.9,89.3 q3.3,-5.0 8.3,-2.9" stroke="#b08050" stroke-width="0.7" fill="none" opacity="0.75"/><path d="M10.6,91.3 q6.1,-9.2 15.3,-5.4" stroke="#b08050" stroke-width="0.9" fill="none" opacity="0.75"/><path d="M114.3,100.2 q5.1,-7.6 12.7,-4.4" stroke="#f0dcb0" stroke-width="0.9" fill="none" opacity="0.75"/><path d="M51.4,85.9 q6.4,-9.6 16.1,-5.6" stroke="#b08050" stroke-width="0.7" fill="none" opacity="0.75"/><path d="M103.4,112.8 q6.2,-9.3 15.5,-5.4" stroke="#ecd0a0" stroke-width="0.9" fill="none" opacity="0.75"/><path d="M69.0,116.7 q7.0,-10.4 17.4,-6.1" stroke="#ecd0a0" stroke-width="0.9" fill="none" opacity="0.75"/><path d="M101.9,106.0 q4.8,-7.2 12.0,-4.2" stroke="#c89860" stroke-width="1.0" fill="none" opacity="0.75"/><path d="M8.7,86.7 q7.0,-10.5 17.4,-6.1" stroke="#b08050" stroke-width="0.9" fill="none" opacity="0.75"/><path d="M77.4,90.5 q6.3,-9.5 15.8,-5.5" stroke="#ecd0a0" stroke-width="1.2" fill="none" opacity="0.75"/><path d="M36.0,109.7 q4.1,-6.2 10.3,-3.6" stroke="#c89860" stroke-width="1.1" fill="none" opacity="0.75"/><path d="M41.9,118.6 q7.8,-11.7 19.5,-6.8" stroke="#b08050" stroke-width="0.8" fill="none" opacity="0.75"/><path d="M37.8,94.4 q7.5,-11.3 18.8,-6.6" stroke="#ecd0a0" stroke-width="1.3" fill="none" opacity="0.75"/><path d="M77.4,96.1 q6.8,-10.3 17.1,-6.0" stroke="#f0dcb0" stroke-width="1.2" fill="none" opacity="0.75"/><path d="M32.8,105.1 q5.8,-8.7 14.6,-5.1" stroke="#f0dcb0" stroke-width="1.2" fill="none" opacity="0.75"/><path d="M115.6,102.2 q7.2,-10.8 17.9,-6.3" stroke="#ecd0a0" stroke-width="0.7" fill="none" opacity="0.75"/><path d="M86.7,105.1 q7.6,-11.3 18.9,-6.6" stroke="#c89860" stroke-width="1.1" fill="none" opacity="0.75"/><path d="M-9.4,105.6 q3.8,-5.8 9.6,-3.4" stroke="#c89860" stroke-width="0.8" fill="none" opacity="0.75"/><path d="M4.4,115.5 q5.3,-8.0 13.3,-4.7" stroke="#f0dcb0" stroke-width="0.7" fill="none" opacity="0.75"/><path d="M47.0,97.9 q3.4,-5.1 8.4,-2.9" stroke="#f0dcb0" stroke-width="0.8" fill="none" opacity="0.75"/><path d="M73.1,94.7 q5.0,-7.5 12.4,-4.4" stroke="#c89860" stroke-width="1.1" fill="none" opacity="0.75"/><path d="M78.0,107.7 q4.5,-6.8 11.3,-4.0" stroke="#f0dcb0" stroke-width="0.9" fill="none" opacity="0.75"/><path d="M110.7,101.5 q3.8,-5.7 9.4,-3.3" stroke="#b08050" stroke-width="1.2" fill="none" opacity="0.75"/><path d="M27.5,106.1 q7.4,-11.0 18.4,-6.4" stroke="#b08050" stroke-width="0.8" fill="none" opacity="0.75"/><path d="M98.1,115.0 q4.4,-6.7 11.1,-3.9" stroke="#ecd0a0" stroke-width="0.9" fill="none" opacity="0.75"/><path d="M-6.8,87.9 q7.0,-10.5 17.5,-6.1" stroke="#ecd0a0" stroke-width="0.8" fill="none" opacity="0.75"/><path d="M66.3,115.7 q3.6,-5.4 9.0,-3.1" stroke="#f0dcb0" stroke-width="0.8" fill="none" opacity="0.75"/><path d="M108.5,91.5 q3.9,-5.8 9.6,-3.4" stroke="#ecd0a0" stroke-width="1.1" fill="none" opacity="0.75"/><path d="M96.5,94.1 q4.0,-6.0 10.0,-3.5" stroke="#b08050" stroke-width="0.9" fill="none" opacity="0.75"/><path d="M89.8,93.8 q7.6,-11.4 19.0,-6.6" stroke="#b08050" stroke-width="0.7" fill="none" opacity="0.75"/><path d="M116.6,95.6 q8.0,-12.0 19.9,-7.0" stroke="#ecd0a0" stroke-width="1.0" fill="none" opacity="0.75"/><path d="M57.7,114.9 q5.3,-8.0 13.3,-4.7" stroke="#ecd0a0" stroke-width="0.9" fill="none" opacity="0.75"/><path d="M49.6,95.9 q3.5,-5.2 8.7,-3.1" stroke="#c89860" stroke-width="0.8" fill="none" opacity="0.75"/><path d="M48.8,113.8 q7.8,-11.7 19.5,-6.8" stroke="#f0dcb0" stroke-width="0.7" fill="none" opacity="0.75"/><path d="M76.9,104.4 q5.1,-7.7 12.9,-4.5" stroke="#b08050" stroke-width="1.2" fill="none" opacity="0.75"/><path d="M104.2,101.4 q7.7,-11.5 19.2,-6.7" stroke="#f0dcb0" stroke-width="0.7" fill="none" opacity="0.75"/></g></svg></div>
<div class="tile"><svg viewBox="0 0 117 112" preserveAspectRatio="none"><defs><radialGradient id="g13a" cx="0.78" cy="0.72" r="0.95" fx="0.78" fy="0.7"><stop offset="0" stop-color="#ffffff"/><stop offset="0.25" stop-color="#f0f0f0"/><stop offset="0.7" stop-color="#b8b8b8"/><stop offset="1" stop-color="#808080"/></radialGradient><radialGradient id="g13b" cx="0.15" cy="0.8" r="0.55"><stop offset="0" stop-color="#5a5a5a" stop-opacity="0.7"/><stop offset="1" stop-color="#5a5a5a" stop-opacity="0"/></radialGradient><filter id="f13" x="-0.3" y="-0.3" width="1.6" height="1.6"><feGaussianBlur stdDeviation="7"/></filter><filter id="f13c" x="-1" y="-1" width="3" height="3"><feGaussianBlur stdDeviation="1.5"/></filter></defs><rect width="117" height="112" fill="#303030"/><rect x="0" y="66" width="117" height="46" fill="#1e1e1e"/><rect x="0" y="0" width="117" height="112" fill="url(#g13b)"/><path d="M-20,-20 L56,-20 L52,30 L48,56 L22,84 L-20,98 Z" fill="url(#g13a)" filter="url(#f13)"/><path d="M46,56 L40,60 L36,66" stroke="#ffffff" stroke-width="2" filter="url(#f13c)"/><path d="M44,112 L42,88 L40,72 L44,60 L49,52 L51,46 L54,52 L60,58 L62,70 L58,90 L58,112 Z" fill="#191919"/></svg></div>
<div class="tile"><svg viewBox="0 0 117 112" preserveAspectRatio="none"><defs><linearGradient id="g14s" x1="0" y1="0" x2="1" y2="0"><stop offset="0" stop-color="#bfae8c"/><stop offset="0.7" stop-color="#d4c8a8"/><stop offset="1" stop-color="#f4ecd8"/></linearGradient><linearGradient id="g14w" x1="0" y1="0" x2="0" y2="1"><stop offset="0" stop-color="#585e56"/><stop offset="0.45" stop-color="#464c46"/><stop offset="1" stop-color="#3a3e36"/></linearGradient><linearGradient id="g14f" x1="0" y1="0" x2="0.4" y2="1"><stop offset="0" stop-color="#8a7e5c"/><stop offset="0.5" stop-color="#b8ac88"/><stop offset="1" stop-color="#a09270"/></linearGradient><filter id="f14"><feGaussianBlur stdDeviation="3"/></filter><filter id="f14b" x="-0.2" y="-0.2" width="1.4" height="1.4"><feGaussianBlur stdDeviation="2.5"/></filter><filter id="f14c"><feGaussianBlur stdDeviation="0.5"/></filter></defs><rect width="117" height="112" fill="#434840"/><rect x="0" y="0" width="117" height="14" fill="url(#g14s)"/><rect x="0" y="14" width="117" height="98" fill="url(#g14w)"/><path d="M96,14 L117,14 L117,60 L98,58 C94,40 97,25 96,14 Z" fill="#f0e4c0" opacity="0.9" filter="url(#f14)"/><g filter="url(#f14c)"><ellipse cx="93.4" cy="103.7" rx="1.7" ry="0.7" fill="#f0e4c0" opacity="0.45"/><ellipse cx="87.8" cy="60.6" rx="2.9" ry="0.8" fill="#f0e4c0" opacity="0.54"/><ellipse cx="85.5" cy="83.9" rx="1.4" ry="1.0" fill="#f0e4c0" opacity="0.56"/><ellipse cx="91.5" cy="102.8" rx="1.9" ry="0.8" fill="#f0e4c0" opacity="0.79"/><ellipse cx="114.1" cy="89.8" rx="2.0" ry="1.2" fill="#f0e4c0" opacity="0.50"/><ellipse cx="115.0" cy="88.2" rx="1.3" ry="0.6" fill="#f0e4c0" opacity="0.50"/><ellipse cx="83.8" cy="90.5" rx="2.4" ry="0.9" fill="#f0e4c0" opacity="0.61"/><ellipse cx="79.9" cy="58.5" rx="2.0" ry="1.0" fill="#f0e4c0" opacity="0.78"/><ellipse cx="81.2" cy="60.5" rx="1.6" ry="0.6" fill="#f0e4c0" opacity="0.50"/><ellipse cx="97.3" cy="88.4" rx="1.5" ry="1.2" fill="#f0e4c0" opacity="0.44"/><ellipse cx="83.2" cy="99.8" rx="2.4" ry="0.9" fill="#f0e4c0" opacity="0.58"/><ellipse cx="103.4" cy="81.6" rx="1.4" ry="0.9" fill="#f0e4c0" opacity="0.89"/><ellipse cx="112.6" cy="66.2" rx="1.4" ry="0.6" fill="#f0e4c0" opacity="0.69"/><ellipse cx="104.8" cy="102.8" rx="2.3" ry="0.8" fill="#f0e4c0" opacity="0.90"/><ellipse cx="71.3" cy="84.8" rx="2.4" ry="0.8" fill="#f0e4c0" opacity="0.81"/><ellipse cx="111.9" cy="80.7" rx="1.9" ry="1.1" fill="#f0e4c0" opacity="0.41"/><ellipse cx="71.3" cy="57.7" rx="1.9" ry="0.9" fill="#f0e4c0" opacity="0.59"/><ellipse cx="87.5" cy="73.3" rx="1.3" ry="1.1" fill="#f0e4c0" opacity="0.59"/><ellipse cx="95.5" cy="63.1" rx="1.3" ry="0.6" fill="#f0e4c0" opacity="0.80"/><ellipse cx="75.9" cy="70.5" rx="2.1" ry="0.6" fill="#f0e4c0" opacity="0.65"/><ellipse cx="91.8" cy="92.5" rx="2.5" ry="0.7" fill="#f0e4c0" opacity="0.47"/><ellipse cx="113.5" cy="55.3" rx="2.8" ry="0.8" fill="#f0e4c0" opacity="0.79"/><ellipse cx="109.2" cy="84.4" rx="1.9" ry="0.8" fill="#f0e4c0" opacity="0.42"/><ellipse cx="115.8" cy="104.6" rx="1.1" ry="1.2" fill="#f0e4c0" opacity="0.52"/><ellipse cx="71.8" cy="101.3" rx="1.4" ry="0.7" fill="#f0e4c0" opacity="0.79"/><ellipse cx="105.5" cy="71.9" rx="1.2" ry="1.0" fill="#f0e4c0" opacity="0.44"/><ellipse cx="106.6" cy="77.3" rx="2.4" ry="0.6" fill="#f0e4c0" opacity="0.62"/><ellipse cx="113.8" cy="60.3" rx="2.0" ry="1.1" fill="#f0e4c0" opacity="0.69"/><ellipse cx="93.4" cy="104.5" rx="2.5" ry="1.0" fill="#f0e4c0" opacity="0.81"/><ellipse cx="107.1" cy="69.2" rx="1.1" ry="0.5" fill="#f0e4c0" opacity="0.66"/><ellipse cx="105.2" cy="64.6" rx="1.8" ry="0.7" fill="#f0e4c0" opacity="0.50"/><ellipse cx="82.2" cy="77.7" rx="1.5" ry="0.8" fill="#f0e4c0" opacity="0.75"/><ellipse cx="101.1" cy="60.0" rx="1.8" ry="0.9" fill="#f0e4c0" opacity="0.54"/><ellipse cx="87.1" cy="67.4" rx="2.3" ry="0.7" fill="#f0e4c0" opacity="0.42"/><ellipse cx="89.6" cy="97.2" rx="1.1" ry="0.6" fill="#f0e4c0" opacity="0.43"/><ellipse cx="79.0" cy="68.2" rx="2.3" ry="0.8" fill="#f0e4c0" opacity="0.74"/><ellipse cx="81.9" cy="60.0" rx="2.8" ry="0.9" fill="#f0e4c0" opacity="0.62"/><ellipse cx="73.0" cy="84.5" rx="2.8" ry="0.6" fill="#f0e4c0" opacity="0.43"/><ellipse cx="90.6" cy="88.0" rx="1.1" ry="0.6" fill="#f0e4c0" opacity="0.89"/><ellipse cx="103.8" cy="94.5" rx="2.6" ry="0.6" fill="#f0e4c0" opacity="0.80"/><path d="M22.6,34.6 q4.8,-1 6.3,0" stroke="#22282a" stroke-width="0.6" fill="none" opacity="0.5"/><path d="M75.0,46.8 q4.1,-1 6.4,0" stroke="#6a6e60" stroke-width="0.6" fill="none" opacity="0.5"/><path d="M45.4,16.3 q2.3,-1 8.6,0" stroke="#22282a" stroke-width="0.6" fill="none" opacity="0.5"/><path d="M68.2,29.1 q4.6,-1 8.6,0" stroke="#22282a" stroke-width="0.6" fill="none" opacity="0.5"/><path d="M87.9,23.7 q2.7,-1 5.8,0" stroke="#6a6e60" stroke-width="0.6" fill="none" opacity="0.5"/><path d="M4.7,41.7 q3.8,-1 9.2,0" stroke="#2a3032" stroke-width="0.6" fill="none" opacity="0.5"/><path d="M85.4,88.7 q3.8,-1 9.8,0" stroke="#2a3032" stroke-width="0.6" fill="none" opacity="0.5"/><path d="M85.3,86.5 q3.6,-1 6.6,0" stroke="#22282a" stroke-width="0.6" fill="none" opacity="0.5"/><path d="M50.5,44.3 q3.1,-1 7.6,0" stroke="#2a3032" stroke-width="0.6" fill="none" opacity="0.5"/><path d="M108.8,68.0 q4.0,-1 5.6,0" stroke="#22282a" stroke-width="0.6" fill="none" opacity="0.5"/><path d="M43.2,71.8 q2.6,-1 7.7,0" stroke="#6a6e60" stroke-width="0.6" fill="none" opacity="0.5"/><path d="M8.7,68.8 q3.3,-1 6.9,0" stroke="#6a6e60" stroke-width="0.6" fill="none" opacity="0.5"/><path d="M23.6,93.8 q3.5,-1 6.9,0" stroke="#6a6e60" stroke-width="0.6" fill="none" opacity="0.5"/><path d="M28.7,85.7 q2.1,-1 6.3,0" stroke="#6a6e60" stroke-width="0.6" fill="none" opacity="0.5"/><path d="M79.1,33.9 q3.4,-1 6.8,0" stroke="#6a6e60" stroke-width="0.6" fill="none" opacity="0.5"/><path d="M47.3,23.2 q3.1,-1 8.3,0" stroke="#22282a" stroke-width="0.6" fill="none" opacity="0.5"/><path d="M108.1,52.3 q4.2,-1 6.3,0" stroke="#6a6e60" stroke-width="0.6" fill="none" opacity="0.5"/><path d="M74.8,38.9 q2.2,-1 6.8,0" stroke="#22282a" stroke-width="0.6" fill="none" opacity="0.5"/><path d="M45.3,67.1 q4.7,-1 9.3,0" stroke="#6a6e60" stroke-width="0.6" fill="none" opacity="0.5"/><path d="M87.5,35.3 q3.0,-1 5.5,0" stroke="#2a3032" stroke-width="0.6" fill="none" opacity="0.5"/><path d="M79.8,57.0 q3.1,-1 6.3,0" stroke="#6a6e60" stroke-width="0.6" fill="none" opacity="0.5"/><path d="M-0.0,27.0 q3.0,-1 7.1,0" stroke="#6a6e60" stroke-width="0.6" fill="none" opacity="0.5"/><path d="M28.2,29.1 q2.5,-1 8.2,0" stroke="#2a3032" stroke-width="0.6" fill="none" opacity="0.5"/><path d="M13.1,39.6 q4.8,-1 9.3,0" stroke="#6a6e60" stroke-width="0.6" fill="none" opacity="0.5"/><path d="M-0.8,30.5 q2.2,-1 7.1,0" stroke="#22282a" stroke-width="0.6" fill="none" opacity="0.5"/><path d="M83.9,47.5 q2.4,-1 9.5,0" stroke="#6a6e60" stroke-width="0.6" fill="none" opacity="0.5"/><path d="M53.7,99.6 q5.0,-1 9.9,0" stroke="#6a6e60" stroke-width="0.6" fill="none" opacity="0.5"/><path d="M39.9,47.9 q2.0,-1 6.9,0" stroke="#6a6e60" stroke-width="0.6" fill="none" opacity="0.5"/><path d="M33.3,73.1 q3.9,-1 5.9,0" stroke="#22282a" stroke-width="0.6" fill="none" opacity="0.5"/><path d="M61.6,64.1 q2.7,-1 5.5,0" stroke="#2a3032" stroke-width="0.6" fill="none" opacity="0.5"/><path d="M93.4,92.4 q2.7,-1 7.9,0" stroke="#2a3032" stroke-width="0.6" fill="none" opacity="0.5"/><path d="M96.4,26.2 q3.7,-1 7.6,0" stroke="#2a3032" stroke-width="0.6" fill="none" opacity="0.5"/><path d="M5.4,54.7 q2.7,-1 7.2,0" stroke="#6a6e60" stroke-width="0.6" fill="none" opacity="0.5"/><path d="M100.2,17.3 q2.7,-1 6.7,0" stroke="#6a6e60" stroke-width="0.6" fill="none" opacity="0.5"/><path d="M22.6,88.0 q2.7,-1 7.9,0" stroke="#6a6e60" stroke-width="0.6" fill="none" opacity="0.5"/><path d="M67.9,59.7 q3.7,-1 6.5,0" stroke="#6a6e60" stroke-width="0.6" fill="none" opacity="0.5"/><path d="M84.3,56.2 q5.0,-1 5.3,0" stroke="#6a6e60" stroke-width="0.6" fill="none" opacity="0.5"/><path d="M48.1,66.3 q2.5,-1 8.0,0" stroke="#6a6e60" stroke-width="0.6" fill="none" opacity="0.5"/><path d="M58.1,48.5 q4.4,-1 5.5,0" stroke="#6a6e60" stroke-width="0.6" fill="none" opacity="0.5"/><path d="M82.3,78.8 q4.8,-1 9.4,0" stroke="#6a6e60" stroke-width="0.6" fill="none" opacity="0.5"/><path d="M48.1,33.9 q2.0,-1 5.5,0" stroke="#22282a" stroke-width="0.6" fill="none" opacity="0.5"/><path d="M16.1,16.4 q3.2,-1 7.3,0" stroke="#2a3032" stroke-width="0.6" fill="none" opacity="0.5"/><path d="M35.0,46.9 q4.1,-1 5.5,0" stroke="#2a3032" stroke-width="0.6" fill="none" opacity="0.5"/><path d="M51.8,47.2 q4.6,-1 6.0,0" stroke="#6a6e60" stroke-width="0.6" fill="none" opacity="0.5"/><path d="M36.1,44.2 q3.8,-1 7.8,0" stroke="#6a6e60" stroke-width="0.6" fill="none" opacity="0.5"/><path d="M82.6,67.9 q4.1,-1 9.2,0" stroke="#6a6e60" stroke-width="0.6" fill="none" opacity="0.5"/><path d="M70.5,60.7 q3.0,-1 6.6,0" stroke="#22282a" stroke-width="0.6" fill="none" opacity="0.5"/><path d="M33.9,51.1 q4.9,-1 6.8,0" stroke="#6a6e60" stroke-width="0.6" fill="none" opacity="0.5"/><path d="M-4.6,99.9 q2.6,-1 7.7,0" stroke="#6a6e60" stroke-width="0.6" fill="none" opacity="0.5"/><path d="M41.7,35.5 q4.4,-1 7.3,0" stroke="#6a6e60" stroke-width="0.6" fill="none" opacity="0.5"/><path d="M88.7,20.9 q3.1,-1 9.4,0" stroke="#6a6e60" stroke-width="0.6" fill="none" opacity="0.5"/><path d="M73.5,72.8 q3.5,-1 7.4,0" stroke="#22282a" stroke-width="0.6" fill="none" opacity="0.5"/><path d="M57.3,21.7 q2.5,-1 5.9,0" stroke="#2a3032" stroke-width="0.6" fill="none" opacity="0.5"/><path d="M52.7,75.0 q4.3,-1 8.3,0" stroke="#6a6e60" stroke-width="0.6" fill="none" opacity="0.5"/><path d="M28.4,60.9 q4.1,-1 8.7,0" stroke="#22282a" stroke-width="0.6" fill="none" opacity="0.5"/><path d="M10.5,41.9 q4.0,-1 7.7,0" stroke="#2a3032" stroke-width="0.6" fill="none" opacity="0.5"/><path d="M85.6,95.0 q4.5,-1 8.4,0" stroke="#2a3032" stroke-width="0.6" fill="none" opacity="0.5"/><path d="M90.5,63.6 q4.3,-1 6.8,0" stroke="#6a6e60" stroke-width="0.6" fill="none" opacity="0.5"/><path d="M58.2,29.8 q2.2,-1 9.7,0" stroke="#22282a" stroke-width="0.6" fill="none" opacity="0.5"/><path d="M65.4,18.8 q4.8,-1 9.9,0" stroke="#2a3032" stroke-width="0.6" fill="none" opacity="0.5"/><path d="M12.0,83.7 q2.2,-1 9.5,0" stroke="#2a3032" stroke-width="0.6" fill="none" opacity="0.5"/><path d="M-2.3,68.0 q2.7,-1 5.4,0" stroke="#2a3032" stroke-width="0.6" fill="none" opacity="0.5"/><path d="M47.2,36.0 q2.5,-1 6.6,0" stroke="#2a3032" stroke-width="0.6" fill="none" opacity="0.5"/><path d="M34.0,18.2 q3.0,-1 5.3,0" stroke="#22282a" stroke-width="0.6" fill="none" opacity="0.5"/><path d="M-2.4,76.4 q2.2,-1 8.5,0" stroke="#2a3032" stroke-width="0.6" fill="none" opacity="0.5"/><path d="M27.1,93.3 q4.7,-1 9.4,0" stroke="#6a6e60" stroke-width="0.6" fill="none" opacity="0.5"/><path d="M64.3,97.5 q3.7,-1 5.0,0" stroke="#22282a" stroke-width="0.6" fill="none" opacity="0.5"/><path d="M79.2,35.1 q2.3,-1 9.6,0" stroke="#2a3032" stroke-width="0.6" fill="none" opacity="0.5"/><path d="M50.7,66.5 q4.7,-1 6.9,0" stroke="#2a3032" stroke-width="0.6" fill="none" opacity="0.5"/><path d="M48.4,82.0 q3.4,-1 6.0,0" stroke="#22282a" stroke-width="0.6" fill="none" opacity="0.5"/><path d="M27.3,78.6 q4.5,-1 6.2,0" stroke="#2a3032" stroke-width="0.6" fill="none" opacity="0.5"/><path d="M30.1,19.8 q2.3,-1 7.2,0" stroke="#6a6e60" stroke-width="0.6" fill="none" opacity="0.5"/><path d="M48.1,45.2 q3.5,-1 8.1,0" stroke="#2a3032" stroke-width="0.6" fill="none" opacity="0.5"/><path d="M86.6,75.5 q3.2,-1 5.8,0" stroke="#6a6e60" stroke-width="0.6" fill="none" opacity="0.5"/><path d="M79.2,71.3 q3.2,-1 7.6,0" stroke="#22282a" stroke-width="0.6" fill="none" opacity="0.5"/><path d="M43.9,31.5 q4.9,-1 6.0,0" stroke="#22282a" stroke-width="0.6" fill="none" opacity="0.5"/><path d="M70.2,36.9 q3.7,-1 9.5,0" stroke="#6a6e60" stroke-width="0.6" fill="none" opacity="0.5"/><path d="M26.7,69.4 q3.4,-1 6.9,0" stroke="#2a3032" stroke-width="0.6" fill="none" opacity="0.5"/><path d="M91.8,42.5 q4.4,-1 9.4,0" stroke="#6a6e60" stroke-width="0.6" fill="none" opacity="0.5"/><path d="M24.2,85.8 q3.7,-1 8.0,0" stroke="#2a3032" stroke-width="0.6" fill="none" opacity="0.5"/><path d="M98.2,74.9 q2.5,-1 8.4,0" stroke="#22282a" stroke-width="0.6" fill="none" opacity="0.5"/><path d="M85.4,73.0 q4.4,-1 7.2,0" stroke="#2a3032" stroke-width="0.6" fill="none" opacity="0.5"/><path d="M77.0,52.7 q4.5,-1 5.8,0" stroke="#22282a" stroke-width="0.6" fill="none" opacity="0.5"/><path d="M53.6,28.5 q2.7,-1 9.3,0" stroke="#6a6e60" stroke-width="0.6" fill="none" opacity="0.5"/><path d="M26.9,24.4 q4.2,-1 9.2,0" stroke="#22282a" stroke-width="0.6" fill="none" opacity="0.5"/><path d="M49.6,61.2 q3.3,-1 7.5,0" stroke="#22282a" stroke-width="0.6" fill="none" opacity="0.5"/><path d="M-3.1,94.1 q2.6,-1 5.2,0" stroke="#2a3032" stroke-width="0.6" fill="none" opacity="0.5"/><path d="M60.5,61.2 q2.7,-1 8.9,0" stroke="#6a6e60" stroke-width="0.6" fill="none" opacity="0.5"/><path d="M67.5,65.9 q4.8,-1 5.9,0" stroke="#6a6e60" stroke-width="0.6" fill="none" opacity="0.5"/><path d="M37.7,56.3 q2.2,-1 8.2,0" stroke="#2a3032" stroke-width="0.6" fill="none" opacity="0.5"/></g><path d="M10,52 C30,56 60,64 90,72 C105,78 112,84 117,88 L117,104 C100,96 70,86 40,78 C25,72 15,62 10,52 Z" fill="#2a3030" opacity="0.6" filter="url(#f14b)"/><path d="M0,48 C6,56 10,66 18,76 C30,88 55,96 75,104 C90,110 105,112 117,114 L0,114 Z" fill="url(#g14f)" filter="url(#f14b)"/></svg></div>
<div class="tile"><svg viewBox="0 0 117 112" preserveAspectRatio="none"><defs><linearGradient id="g15a" x1="0" y1="0" x2="0" y2="1"><stop offset="0" stop-color="#e6b88a"/><stop offset="0.5" stop-color="#eba470"/><stop offset="1" stop-color="#e89860"/></linearGradient><linearGradient id="g15w" x1="0" y1="0" x2="0" y2="1"><stop offset="0" stop-color="#3c3a34"/><stop offset="0.5" stop-color="#43443e"/><stop offset="1" stop-color="#3a3c38"/></linearGradient><filter id="f15" x="-0.3" y="-0.5" width="1.6" height="2"><feGaussianBlur stdDeviation="2.5"/></filter></defs><rect width="117" height="112" fill="url(#g15a)"/><path d="M0,36 L8,37 L18,39 L26,43 L34,44 L39,50 L38,56 L0,58 Z" fill="#5a3218"/><rect x="0" y="55" width="117" height="57" fill="url(#g15w)"/><path d="M12.7,57.8 q22.2,-1.2 53.0,0" stroke="#8a8272" stroke-width="0.7" fill="none" opacity="0.74"/><path d="M-5.5,60.9 q13.7,-1.2 27.9,0" stroke="#a08a70" stroke-width="0.7" fill="none" opacity="0.73"/><path d="M6.4,62.8 q10.0,-1.2 57.1,0" stroke="#6a665c" stroke-width="0.7" fill="none" opacity="0.55"/><path d="M55.0,65.8 q11.7,-1.2 32.8,0" stroke="#8a8272" stroke-width="0.7" fill="none" opacity="0.45"/><path d="M30.7,68.2 q17.4,-1.2 25.8,0" stroke="#6a665c" stroke-width="0.7" fill="none" opacity="0.48"/><path d="M58.1,70.0 q16.2,-1.2 57.6,0" stroke="#222220" stroke-width="0.7" fill="none" opacity="0.49"/><path d="M45.7,72.9 q22.1,-1.2 51.2,0" stroke="#222220" stroke-width="0.7" fill="none" opacity="0.63"/><path d="M58.2,75.5 q14.1,-1.2 54.0,0" stroke="#222220" stroke-width="0.7" fill="none" opacity="0.48"/><path d="M9.4,77.5 q24.3,-1.2 56.6,0" stroke="#8a8272" stroke-width="0.7" fill="none" opacity="0.43"/><path d="M69.3,80.4 q24.7,-1.2 25.5,0" stroke="#222220" stroke-width="0.7" fill="none" opacity="0.65"/><path d="M32.3,83.3 q12.0,-1.2 35.5,0" stroke="#6a665c" stroke-width="0.7" fill="none" opacity="0.46"/><path d="M-9.8,85.4 q14.4,-1.2 38.4,0" stroke="#a08a70" stroke-width="0.7" fill="none" opacity="0.61"/><path d="M-3.9,87.7 q10.7,-1.2 27.8,0" stroke="#8a8272" stroke-width="0.7" fill="none" opacity="0.72"/><path d="M39.1,90.3 q22.1,-1.2 29.0,0" stroke="#8a8272" stroke-width="0.7" fill="none" opacity="0.80"/><path d="M60.1,92.8 q23.7,-1.2 49.7,0" stroke="#222220" stroke-width="0.7" fill="none" opacity="0.65"/><path d="M70.6,95.7 q11.8,-1.2 41.2,0" stroke="#222220" stroke-width="0.7" fill="none" opacity="0.79"/><path d="M29.2,97.9 q13.4,-1.2 58.9,0" stroke="#a08a70" stroke-width="0.7" fill="none" opacity="0.59"/><path d="M24.1,100.7 q17.8,-1.2 44.5,0" stroke="#8a8272" stroke-width="0.7" fill="none" opacity="0.63"/><path d="M13.6,103.2 q23.9,-1.2 30.4,0" stroke="#222220" stroke-width="0.7" fill="none" opacity="0.71"/><path d="M3.7,105.3 q17.8,-1.2 39.9,0" stroke="#a08a70" stroke-width="0.7" fill="none" opacity="0.76"/><path d="M40.5,107.7 q16.2,-1.2 26.2,0" stroke="#222220" stroke-width="0.7" fill="none" opacity="0.67"/><path d="M72.0,110.8 q16.6,-1.2 51.7,0" stroke="#8a8272" stroke-width="0.7" fill="none" opacity="0.77"/><path d="M40,52 C50,46 70,48 90,54 C95,60 100,64 105,66 C90,62 70,58 40,60 Z" fill="#f6d2a8" opacity="0.85" filter="url(#f15)"/><ellipse cx="46" cy="64" rx="10" ry="6" fill="#8a8a84" opacity="0.7" filter="url(#f15)"/><circle cx="18" cy="80" r="1.3" fill="#1a1410"/></svg></div>
<div class="tile"><svg viewBox="0 0 117 112" preserveAspectRatio="none"><defs><linearGradient id="g16a" x1="0" y1="0" x2="0" y2="1"><stop offset="0" stop-color="#b4c2c4"/><stop offset="0.5" stop-color="#d0d8d8"/><stop offset="1" stop-color="#c4d0d2"/></linearGradient><linearGradient id="g16b" x1="0" y1="0" x2="0" y2="1"><stop offset="0" stop-color="#2c5866"/><stop offset="0.5" stop-color="#3e6a76"/><stop offset="1" stop-color="#7898a2"/></linearGradient><filter id="f16"><feGaussianBlur stdDeviation="0.6"/></filter></defs><rect width="117" height="112" fill="#d8b4a6"/><rect x="0" y="14" width="117" height="22" fill="#8c6c56"/><path d="M4,36 L4,14" stroke="#4e3a2c" stroke-width="0.8"/><ellipse cx="4" cy="23" rx="3.7" ry="10" fill="#5e4838" opacity="0.9"/><path d="M12,36 L12,10" stroke="#4e3a2c" stroke-width="0.8"/><ellipse cx="12" cy="19" rx="4.1" ry="11" fill="#5e4838" opacity="0.9"/><path d="M22,36 L22,16" stroke="#4e3a2c" stroke-width="0.8"/><ellipse cx="22" cy="25" rx="4.9" ry="9" fill="#5e4838" opacity="0.9"/><path d="M35,36 L35,6" stroke="#4e3a2c" stroke-width="0.8"/><ellipse cx="35" cy="15" rx="3.5" ry="13" fill="#5e4838" opacity="0.9"/><path d="M46,36 L46,12" stroke="#4e3a2c" stroke-width="0.8"/><ellipse cx="46" cy="21" rx="4.3" ry="11" fill="#5e4838" opacity="0.9"/><path d="M55,36 L55,8" stroke="#4e3a2c" stroke-width="0.8"/><ellipse cx="55" cy="17" rx="3.8" ry="12" fill="#5e4838" opacity="0.9"/><path d="M66,36 L66,2" stroke="#4e3a2c" stroke-width="0.8"/><ellipse cx="66" cy="11" rx="4.4" ry="14" fill="#5e4838" opacity="0.9"/><path d="M74,36 L74,6" stroke="#4e3a2c" stroke-width="0.8"/><ellipse cx="74" cy="15" rx="3.5" ry="13" fill="#5e4838" opacity="0.9"/><path d="M82,36 L82,3" stroke="#4e3a2c" stroke-width="0.8"/><ellipse cx="82" cy="12" rx="3.8" ry="14" fill="#5e4838" opacity="0.9"/><path d="M90,36 L90,8" stroke="#4e3a2c" stroke-width="0.8"/><ellipse cx="90" cy="17" rx="3.9" ry="12" fill="#5e4838" opacity="0.9"/><path d="M98,36 L98,4" stroke="#4e3a2c" stroke-width="0.8"/><ellipse cx="98" cy="13" rx="3.7" ry="13" fill="#5e4838" opacity="0.9"/><path d="M106,36 L106,6" stroke="#4e3a2c" stroke-width="0.8"/><ellipse cx="106" cy="15" rx="3.7" ry="13" fill="#5e4838" opacity="0.9"/><path d="M114,36 L114,3" stroke="#4e3a2c" stroke-width="0.8"/><ellipse cx="114" cy="12" rx="3.9" ry="14" fill="#5e4838" opacity="0.9"/><rect x="2" y="16" width="8" height="10" fill="#e0a878" opacity="0.8"/><rect x="22" y="14" width="14" height="10" fill="#e6c0a0" opacity="0.8"/><rect x="48" y="30" width="14" height="5" fill="#c89070" opacity="0.8"/><rect x="0" y="35" width="117" height="6" fill="#dcb8a4"/><rect x="0" y="41" width="117" height="36" fill="url(#g16a)"/><path d="M0,70 C20,62 40,58 56,62 C62,64 66,68 68,72 C80,64 96,62 117,64 L117,112 L0,112 Z" fill="url(#g16b)"/><g filter="url(#f16)"><path d="M52.1,71.8 q13.2,-9.2 26.4,-5.3" stroke="#dfe8e8" stroke-width="0.7" fill="none" opacity="0.28"/><path d="M18.9,101.3 q5.5,-3.8 10.9,-2.2" stroke="#dfe8e8" stroke-width="0.8" fill="none" opacity="0.23"/><path d="M103.3,83.1 q11.0,-7.7 22.0,-4.4" stroke="#dfe8e8" stroke-width="0.9" fill="none" opacity="0.23"/><path d="M-2.3,95.1 q10.9,-7.6 21.8,-4.4" stroke="#dfe8e8" stroke-width="0.8" fill="none" opacity="0.28"/><path d="M49.6,73.8 q9.4,-6.6 18.7,-3.7" stroke="#dfe8e8" stroke-width="0.6" fill="none" opacity="0.38"/><path d="M25.9,77.5 q11.4,-8.0 22.8,-4.6" stroke="#dfe8e8" stroke-width="0.5" fill="none" opacity="0.44"/><path d="M49.5,75.6 q6.1,-4.3 12.3,-2.5" stroke="#dfe8e8" stroke-width="0.7" fill="none" opacity="0.35"/><path d="M76.3,81.7 q9.1,-6.4 18.2,-3.6" stroke="#dfe8e8" stroke-width="0.9" fill="none" opacity="0.28"/><path d="M107.7,103.5 q14.9,-10.4 29.8,-6.0" stroke="#dfe8e8" stroke-width="1.0" fill="none" opacity="0.28"/><path d="M87.7,91.7 q7.0,-4.9 14.1,-2.8" stroke="#dfe8e8" stroke-width="1.0" fill="none" opacity="0.39"/><path d="M87.2,89.4 q5.8,-4.1 11.6,-2.3" stroke="#dfe8e8" stroke-width="0.9" fill="none" opacity="0.25"/><path d="M21.1,91.9 q6.9,-4.9 13.9,-2.8" stroke="#dfe8e8" stroke-width="0.7" fill="none" opacity="0.41"/><path d="M1.5,93.7 q6.0,-4.2 12.1,-2.4" stroke="#dfe8e8" stroke-width="0.7" fill="none" opacity="0.39"/><path d="M72.5,67.8 q6.9,-4.8 13.8,-2.8" stroke="#dfe8e8" stroke-width="1.0" fill="none" opacity="0.32"/><path d="M41.0,81.7 q12.0,-8.4 23.9,-4.8" stroke="#dfe8e8" stroke-width="0.8" fill="none" opacity="0.40"/><path d="M38.3,89.9 q10.2,-7.1 20.3,-4.1" stroke="#dfe8e8" stroke-width="0.5" fill="none" opacity="0.48"/><path d="M105.8,98.7 q14.9,-10.4 29.9,-6.0" stroke="#dfe8e8" stroke-width="0.7" fill="none" opacity="0.45"/><path d="M18.9,97.2 q12.1,-8.5 24.3,-4.9" stroke="#dfe8e8" stroke-width="1.0" fill="none" opacity="0.45"/><path d="M95.5,77.2 q12.9,-9.0 25.7,-5.1" stroke="#dfe8e8" stroke-width="0.7" fill="none" opacity="0.29"/><path d="M34.2,99.6 q13.4,-9.4 26.9,-5.4" stroke="#dfe8e8" stroke-width="0.9" fill="none" opacity="0.40"/><path d="M10.4,72.5 q10.7,-7.5 21.4,-4.3" stroke="#dfe8e8" stroke-width="0.5" fill="none" opacity="0.30"/><path d="M2.3,72.5 q12.2,-8.5 24.3,-4.9" stroke="#dfe8e8" stroke-width="0.5" fill="none" opacity="0.45"/><path d="M29.5,101.7 q8.0,-5.6 16.1,-3.2" stroke="#dfe8e8" stroke-width="0.6" fill="none" opacity="0.32"/><path d="M-8.5,84.3 q8.8,-6.2 17.6,-3.5" stroke="#dfe8e8" stroke-width="0.4" fill="none" opacity="0.46"/><path d="M35.0,66.0 q14.6,-10.2 29.2,-5.8" stroke="#dfe8e8" stroke-width="0.5" fill="none" opacity="0.28"/><path d="M-7.1,70.2 q12.1,-8.5 24.2,-4.8" stroke="#dfe8e8" stroke-width="0.7" fill="none" opacity="0.35"/><path d="M19.5,78.0 q14.7,-10.3 29.4,-5.9" stroke="#dfe8e8" stroke-width="0.6" fill="none" opacity="0.50"/><path d="M96.4,71.2 q13.5,-9.4 27.0,-5.4" stroke="#dfe8e8" stroke-width="0.4" fill="none" opacity="0.41"/><path d="M87.2,95.2 q10.5,-7.3 21.0,-4.2" stroke="#dfe8e8" stroke-width="0.9" fill="none" opacity="0.25"/><path d="M54.8,77.2 q9.0,-6.3 18.0,-3.6" stroke="#dfe8e8" stroke-width="0.5" fill="none" opacity="0.41"/><path d="M58.8,98.7 q11.3,-7.9 22.6,-4.5" stroke="#dfe8e8" stroke-width="0.8" fill="none" opacity="0.48"/><path d="M87.5,89.8 q8.3,-5.8 16.5,-3.3" stroke="#dfe8e8" stroke-width="1.0" fill="none" opacity="0.31"/><path d="M2.3,80.0 q12.1,-8.4 24.1,-4.8" stroke="#dfe8e8" stroke-width="1.0" fill="none" opacity="0.39"/><path d="M69.5,105.4 q12.8,-8.9 25.6,-5.1" stroke="#dfe8e8" stroke-width="0.7" fill="none" opacity="0.34"/><path d="M81.2,79.3 q6.1,-4.3 12.2,-2.4" stroke="#dfe8e8" stroke-width="0.8" fill="none" opacity="0.44"/><path d="M19.8,94.7 q13.9,-9.7 27.9,-5.6" stroke="#dfe8e8" stroke-width="0.5" fill="none" opacity="0.24"/><path d="M49.2,80.0 q14.5,-10.1 29.0,-5.8" stroke="#dfe8e8" stroke-width="1.0" fill="none" opacity="0.33"/><path d="M85.2,92.5 q6.7,-4.7 13.5,-2.7" stroke="#dfe8e8" stroke-width="1.0" fill="none" opacity="0.25"/><path d="M-0.9,85.0 q5.2,-3.6 10.4,-2.1" stroke="#dfe8e8" stroke-width="0.7" fill="none" opacity="0.32"/><path d="M104.5,83.4 q13.5,-9.4 27.0,-5.4" stroke="#dfe8e8" stroke-width="0.9" fill="none" opacity="0.38"/></g><path d="M44,62 C54,52 64,56 70,62 C72,70 72,76 74,80 C66,74 58,66 44,64 Z" fill="#e0e8e8" opacity="0.7" filter="url(#f16)"/><path d="M58,66 L61,60 L63,68 L60,72 Z" fill="#202020"/></svg></div>
<div class="tile"><svg viewBox="0 0 117 112" preserveAspectRatio="none"><defs><linearGradient id="g17a" x1="0" y1="0" x2="1" y2="0"><stop offset="0" stop-color="#d4ccd0"/><stop offset="0.5" stop-color="#c8d2d2"/><stop offset="1" stop-color="#b8cacc"/></linearGradient></defs><rect width="117" height="112" fill="#1d2526"/><rect x="0" y="0" width="117" height="48" fill="url(#g17a)"/><rect x="92" y="0" width="25" height="54" fill="#0e1415"/><rect x="0" y="42" width="92" height="10" fill="#b8c8c8"/><path d="M0,50 L92,52 L117,56 L117,62 L60,68 L0,60 Z" fill="#5a6464"/><path d="M0,62 C40,64 66,72 74,88 L78,112 L0,112 Z" fill="#1c2222"/><path d="M0,62 C40,64 66,72 74,88 L78,112" stroke="#3a4444" stroke-width="1.2" fill="none"/><rect x="40" y="15" width="6" height="27" fill="#6a9eae"/><rect x="59" y="15" width="5.5" height="26" fill="#6a9eae"/><rect x="52" y="17" width="3" height="5" fill="#3a5070"/><circle cx="106" cy="24" r="1.7" fill="#e8d030"/><path d="M72,18 L72,14 C72,12 78,12 78,14 L78,18 L80,19 L70,19 Z" fill="#8a7a58"/><ellipse cx="75" cy="21" rx="3.2" ry="3.5" fill="#141a1a"/><path d="M68,36 C68,28 71,24 75,24 C80,24 86,27 88,33 L85,44 L82,46 L82,76 L78,77 L76,58 L74,77 L70,77 L70,56 L68,44 Z" fill="#111617"/></svg></div>
<div class="tile" style="background:repeating-linear-gradient(90deg,rgba(255,255,255,0.18) 0px,rgba(255,255,255,0) 2px,rgba(0,0,0,0.04) 3.5px,rgba(255,255,255,0.18) 4.3px),radial-gradient(ellipse 42% 32% at 78% 42%,rgba(236,96,112,0.85),rgba(236,96,112,0) 100%),linear-gradient(180deg,rgba(220,218,208,0) 0%,rgba(220,218,208,0) 30%,rgba(220,218,208,1) 66%),linear-gradient(90deg,#f8d49a 0%,#f4c858 30%,#e2a832 55%,#d48e48 80%,#e89088 100%),#dcdad0"></div>
<div class="tile"><svg viewBox="0 0 117 112" preserveAspectRatio="none"><defs><linearGradient id="g19a" x1="0" y1="0" x2="1" y2="0"><stop offset="0" stop-color="#98a8a0"/><stop offset="0.12" stop-color="#80b490"/><stop offset="0.22" stop-color="#a0b8a0"/><stop offset="0.35" stop-color="#c8a0b0"/><stop offset="0.5" stop-color="#bca8b4"/><stop offset="1" stop-color="#aca4ac"/></linearGradient><linearGradient id="g19b" x1="0" y1="0" x2="0" y2="1"><stop offset="0" stop-color="#a8a0b0" stop-opacity="0.3"/><stop offset="1" stop-color="#d0c8c4" stop-opacity="0.4"/></linearGradient></defs><rect width="117" height="112" fill="#b4a6ae"/><rect x="0" y="0" width="117" height="68" fill="url(#g19a)"/><rect x="0" y="0" width="117" height="68" fill="url(#g19b)"/><rect x="0" y="64" width="117" height="5" fill="#d4ccc6"/><path d="M0,69 L117,69 L117,86 C90,80 60,78 0,76 Z" fill="#8e8048"/><rect x="0" y="76" width="117" height="36" fill="#aa9e9a"/><ellipse cx="27.8" cy="84.2" rx="2.7" ry="1.3" fill="#5a7a3a" opacity="0.85"/><ellipse cx="37.8" cy="96.3" rx="4.0" ry="1.0" fill="#4e6a38" opacity="0.85"/><ellipse cx="115.4" cy="73.1" rx="3.6" ry="1.8" fill="#a08040" opacity="0.85"/><ellipse cx="81.6" cy="110.6" rx="3.6" ry="1.5" fill="#4e6a38" opacity="0.85"/><ellipse cx="1.5" cy="87.3" rx="2.2" ry="1.5" fill="#5a7a3a" opacity="0.85"/><ellipse cx="58.5" cy="93.1" rx="1.8" ry="0.9" fill="#5a7a3a" opacity="0.85"/><ellipse cx="58.3" cy="89.3" rx="2.8" ry="0.8" fill="#a08040" opacity="0.85"/><ellipse cx="101.9" cy="111.5" rx="3.4" ry="0.9" fill="#a08040" opacity="0.85"/><ellipse cx="77.8" cy="83.1" rx="3.8" ry="1.8" fill="#8a7a40" opacity="0.85"/><ellipse cx="41.1" cy="90.7" rx="1.8" ry="1.6" fill="#5a7a3a" opacity="0.85"/><ellipse cx="38.8" cy="93.7" rx="3.8" ry="1.5" fill="#5a7a3a" opacity="0.85"/><ellipse cx="50.4" cy="107.3" rx="3.1" ry="1.5" fill="#8a7a40" opacity="0.85"/><ellipse cx="72.9" cy="91.1" rx="3.1" ry="1.4" fill="#4e6a38" opacity="0.85"/><ellipse cx="110.8" cy="72.6" rx="2.3" ry="1.9" fill="#5a7a3a" opacity="0.85"/><ellipse cx="89.5" cy="81.8" rx="3.8" ry="1.0" fill="#4e6a38" opacity="0.85"/><ellipse cx="27.9" cy="87.2" rx="2.1" ry="1.6" fill="#4e6a38" opacity="0.85"/><ellipse cx="71.9" cy="77.7" rx="3.5" ry="1.8" fill="#5a7a3a" opacity="0.85"/><ellipse cx="28.9" cy="92.6" rx="2.5" ry="1.2" fill="#a08040" opacity="0.85"/><ellipse cx="20.5" cy="94.3" rx="3.4" ry="1.9" fill="#5a7a3a" opacity="0.85"/><ellipse cx="61.8" cy="103.8" rx="1.6" ry="0.9" fill="#5a7a3a" opacity="0.85"/><ellipse cx="46.5" cy="93.9" rx="3.8" ry="0.9" fill="#4e6a38" opacity="0.85"/><ellipse cx="8.3" cy="87.2" rx="3.8" ry="1.5" fill="#5a7a3a" opacity="0.85"/><ellipse cx="67.9" cy="76.9" rx="3.5" ry="1.4" fill="#8a7a40" opacity="0.85"/><ellipse cx="57.0" cy="105.5" rx="1.8" ry="1.9" fill="#8a7a40" opacity="0.85"/><ellipse cx="94.8" cy="81.2" rx="1.5" ry="1.8" fill="#4e6a38" opacity="0.85"/><ellipse cx="11.4" cy="102.7" rx="3.4" ry="1.6" fill="#4e6a38" opacity="0.85"/><ellipse cx="114.4" cy="77.2" rx="2.0" ry="1.6" fill="#a08040" opacity="0.85"/><ellipse cx="80.1" cy="106.0" rx="2.9" ry="1.1" fill="#4e6a38" opacity="0.85"/><ellipse cx="70.8" cy="79.3" rx="3.0" ry="1.2" fill="#8a7a40" opacity="0.85"/><ellipse cx="28.3" cy="99.9" rx="3.2" ry="0.9" fill="#4e6a38" opacity="0.85"/><ellipse cx="89.7" cy="84.3" rx="1.7" ry="1.1" fill="#a08040" opacity="0.85"/><ellipse cx="94.3" cy="93.6" rx="2.6" ry="0.9" fill="#a08040" opacity="0.85"/><ellipse cx="102.9" cy="78.5" rx="1.7" ry="1.7" fill="#5a7a3a" opacity="0.85"/><ellipse cx="106.3" cy="88.0" rx="1.8" ry="1.3" fill="#5a7a3a" opacity="0.85"/><ellipse cx="102.2" cy="88.4" rx="2.6" ry="0.8" fill="#4e6a38" opacity="0.85"/><ellipse cx="23.5" cy="95.5" rx="2.6" ry="1.2" fill="#a08040" opacity="0.85"/><ellipse cx="62.2" cy="100.0" rx="1.8" ry="1.3" fill="#4e6a38" opacity="0.85"/><ellipse cx="49.0" cy="83.7" rx="1.8" ry="1.3" fill="#a08040" opacity="0.85"/><ellipse cx="33.0" cy="106.6" rx="3.1" ry="1.4" fill="#a08040" opacity="0.85"/><ellipse cx="72.8" cy="75.6" rx="1.8" ry="0.9" fill="#a08040" opacity="0.85"/><ellipse cx="100.9" cy="82.3" rx="2.1" ry="0.9" fill="#8a7a40" opacity="0.85"/><ellipse cx="59.8" cy="79.6" rx="1.5" ry="1.9" fill="#4e6a38" opacity="0.85"/><ellipse cx="44.0" cy="76.9" rx="3.1" ry="1.7" fill="#a08040" opacity="0.85"/><ellipse cx="77.2" cy="84.3" rx="2.8" ry="1.1" fill="#a08040" opacity="0.85"/><ellipse cx="97.2" cy="83.5" rx="3.7" ry="1.7" fill="#a08040" opacity="0.85"/></svg></div>
<div class="tile"><svg viewBox="0 0 117 112" preserveAspectRatio="none"><rect width="117" height="112" fill="#ecebe9"/><rect x="16.3" y="0" width="43.5" height="23.7" fill="#e4dfd8"/><rect x="16.3" y="0" width="32.1" height="22" fill="#8c7a68"/><rect x="69.7" y="1" width="35.5" height="25.2" fill="#e4dfd8"/><rect x="69.7" y="1" width="19.3" height="24" fill="#8e7c6a"/><rect x="71" y="3" width="17" height="10" fill="#aab4b4"/><circle cx="31.8" cy="16.8" r="5.8" fill="#f2f2f0"/><circle cx="84.5" cy="22.5" r="2.8" fill="#a81818"/><rect x="16.8" y="34.6" width="88.4" height="29.1" fill="#e6e1da"/><rect x="16.8" y="34.6" width="72.2" height="28" fill="#b2a08c"/><rect x="16.8" y="41" width="21" height="10" fill="#8a7662"/><rect x="16.8" y="54" width="21" height="8" fill="#8a7662"/><circle cx="42.5" cy="60" r="2.6" fill="#6a6664"/><circle cx="70" cy="58.5" r="2.4" fill="#6a6664"/><rect x="17.3" y="71" width="88" height="31" fill="#e6e1da"/><rect x="17.3" y="71" width="70.7" height="30" fill="#9c8876"/><ellipse cx="72" cy="88" rx="14" ry="12" fill="#b8a08a"/><ellipse cx="55" cy="80" rx="8" ry="6" fill="#aa927c"/></svg></div>
<div class="tile" style="background:#222222"><div style="position:absolute;left:0;right:0;top:50%;margin-top:-1px;text-align:center;height:2px"><span style="display:inline-block;width:2.4px;height:2.4px;border-radius:50%;background:#cfcfcf;margin:0 1.3px;vertical-align:top"></span><span style="display:inline-block;width:2.4px;height:2.4px;border-radius:50%;background:#cfcfcf;margin:0 1.3px;vertical-align:top"></span><span style="display:inline-block;width:2.4px;height:2.4px;border-radius:50%;background:#cfcfcf;margin:0 1.3px;vertical-align:top"></span></div></div>
</div>
</div>

<div class="abs btn">Fine-tune</div>

</body></html>
